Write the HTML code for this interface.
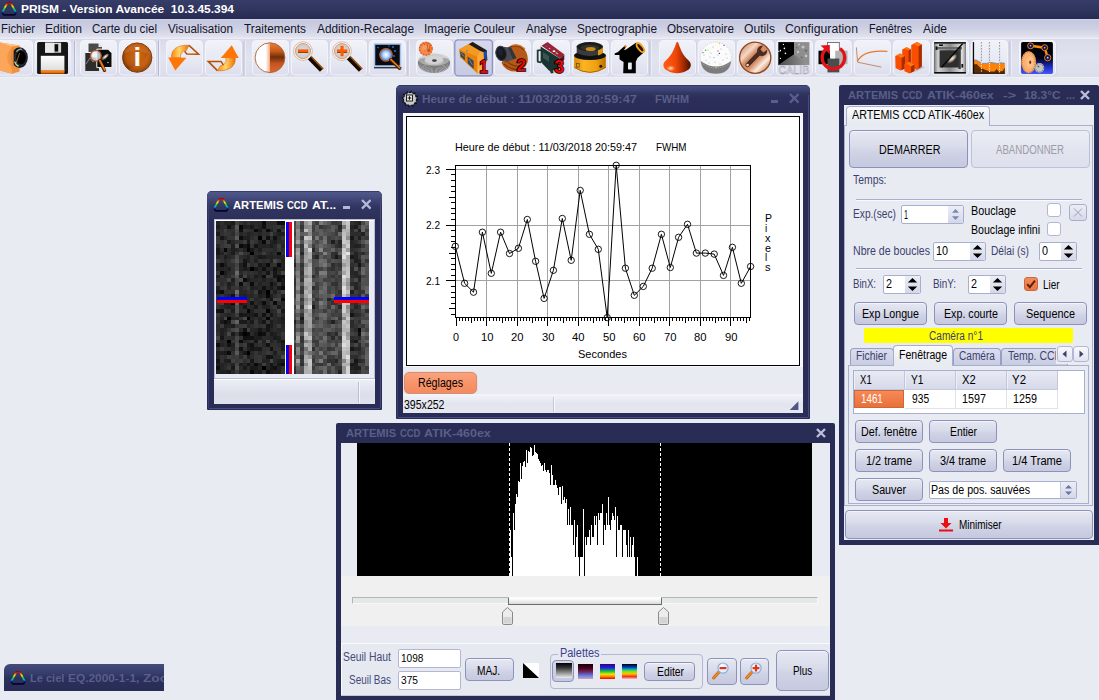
<!DOCTYPE html>
<html lang="fr"><head><meta charset="utf-8"><title>PRISM - Version Avancée 10.3.45.394</title>
<style>html,body{margin:0;padding:0;}body{width:1099px;height:700px;overflow:hidden;position:relative;background:#e8ebf1;font-family:'Liberation Sans', sans-serif;}div,svg,span{position:absolute;}span{white-space:pre;line-height:1;transform-origin:0 50%;}</style></head>
<body>
<div style="left:0px;top:0px;width:1099px;height:700px;background:#e8ebf1;"></div>
<div style="left:0px;top:0px;width:1099px;height:19px;background:linear-gradient(#363d69,#30365f 45%,#262b53);"></div>
<svg style="left:0.5px;top:1.6px;" width="16" height="14" viewBox="0 0 16 14"><defs><linearGradient id="pg501" x1="0" y1="0" x2="0" y2="1"><stop offset="0" stop-color="#a00000"/><stop offset="0.14" stop-color="#ff6000"/><stop offset="0.3" stop-color="#f0e800"/><stop offset="0.5" stop-color="#10d020"/><stop offset="0.66" stop-color="#00b8e8"/><stop offset="0.78" stop-color="#1030a0"/><stop offset="0.88" stop-color="#08083c"/><stop offset="1" stop-color="#04042c"/></linearGradient></defs><path d="M6.3 1 L9.9 1 L15 10.6 L13.6 12.8 L2.6 12.8 L1.2 10.6 Z" fill="none" stroke="url(#pg501)" stroke-width="1.7" stroke-linejoin="round"/></svg>
<span style="left:21px;top:4.19px;font-size:11px;color:#fff;font-weight:700;transform:scaleX(1.0863);">PRISM - Version Avancée  10.3.45.394</span>
<div style="left:0px;top:19px;width:1099px;height:20px;background:linear-gradient(#d6d8e9 0,#c5c8de 7%,#cdd0e3 45%,#dcdeec 82%,#e6e7f1 94%,#eff0f7 100%);"></div>
<span style="left:1px;top:23.42px;font-size:12.5px;color:#14142a;transform:scaleX(0.9063);">Fichier</span>
<span style="left:45px;top:23.42px;font-size:12.5px;color:#14142a;transform:scaleX(0.9677);">Edition</span>
<span style="left:92px;top:23.42px;font-size:12.5px;color:#14142a;transform:scaleX(0.9261);">Carte du ciel</span>
<span style="left:168px;top:23.42px;font-size:12.5px;color:#14142a;transform:scaleX(0.9292);">Visualisation</span>
<span style="left:244px;top:23.42px;font-size:12.5px;color:#14142a;transform:scaleX(0.9461);">Traitements</span>
<span style="left:317px;top:23.42px;font-size:12.5px;color:#14142a;transform:scaleX(0.9495);">Addition-Recalage</span>
<span style="left:424px;top:23.42px;font-size:12.5px;color:#14142a;transform:scaleX(0.9490);">Imagerie Couleur</span>
<span style="left:526px;top:23.42px;font-size:12.5px;color:#14142a;transform:scaleX(0.9217);">Analyse</span>
<span style="left:577px;top:23.42px;font-size:12.5px;color:#14142a;transform:scaleX(0.9436);">Spectrographie</span>
<span style="left:667px;top:23.42px;font-size:12.5px;color:#14142a;transform:scaleX(0.9362);">Observatoire</span>
<span style="left:744px;top:23.42px;font-size:12.5px;color:#14142a;transform:scaleX(0.9702);">Outils</span>
<span style="left:785px;top:23.42px;font-size:12.5px;color:#14142a;transform:scaleX(0.9817);">Configuration</span>
<span style="left:869px;top:23.42px;font-size:12.5px;color:#14142a;transform:scaleX(0.8714);">Fenêtres</span>
<span style="left:923px;top:23.42px;font-size:12.5px;color:#14142a;transform:scaleX(0.9588);">Aide</span>
<div style="left:0px;top:39px;width:1099px;height:38px;background:linear-gradient(#d9dbea,#e1e3ef 50%,#dcdeeb);"></div>
<div style="left:0px;top:77px;width:1099px;height:1px;background:#eef0f6;"></div>
<svg style="left:0px;top:0px;" width="1099" height="80" viewBox="0 0 1099 80"><defs><linearGradient id="tb" x1="0" y1="0" x2="0" y2="1"><stop offset="0" stop-color="#f1f2f9"/><stop offset="0.5" stop-color="#e8eaf4"/><stop offset="1" stop-color="#dcdeee"/></linearGradient><linearGradient id="tbp" x1="0" y1="0" x2="0" y2="1"><stop offset="0" stop-color="#d6d9ec"/><stop offset="1" stop-color="#c6cae2"/></linearGradient><radialGradient id="gInfo" cx="0.5" cy="0.45" r="0.55"><stop offset="0" stop-color="#cf6a14"/><stop offset="0.7" stop-color="#b4540c"/><stop offset="1" stop-color="#6e3004"/></radialGradient><linearGradient id="gRib" x1="0" y1="0" x2="1" y2="0"><stop offset="0" stop-color="#ff8a10"/><stop offset="0.45" stop-color="#ffd468"/><stop offset="1" stop-color="#f07000"/></linearGradient><linearGradient id="gConR" x1="0" y1="0" x2="0" y2="1"><stop offset="0" stop-color="#e88040"/><stop offset="0.28" stop-color="#c85a18"/><stop offset="0.48" stop-color="#6e2e0c"/><stop offset="0.7" stop-color="#c85420"/><stop offset="1" stop-color="#d86a30"/></linearGradient><linearGradient id="gConL" x1="0" y1="0" x2="1" y2="0"><stop offset="0" stop-color="#fff"/><stop offset="0.72" stop-color="#fff"/><stop offset="1" stop-color="#f0a880"/></linearGradient><radialGradient id="gLens" cx="0.5" cy="0.5" r="0.6"><stop offset="0" stop-color="#dcdcdc"/><stop offset="1" stop-color="#c4c4c4"/></radialGradient><linearGradient id="gCone" x1="0" y1="0" x2="1" y2="0"><stop offset="0" stop-color="#ff5a18"/><stop offset="0.45" stop-color="#f04808"/><stop offset="0.75" stop-color="#a02800"/><stop offset="1" stop-color="#4a1000"/></linearGradient><linearGradient id="gWr" x1="0" y1="0" x2="1" y2="1"><stop offset="0" stop-color="#c06a3a"/><stop offset="0.3" stop-color="#f4d8c8"/><stop offset="0.42" stop-color="#d08a60"/><stop offset="0.58" stop-color="#d89068"/><stop offset="0.72" stop-color="#fbeee6"/><stop offset="0.86" stop-color="#d89068"/><stop offset="1" stop-color="#a85830"/></linearGradient><linearGradient id="gYel" x1="0" y1="0" x2="1" y2="0"><stop offset="0" stop-color="#d88a00"/><stop offset="0.3" stop-color="#fbb424"/><stop offset="0.7" stop-color="#f0a010"/><stop offset="1" stop-color="#b87000"/></linearGradient><linearGradient id="gBlue" x1="0" y1="0" x2="0" y2="1"><stop offset="0" stop-color="#000"/><stop offset="0.5" stop-color="#000018"/><stop offset="0.8" stop-color="#2030c8"/><stop offset="1" stop-color="#4458f8"/></linearGradient><linearGradient id="gSq" x1="0" y1="0" x2="1" y2="0"><stop offset="0" stop-color="#777"/><stop offset="0.12" stop-color="#d0d0d0"/><stop offset="0.5" stop-color="#8a8a8a"/><stop offset="0.88" stop-color="#e0e0e0"/><stop offset="1" stop-color="#888"/></linearGradient><linearGradient id="gTri" x1="0" y1="0" x2="1" y2="0"><stop offset="0" stop-color="#4a4a4a"/><stop offset="1" stop-color="#9a9a9a"/></linearGradient><linearGradient id="gLab" x1="0" y1="0" x2="0" y2="1"><stop offset="0" stop-color="#fdfdfd"/><stop offset="1" stop-color="#dedede"/></linearGradient><radialGradient id="gGlow" cx="0.5" cy="0.5" r="0.5"><stop offset="0" stop-color="#fff"/><stop offset="0.45" stop-color="#b8d8ff"/><stop offset="1" stop-color="#3a78e0"/></radialGradient><radialGradient id="gGal" cx="0.55" cy="0.5" r="0.5"><stop offset="0" stop-color="#fff4e0"/><stop offset="0.5" stop-color="#b8a890"/><stop offset="1" stop-color="#3a3a3a"/></radialGradient></defs><rect x="-4" y="40" width="37.5" height="36" rx="3.5" fill="#cdd0e4"/><rect x="-3.5" y="40.5" width="36" height="34.6" rx="3" fill="url(#tb)" stroke="#f3f4fa"/><rect x="34.5" y="40" width="37.5" height="36" rx="3.5" fill="#cdd0e4"/><rect x="35.0" y="40.5" width="36" height="34.6" rx="3" fill="url(#tb)" stroke="#f3f4fa"/><rect x="80" y="40" width="37.5" height="36" rx="3.5" fill="#cdd0e4"/><rect x="80.5" y="40.5" width="36" height="34.6" rx="3" fill="url(#tb)" stroke="#f3f4fa"/><rect x="119" y="40" width="37.5" height="36" rx="3.5" fill="#cdd0e4"/><rect x="119.5" y="40.5" width="36" height="34.6" rx="3" fill="url(#tb)" stroke="#f3f4fa"/><rect x="166" y="40" width="37.5" height="36" rx="3.5" fill="#cdd0e4"/><rect x="166.5" y="40.5" width="36" height="34.6" rx="3" fill="url(#tb)" stroke="#f3f4fa"/><rect x="205" y="40" width="37.5" height="36" rx="3.5" fill="#cdd0e4"/><rect x="205.5" y="40.5" width="36" height="34.6" rx="3" fill="url(#tb)" stroke="#f3f4fa"/><rect x="252" y="40" width="37.5" height="36" rx="3.5" fill="#cdd0e4"/><rect x="252.5" y="40.5" width="36" height="34.6" rx="3" fill="url(#tb)" stroke="#f3f4fa"/><rect x="291" y="40" width="37.5" height="36" rx="3.5" fill="#cdd0e4"/><rect x="291.5" y="40.5" width="36" height="34.6" rx="3" fill="url(#tb)" stroke="#f3f4fa"/><rect x="330" y="40" width="37.5" height="36" rx="3.5" fill="#cdd0e4"/><rect x="330.5" y="40.5" width="36" height="34.6" rx="3" fill="url(#tb)" stroke="#f3f4fa"/><rect x="369" y="40" width="37.5" height="36" rx="3.5" fill="#cdd0e4"/><rect x="369.5" y="40.5" width="36" height="34.6" rx="3" fill="url(#tb)" stroke="#f3f4fa"/><rect x="416" y="40" width="37.5" height="36" rx="3.5" fill="#cdd0e4"/><rect x="416.5" y="40.5" width="36" height="34.6" rx="3" fill="url(#tb)" stroke="#f3f4fa"/><rect x="454.8" y="39.8" width="37.6" height="36" rx="3.5" fill="url(#tbp)" stroke="#8e94c2" stroke-width="1.3"/><rect x="494" y="40" width="37.5" height="36" rx="3.5" fill="#cdd0e4"/><rect x="494.5" y="40.5" width="36" height="34.6" rx="3" fill="url(#tb)" stroke="#f3f4fa"/><rect x="533" y="40" width="37.5" height="36" rx="3.5" fill="#cdd0e4"/><rect x="533.5" y="40.5" width="36" height="34.6" rx="3" fill="url(#tb)" stroke="#f3f4fa"/><rect x="572" y="40" width="37.5" height="36" rx="3.5" fill="#cdd0e4"/><rect x="572.5" y="40.5" width="36" height="34.6" rx="3" fill="url(#tb)" stroke="#f3f4fa"/><rect x="611" y="40" width="37.5" height="36" rx="3.5" fill="#cdd0e4"/><rect x="611.5" y="40.5" width="36" height="34.6" rx="3" fill="url(#tb)" stroke="#f3f4fa"/><rect x="659" y="40" width="37.5" height="36" rx="3.5" fill="#cdd0e4"/><rect x="659.5" y="40.5" width="36" height="34.6" rx="3" fill="url(#tb)" stroke="#f3f4fa"/><rect x="698" y="40" width="37.5" height="36" rx="3.5" fill="#cdd0e4"/><rect x="698.5" y="40.5" width="36" height="34.6" rx="3" fill="url(#tb)" stroke="#f3f4fa"/><rect x="737" y="40" width="37.5" height="36" rx="3.5" fill="#cdd0e4"/><rect x="737.5" y="40.5" width="36" height="34.6" rx="3" fill="url(#tb)" stroke="#f3f4fa"/><rect x="776" y="40" width="37.5" height="36" rx="3.5" fill="#cdd0e4"/><rect x="776.5" y="40.5" width="36" height="34.6" rx="3" fill="url(#tb)" stroke="#f3f4fa"/><rect x="815" y="40" width="37.5" height="36" rx="3.5" fill="#cdd0e4"/><rect x="815.5" y="40.5" width="36" height="34.6" rx="3" fill="url(#tb)" stroke="#f3f4fa"/><rect x="854" y="40" width="37.5" height="36" rx="3.5" fill="#cdd0e4"/><rect x="854.5" y="40.5" width="36" height="34.6" rx="3" fill="url(#tb)" stroke="#f3f4fa"/><rect x="893" y="40" width="37.5" height="36" rx="3.5" fill="#cdd0e4"/><rect x="893.5" y="40.5" width="36" height="34.6" rx="3" fill="url(#tb)" stroke="#f3f4fa"/><rect x="932" y="40" width="37.5" height="36" rx="3.5" fill="#cdd0e4"/><rect x="932.5" y="40.5" width="36" height="34.6" rx="3" fill="url(#tb)" stroke="#f3f4fa"/><rect x="971" y="40" width="37.5" height="36" rx="3.5" fill="#cdd0e4"/><rect x="971.5" y="40.5" width="36" height="34.6" rx="3" fill="url(#tb)" stroke="#f3f4fa"/><rect x="1019" y="40" width="37.5" height="36" rx="3.5" fill="#cdd0e4"/><rect x="1019.5" y="40.5" width="36" height="34.6" rx="3" fill="url(#tb)" stroke="#f3f4fa"/><rect x="74" y="41" width="1.2" height="35" fill="#b4b8d6"/><rect x="75.2" y="41" width="1" height="35" fill="#f2f3f9"/><rect x="158" y="41" width="1.2" height="35" fill="#b4b8d6"/><rect x="159.2" y="41" width="1" height="35" fill="#f2f3f9"/><rect x="243.5" y="41" width="1.2" height="35" fill="#b4b8d6"/><rect x="244.7" y="41" width="1" height="35" fill="#f2f3f9"/><rect x="407.5" y="41" width="1.2" height="35" fill="#b4b8d6"/><rect x="408.7" y="41" width="1" height="35" fill="#f2f3f9"/><rect x="649.5" y="41" width="1.2" height="35" fill="#b4b8d6"/><rect x="650.7" y="41" width="1" height="35" fill="#f2f3f9"/><rect x="1009.5" y="41" width="1.2" height="35" fill="#b4b8d6"/><rect x="1010.7" y="41" width="1" height="35" fill="#f2f3f9"/><path d="M0 42.4 L19.6 45.6 L19.6 71.4 L12 73.8 L0 70.5Z" fill="#f5903a"/><path d="M0 42.4 L12 45.2 L12 73.8 L0 70.5Z" fill="#fba658"/><path d="M0 42.4 L19.6 45.6 L12 46.4Z" fill="#ffc388"/><ellipse cx="19.6" cy="57.6" rx="8.2" ry="10.3" fill="#17191e"/><ellipse cx="20.6" cy="57.6" rx="6.4" ry="8.6" fill="#26292f"/><ellipse cx="21" cy="57.6" rx="4.9" ry="6.9" fill="#000"/><path d="M16.4 51.6 Q18.6 48.8 21.4 49.2" stroke="#8fd070" stroke-width="1.4" fill="none"/><path d="M18.6 49.6 Q20.4 48.8 22.4 49.6" stroke="#b070d0" stroke-width="1" fill="none"/><path d="M14.6 61.6 Q15.8 65.2 18.6 66.4" stroke="#b4e4a0" stroke-width="1.4" fill="none"/><path d="M16.2 63 L19.6 53.2" stroke="#d88838" stroke-width="0.7"/><path d="M11.4 46.4 H13.5 V68.6 H11.4Z" fill="#f5903a"/><path d="M7.2 57.6 A8.4 10.3 0 0 1 13.5 47.6 L13.5 67.6 A8.4 10.3 0 0 1 7.2 57.6Z" fill="#e8853a" fill-opacity="0.55"/><path d="M38.6 42 H66.4 Q68 42 68 43.6 V72.4 Q68 74 66.4 74 H38.7 Q37.1 74 37.1 72.4 V43.6 Q37.1 42 38.6 42Z" fill="#161616"/><rect x="45.1" y="42.7" width="16" height="10" fill="#d6d6d6"/><rect x="45.1" y="42.7" width="9" height="10" fill="#e9e9e9"/><rect x="54.6" y="44.2" width="3.6" height="7.4" fill="#0a0a0a"/><rect x="40.8" y="55.8" width="23.6" height="14.4" fill="url(#gLab)"/><rect x="40.8" y="69.8" width="23.6" height="0.9" fill="#cfe6f8"/><rect x="40.8" y="70.6" width="23.6" height="3" fill="#ee6c00"/><rect x="40.8" y="70.6" width="23.6" height="1" fill="#ff8a18"/><path d="M88 43 H98.5 L102.5 47 V60 H88Z" fill="#4a4a4a" stroke="#f4f4f4" stroke-width="1"/><path d="M98.5 43 V47 H102.5Z" fill="#e8e8e8"/><path d="M84.8 52.5 H99.6 V71.6 H84.8Z" fill="#2c2c2c" stroke="#f0f0f0" stroke-width="1"/><path d="M86 64 L90 58 L93 62 L98 55" stroke="#9a9a9a" stroke-width="0.8" fill="none"/><path d="M96.8 49.2 H108 L112 53.2 V67.6 H96.8Z" fill="#0c0c0c" stroke="#f4f4f4" stroke-width="1"/><ellipse cx="105" cy="57" rx="4.6" ry="1.8" transform="rotate(-40 105 57)" fill="url(#gGal)"/><circle cx="108" cy="62.5" r="0.7" fill="#ddd"/><circle cx="95.8" cy="55.8" r="5.4" fill="#dfe6ee" fill-opacity="0.82" stroke="#b4562a" stroke-width="1.2"/><circle cx="94.6" cy="55" r="2.6" fill="#fff" fill-opacity="0.8"/><path d="M99.6 60.6 L104.6 70.4" stroke="#3a1c08" stroke-width="3.2" stroke-linecap="round"/><path d="M99.8 60.4 L104.8 70" stroke="#ee7a14" stroke-width="1.9" stroke-linecap="round"/><circle cx="137.2" cy="57.6" r="14.7" fill="url(#gInfo)" stroke="#7c3606" stroke-width="0.9"/><clipPath id="cInfo"><circle cx="137.2" cy="57.6" r="14.2"/></clipPath><g clip-path="url(#cInfo)"><path d="M120 55 Q137 46 154 57 V40 H120Z" fill="#e8883a" opacity="0.3"/><path d="M126 70 Q142 66 152 48 V74 H126Z" fill="#d87424" opacity="0.35"/></g><text x="137.35" y="66" text-anchor="middle" font-family="Liberation Sans, sans-serif" font-weight="700" font-size="25.6" fill="#fff" stroke="#fff" stroke-width="0.2">i</text><path d="M171.6 57.7 C170.8 49 178 44.8 189 45.2 L186.3 50.6 C181.4 51.2 180.4 54 180.6 57.7Z" fill="url(#gRib)" stroke="#c85a00" stroke-width="0.5"/><path d="M168.2 57.4 L186.4 57.7 L175.3 70.6Z" fill="#ff7608"/><path d="M189 45.4 L198.6 54.2 L186.8 54 L184.6 51.2" fill="none" stroke="#b84e00" stroke-width="1.5" stroke-linejoin="miter"/><path d="M225.8 57.7 L235.2 57.7 C236.2 66.4 229 71.2 217.4 70.8 L220.6 65.6 C225.6 65 226.4 61.4 225.8 57.7Z" fill="url(#gRib)" stroke="#c85a00" stroke-width="0.5"/><path d="M231.7 45.2 L220.8 57.9 L238.8 57.9Z" fill="#ff7608"/><path d="M217.4 70.6 L208.2 61.4 L221 61.4 L223.4 65" fill="none" stroke="#b84e00" stroke-width="1.5"/><path d="M270 42.8 A14.9 14.9 0 0 0 270 72.6Z" fill="url(#gConL)"/><path d="M270 42.8 A14.9 14.9 0 0 1 270 72.6Z" fill="url(#gConR)"/><circle cx="270" cy="57.7" r="14.9" fill="none" stroke="#b0622c" stroke-width="0.9"/><path d="M309.4 57.6 L321.6 70.2" stroke="#140a04" stroke-width="4.6"/><path d="M311.6 57 L323.2 69" stroke="#a85208" stroke-width="1.6"/><circle cx="303" cy="51.1" r="8.4" fill="url(#gLens)" stroke="#fff" stroke-width="1.7"/><circle cx="303" cy="51.1" r="7.6" fill="none" stroke="#d88848" stroke-width="0.8"/><circle cx="303" cy="51.1" r="9.3" fill="none" stroke="#c09070" stroke-width="0.6"/><rect x="298" y="49.4" width="10.2" height="3.2" fill="#ff5a00"/><rect x="298" y="52.2" width="10.2" height="0.7" fill="#5a2800"/><path d="M348.4 57.6 L360.6 70.2" stroke="#140a04" stroke-width="4.6"/><path d="M350.6 57 L362.2 69" stroke="#a85208" stroke-width="1.6"/><circle cx="342" cy="51.1" r="8.4" fill="url(#gLens)" stroke="#fff" stroke-width="1.7"/><circle cx="342" cy="51.1" r="7.6" fill="none" stroke="#d88848" stroke-width="0.8"/><circle cx="342" cy="51.1" r="9.3" fill="none" stroke="#c09070" stroke-width="0.6"/><rect x="337" y="49.4" width="10.2" height="3.2" fill="#ff5a00"/><rect x="337" y="52.2" width="10.2" height="0.7" fill="#5a2800"/><rect x="340.5" y="45.8" width="3.1" height="10.4" fill="#ff5a00"/><rect x="374.5" y="44" width="26" height="22" fill="#0a0c14" stroke="#a4c6ee" stroke-width="1.5"/><rect x="374" y="67" width="27.4" height="1.4" fill="#30343c"/><g fill="#3a6cd0"><circle cx="378" cy="47.5" r="0.8"/><circle cx="393" cy="47" r="1"/><circle cx="395" cy="51" r="1"/><circle cx="394" cy="56" r="0.9"/><circle cx="389" cy="46" r="0.7"/></g><circle cx="386" cy="54.8" r="6.2" fill="url(#gGlow)" stroke="#b8622a" stroke-width="1.3"/><path d="M390.6 59.6 L399.6 68.4" stroke="#3a1a06" stroke-width="3.2" stroke-linecap="round"/><path d="M390.8 59.4 L399.8 68" stroke="#e87a18" stroke-width="1.7" stroke-linecap="round"/><ellipse cx="434" cy="63.2" rx="16" ry="9.8" fill="#cfcfcf"/><path d="M442.5 58.4L448.5 59.1M442.9 58.8L449.1 59.9M443.1 59.2L449.5 60.8M443.3 59.7L449.8 61.7M443.4 60.1L450.0 62.6M443.4 60.5L450.0 63.5M443.3 61.0L449.9 64.4M443.2 61.4L449.6 65.3M443.0 61.9L449.2 66.2M442.6 62.3L448.7 67.1M442.3 62.7L448.1 67.9M441.8 63.1L447.3 68.7M441.3 63.4L446.4 69.4M440.7 63.8L445.4 70.1M440.1 64.1L444.3 70.7M439.4 64.3L443.1 71.3M438.6 64.6L441.9 71.7M437.8 64.8L440.5 72.1M437.0 64.9L439.1 72.5M436.2 65.1L437.7 72.7M435.3 65.2L436.2 72.9M434.4 65.2L434.7 73.0M433.6 65.2L433.3 73.0M432.7 65.2L431.8 72.9M431.8 65.1L430.3 72.7M431.0 64.9L428.9 72.5M430.2 64.8L427.5 72.1M429.4 64.6L426.1 71.7M428.6 64.3L424.9 71.3M427.9 64.1L423.7 70.7M427.3 63.8L422.6 70.1M426.7 63.4L421.6 69.4M426.2 63.1L420.7 68.7M425.7 62.7L419.9 67.9M425.4 62.3L419.3 67.1M425.0 61.9L418.8 66.2M424.8 61.4L418.4 65.3M424.7 61.0L418.1 64.4M424.6 60.5L418.0 63.5M424.6 60.1L418.0 62.6M424.7 59.7L418.2 61.7M424.9 59.2L418.5 60.8M425.1 58.8L418.9 59.9M425.5 58.4L419.5 59.1" stroke="#5e5e5e" stroke-width="0.75" fill="none"/><ellipse cx="434" cy="59.6" rx="15.6" ry="6.2" fill="#d2d2d2" opacity="0.55"/><ellipse cx="434" cy="60.2" rx="9.6" ry="4.8" fill="#bdbdbd"/><ellipse cx="434" cy="59.7" rx="9" ry="4.2" fill="#d4d4d4"/><ellipse cx="434.4" cy="60.6" rx="2.4" ry="1.4" fill="#444"/><circle cx="425.8" cy="48.8" r="7" fill="#f58a50"/><circle cx="425.8" cy="48.8" r="6.2" fill="none" stroke="#d8601c" stroke-width="1.6" stroke-dasharray="1.2 1.6"/><path d="M424 43 L426 50 M427 42.6 L428 50 M430 43.4 L429.6 50.4 M421.4 44.6 L424.6 50.6" stroke="#d05a18" stroke-width="0.9"/><circle cx="424.4" cy="47.6" r="2.6" fill="#fba878" opacity="0.7"/><circle cx="428.8" cy="50.6" r="1.5" fill="#d04c10"/><path d="M459 49.4 L472.6 42 L486.6 50.2 L487.4 60 L481.6 70.8 L477.4 73.4 L460.2 57.2Z" fill="#e8820a"/><path d="M472.6 42 L486.6 50.2 L486.8 53 L480 51 L468.6 44.2Z" fill="#1a1c24"/><path d="M486.6 50.2 L487.4 60 L484 62 L483.4 52.4Z" fill="#1c4a9a"/><path d="M459 49.4 L468.6 44.2 L480 51 L477.2 56.4Z" fill="#f29a22"/><path d="M477.2 56.4 L480 51 L483.4 52.4 L484 62 L481.6 70.8 L477.4 73.4Z" fill="#f8aa40"/><path d="M460.2 51.2 L464.8 54 L465 60.2 L460.6 56.6Z" fill="#3c4656"/><path d="M467.6 56.6 L473.6 60.8 L473.8 69 L467.8 63.6Z" fill="#3c4656"/><path d="M461.4 53 L464 56.4 M469 59 L472.4 65" stroke="#8a94a4" stroke-width="0.7"/><circle cx="467" cy="50.8" r="1" fill="#8a8a80"/><rect x="478.4" y="69" width="0.9" height="3.4" fill="#ffe890"/><text x="479.2" y="73.2" font-family="Liberation Sans, sans-serif" font-weight="700" font-size="18.5" fill="#f40000" stroke="#000" stroke-width="1.6" paint-order="stroke" textLength="8.6" lengthAdjust="spacingAndGlyphs">1</text><path d="M507 48 Q514 42 521 46 Q529 52 527.6 62 Q525 71 515 71.6 Q505 71 501.6 63Z" fill="#b45a18"/><path d="M510 47 Q518 44 524 50 M506 60 Q512 68 524 66 M504 64 Q512 71 522 69.4" stroke="#7e3808" stroke-width="1.1" fill="none"/><path d="M512 45.4 Q519 43.4 525 49" stroke="#d87830" stroke-width="1.2" fill="none"/><path d="M499.6 46.6 L511 47.6 L516.4 58 L505 62.6Z" fill="#4a4c54"/><path d="M508 47.4 L511 47.6 L516.4 58 L513 59.4Z" fill="#32343a"/><ellipse cx="501.2" cy="53.4" rx="5.3" ry="7.2" transform="rotate(-12 501.2 53.4)" fill="#17181c" stroke="#3a3c44" stroke-width="1"/><ellipse cx="500.4" cy="52" rx="2.6" ry="3.6" transform="rotate(-12 500.4 52)" fill="#1c2234"/><text x="516.6" y="71.4" font-family="Liberation Sans, sans-serif" font-weight="700" font-size="16.6" fill="#f40000" stroke="#000" stroke-width="1.6" paint-order="stroke" textLength="9.4" lengthAdjust="spacingAndGlyphs">2</text><path d="M536.8 51 Q536 49.6 538 49.4 L541 49.2 V51 L538.6 51.2 V61 L541 61.4 V63.2 L538 62.8 Q536.8 62.6 536.8 61Z" fill="#1e3a38"/><path d="M540.6 46.4 L559.9 58.5 L559.4 69.8 L549.2 70.8 L540.6 61.8Z" fill="#1a3232"/><path d="M541.5 45.8 L547.6 42.1 L564.4 54.4 L559.9 58.5Z" fill="#9a2434"/><path d="M559.9 58.5 L564.4 54.4 L564.2 60 L559.6 64Z" fill="#5a141c"/><path d="M543 52 L549 56 L549 62 L543 58Z" fill="#3a5452"/><path d="M549.4 70 L551 73.6 L553.6 73 L553 69.6Z" fill="#1e3a38"/><circle cx="546.6" cy="46.2" r="0.9" fill="#3a5ac0"/><circle cx="549.6" cy="48.4" r="0.7" fill="#c8c8c8"/><ellipse cx="554" cy="51.2" rx="1.4" ry="0.9" fill="#f4f4e8"/><rect x="555.6" y="52.6" width="2.4" height="1.2" transform="rotate(35 556.8 53.2)" fill="#c8b890"/><text x="554.2" y="72.8" font-family="Liberation Sans, sans-serif" font-weight="700" font-size="17.6" fill="#f40000" stroke="#000" stroke-width="1.6" paint-order="stroke" textLength="9.8" lengthAdjust="spacingAndGlyphs">3</text><path d="M574.2 56 V67.4 Q590 77.4 605.8 67.4 V56Z" fill="url(#gYel)"/><ellipse cx="590" cy="55.4" rx="15.9" ry="4.6" fill="#101010"/><path d="M576.7 46 V53 Q590 59.6 602.9 53 V46Z" fill="#3a3a3c"/><path d="M598 45 V55.6 Q601 54.6 602.9 53 V46Z" fill="#d89a10"/><ellipse cx="589.8" cy="46.6" rx="13.1" ry="4.5" fill="#1a1a1a"/><ellipse cx="589.8" cy="47.6" rx="9.4" ry="3" fill="#303030"/><ellipse cx="590.6" cy="49" rx="5" ry="2" fill="#c88a10"/><circle cx="600.8" cy="66.2" r="1.5" fill="#2a1800"/><rect x="576.6" y="63.6" width="2.6" height="3.6" fill="none" stroke="#6a4000" stroke-width="0.7"/><path d="M574.2 67.4 Q590 77.4 605.8 67.4" fill="none" stroke="#a86a00" stroke-width="1"/><path d="M636.3 42.5 L644 52.3 L637.5 58 L635.8 61.8 L635.8 73.2 L623.2 73.2 L623.6 62 L619.6 59.6 L619.4 55 L614.8 55 L614.6 53.4 L618 52 L620.6 49.4 L624.6 46 L625.8 47.6 L623.8 50.2 L626 49.6Z" fill="#000"/><rect x="628" y="62.6" width="3.8" height="6.9" rx="0.8" fill="#e9ebf4"/><path d="M624 45.8 L626 45 L626.8 46.8 L625 47.6Z" fill="#f07810"/><ellipse cx="640.4" cy="47.6" rx="2.3" ry="5.4" transform="rotate(-38 640.4 47.6)" fill="#241400" stroke="#f6a818" stroke-width="1.8"/><path d="M676.4 42.6 Q677.2 41.6 678.2 42.6 C680.6 50 683.4 56 687.6 59.4 C692 63 692 67.6 687 70.6 C681 74.2 673 74.2 667.2 70.6 C662.2 67.6 662.2 63 666.8 59.4 C671 56 674 50 676.4 42.6Z" fill="url(#gCone)"/><ellipse cx="670.8" cy="68.2" rx="2.2" ry="1.5" fill="#ffe0c0"/><ellipse cx="670.8" cy="68.2" rx="4" ry="2.8" fill="#ff9a60" opacity="0.45"/><circle cx="715.9" cy="57.7" r="16" fill="#fbfbfb"/><circle cx="715.9" cy="57.7" r="15.6" fill="none" stroke="#b8b8b8" stroke-width="0.9" stroke-dasharray="0.7 1.3"/><path d="M700.6 61 Q716 72 731.2 61 Q729.6 73.7 715.9 73.7 Q702.4 73.7 700.6 61Z" fill="#7c7c7c"/><path d="M701.4 63 Q716 73 730.4 63" fill="none" stroke="#b0b0b0" stroke-width="1" stroke-dasharray="0.8 1"/><g fill="#9a9a9a"><circle cx="708" cy="50" r="0.5"/><circle cx="713" cy="47" r="0.5"/><circle cx="721" cy="49" r="0.5"/><circle cx="726" cy="54" r="0.5"/><circle cx="710" cy="57" r="0.5"/><circle cx="718" cy="55" r="0.5"/><circle cx="723" cy="60" r="0.5"/><circle cx="706" cy="60" r="0.5"/><circle cx="715" cy="62" r="0.5"/><circle cx="711" cy="53" r="0.5"/><circle cx="727" cy="58" r="0.5"/><circle cx="704" cy="55" r="0.5"/><circle cx="720" cy="64" r="0.5"/><circle cx="709" cy="63" r="0.5"/></g><circle cx="705.6" cy="50.2" r="0.8" fill="#30d020"/><circle cx="718" cy="51" r="0.7" fill="#e06010"/><circle cx="719.4" cy="53.4" r="0.7" fill="#3030e0"/><circle cx="719.4" cy="43.6" r="0.8" fill="#f0e000"/><circle cx="724" cy="45.4" r="0.6" fill="#8020a0"/><circle cx="714" cy="57.6" r="0.6" fill="#20d0d0"/><circle cx="703" cy="52.6" r="0.6" fill="#6020c0"/><circle cx="716" cy="67.4" r="0.7" fill="#c0e040"/><circle cx="755.2" cy="57.7" r="15.6" fill="url(#gWr)" stroke="#904618" stroke-width="1.3"/><path d="M747.6 65 L759.6 52.6" stroke="#4a2c22" stroke-width="4.4" stroke-linecap="round"/><path d="M757 51 Q757.4 45.6 763 45.4 L760.4 49.6 L763.4 52.4 L767 49.8 Q767.6 55.4 762 56.2 Q758.4 55.8 757 51Z" fill="#4a2c22"/><circle cx="747.6" cy="65" r="1.3" fill="#f0d4c4"/><rect x="778.3" y="42.1" width="15.7" height="23" fill="#000"/><rect x="794" y="42.1" width="15.4" height="23" fill="#8e8e8e"/><g fill="#c4c4c4"><circle cx="803" cy="47" r="1.6"/><circle cx="798" cy="52" r="1.2"/><circle cx="806" cy="56" r="1.4"/><circle cx="799" cy="44.6" r="1"/></g><g fill="#6a6a6a"><circle cx="806" cy="50.6" r="1.2"/><circle cx="801.6" cy="57.6" r="1"/><circle cx="796.6" cy="47.6" r="0.9"/></g><path d="M778.3 65.1 L793.6 54.4 L809.4 65.1Z" fill="url(#gTri)"/><g fill="#fff"><circle cx="783.4" cy="44.4" r="0.6"/><circle cx="784.4" cy="48.4" r="0.8"/><circle cx="780.4" cy="50.6" r="0.8"/><circle cx="778.8" cy="51.4" r="0.6"/><circle cx="785.4" cy="53.4" r="0.8"/><circle cx="780.4" cy="58.4" r="0.6"/></g><text x="778.6" y="73.6" font-family="Liberation Sans, sans-serif" font-size="11.4" fill="#fdfdfd" stroke="#9a9aa8" stroke-width="0.5" textLength="30.6" lengthAdjust="spacingAndGlyphs">CALIB</text><rect x="827.5" y="42.5" width="11.8" height="16" fill="#fff" stroke="#5a5a5a" stroke-width="0.8"/><rect x="818.5" y="50.7" width="11.5" height="13.5" fill="#000"/><rect x="835.2" y="50.7" width="12.3" height="13.5" fill="#b4b4b4"/><rect x="827.5" y="58.5" width="11.8" height="13.9" fill="#4c4c4c"/><rect x="830.4" y="56.4" width="4.6" height="2.2" fill="#f4f4f4"/><path d="M825.4 49.7 A11.3 11.3 0 1 0 840 48.5" fill="none" stroke="#e01418" stroke-width="3.3"/><path d="M820.6 45.4 L829.8 45 L829.8 54.2Z" fill="#e01418"/><path d="M856.4 47.4 L857.6 62.2 L881.3 67.1" fill="none" stroke="#c48c70" stroke-width="1"/><path d="M857.4 61.6 Q863 49.4 887.4 51.4" fill="none" stroke="#e87a30" stroke-width="1.2"/><path d="M902.2 49.6 L906.6 47.2 L910.8 49.2 L910.8 64 L902.2 64Z" fill="#f84c00"/><path d="M906.6 47.2 L910.8 49.2 L908.6 50.6 L904.4 48.6Z" fill="#ff7418"/><path d="M908.6 50.6 L910.8 49.2 L910.8 64 L908.6 64Z" fill="#a82c00"/><path d="M911.2 45 L917 42.1 L921.8 44.4 L921.8 66.6 L917 70 L911.2 67.4Z" fill="#fa4e00"/><path d="M917 42.1 L921.8 44.4 L918.6 46.6 L913.6 44Z" fill="#ff7418"/><path d="M918.6 46.6 L921.8 44.4 L921.8 66.6 L918.6 69Z" fill="#a82c00"/><path d="M895.2 56 L900 53.6 L905 56 L905 68.4 L900.4 70.6 L895.6 68Z" fill="#fa4e00"/><path d="M900 53.6 L905 56 L901.6 58 L896.6 55.4Z" fill="#ff7418"/><path d="M901.6 58 L905 56 L905 68.4 L901.6 70.2Z" fill="#a82c00"/><path d="M904.2 64 L909 61.8 L914.5 64.4 L914.5 71 L909.6 73.6 L904.4 71.2Z" fill="#fa4e00"/><path d="M909 61.8 L914.5 64.4 L911 66.4 L905.8 63.6Z" fill="#ff7418"/><path d="M911 66.4 L914.5 64.4 L914.5 71 L911 72.8Z" fill="#a82c00"/><path d="M915 72 L925 67 L922 66.6 L915 70.6Z" fill="#8a8a9a" opacity="0.4"/><rect x="934.1" y="42.1" width="31.8" height="31.5" fill="#0a0a0a"/><rect x="934.1" y="43.6" width="31.8" height="28.4" fill="url(#gSq)"/><rect x="939.6" y="50.3" width="19.7" height="17.2" fill="#2e2e2e"/><rect x="937" y="47" width="25" height="2.4" fill="#6a6a6a"/><rect x="958.4" y="47" width="2.4" height="22" fill="#3a3a3a"/><ellipse cx="951.6" cy="59" rx="6.4" ry="3" transform="rotate(-42 951.6 59)" fill="url(#gGal)"/><path d="M941.6 67.2 L962.8 43.6" stroke="#0a0a0a" stroke-width="1.5"/><rect x="939" y="44.4" width="4" height="1.6" fill="#111"/><rect x="935.6" y="46.4" width="1.8" height="3.6" fill="#111"/><rect x="961.4" y="64" width="1.8" height="3.6" fill="#111"/><path d="M973.8 60.1 Q976.4 59.6 978.6 61.4 Q982 64.4 986.6 63.4 Q990.6 61.8 994 63 Q998 64.4 1001 62.8 L1004.8 63.4 V73.6 H973.8Z" fill="#ff8208"/><path d="M973.8 60.1 Q976.4 59.6 978.6 61.4 Q982 64.4 986.6 63.4 Q990.6 61.8 994 63 Q998 64.4 1001 62.8 L1004.8 63.4" fill="none" stroke="#7a8494" stroke-width="0.9"/><path d="M973.8 64.6 L976.6 64 L980 67.4 L985.6 70 L990 71.6 L994.6 71.6 L996.6 69 L998.6 71.4 L1002.6 71 L1004.8 67.6 V73.6 H973.8Z" fill="#5e2c00"/><path d="M981.4 42.1 V61.6 M989.4 42.1 V62 M999.6 42.1 V62.6" stroke="#8a8a8a" stroke-width="0.9" stroke-dasharray="1.6 1.3"/><path d="M981.4 62.6 V73 M989.4 63 V73 M999.6 63.4 V73" stroke="#fff" stroke-width="0.9" stroke-dasharray="1.3 1.3"/><rect x="972.8" y="42.1" width="1.3" height="31.6" fill="#0a0a0a"/><rect x="972.8" y="72.8" width="32" height="0.9" fill="#0a0a0a"/><rect x="1021.1" y="42.1" width="31.8" height="31.8" rx="1.6" fill="url(#gBlue)"/><path d="M1030.6 45.8 L1044.7 47.7 L1047.7 57.7" fill="none" stroke="#ff8a10" stroke-width="2.4"/><g fill="#10164c" stroke="#ff8a10" stroke-width="0.9"><circle cx="1030.6" cy="45.8" r="3"/><circle cx="1044.7" cy="47.7" r="3"/><circle cx="1047.7" cy="57.7" r="3.2"/></g><g fill="#c8d0ff"><circle cx="1030.6" cy="45.8" r="0.8"/><circle cx="1044.7" cy="47.7" r="0.8"/><circle cx="1047.7" cy="57.7" r="0.9"/></g><ellipse cx="1028.7" cy="62.2" rx="7.4" ry="11" fill="#f9b070"/><ellipse cx="1028.7" cy="62.2" rx="6.6" ry="10.2" fill="none" stroke="#d87828" stroke-width="1.6" stroke-dasharray="0.8 1.2"/><ellipse cx="1030" cy="62.2" rx="3.6" ry="6" fill="#fbc088"/><ellipse cx="1030.2" cy="62.2" rx="1" ry="1.7" fill="#7a3404"/><circle cx="1039.4" cy="67.9" r="4.8" fill="#c6c6c6"/><circle cx="1039.4" cy="67.9" r="4.1" fill="none" stroke="#7a7a7a" stroke-width="1.4" stroke-dasharray="0.9 1.1"/><circle cx="1038.4" cy="66.6" r="1" fill="#6a6a6a"/></svg>
<div style="left:207px;top:191px;width:175px;height:219px;background:#292d56;border-radius:5px 5px 1px 1px;"></div>
<div style="left:207px;top:191px;width:175px;height:28px;border-radius:5px 5px 0 0;background:linear-gradient(#2a2f5c 0,#4f5788 5%,#474e80 20%,#393f6e 40%,#30355f 58%,#2c3059 100%);"></div>
<div style="left:380px;top:201px;width:1px;height:207px;background:#474d80;"></div>
<div style="left:209px;top:408px;width:171px;height:1px;background:#474d80;"></div>
<div style="left:208px;top:201px;width:1px;height:207px;background:#3a3f70;"></div>
<div style="left:214px;top:219px;width:161px;height:185px;background:#e8ebf1;"></div>
<svg style="left:213px;top:197.6px;" width="16" height="14" viewBox="0 0 16 14"><defs><linearGradient id="pg213197" x1="0" y1="0" x2="0" y2="1"><stop offset="0" stop-color="#a00000"/><stop offset="0.14" stop-color="#ff6000"/><stop offset="0.3" stop-color="#f0e800"/><stop offset="0.5" stop-color="#10d020"/><stop offset="0.66" stop-color="#00b8e8"/><stop offset="0.78" stop-color="#1030a0"/><stop offset="0.88" stop-color="#08083c"/><stop offset="1" stop-color="#04042c"/></linearGradient></defs><path d="M6.3 1 L9.9 1 L15 10.6 L13.6 12.8 L2.6 12.8 L1.2 10.6 Z" fill="none" stroke="url(#pg213197)" stroke-width="1.7" stroke-linejoin="round"/></svg>
<span style="left:233.2px;top:199.69px;font-size:11px;color:#fff;font-weight:700;transform:scaleX(1.0182);">ARTEMIS</span>
<span style="left:287.2px;top:199.69px;font-size:11px;color:#fff;font-weight:700;transform:scaleX(0.8598);">CCD</span>
<span style="left:311.8px;top:199.69px;font-size:11px;color:#fff;font-weight:700;transform:scaleX(1.1103);">AT...</span>
<div style="left:343px;top:206px;width:7.4px;height:2.6px;background:#b4b8d6;"></div>
<svg style="left:360.6px;top:199.4px;" width="10.6" height="10.6" viewBox="0 0 10.6 10.6"><path d="M1 1 L9.6 9.6 M9.6 1 L1 9.6" stroke="#b4b8d6" stroke-width="2.3" stroke-linecap="butt"/></svg>
<div style="left:214px;top:219px;width:161px;height:160px;background:#e8ebf4;border:1px solid #b9bdd8;box-sizing:border-box;"></div>
<div style="left:215px;top:220px;width:159px;height:1px;background:#fff;"></div>
<svg style="left:216px;top:221px;shape-rendering:crispEdges;" width="153" height="153" viewBox="0 0 153 153"><rect x="0.00" y="0.00" width="3.88" height="3.88" fill="#242424"/><rect x="3.83" y="0.00" width="3.88" height="3.88" fill="#2f2f2f"/><rect x="7.65" y="0.00" width="3.88" height="3.88" fill="#242424"/><rect x="11.48" y="0.00" width="3.88" height="3.88" fill="#232323"/><rect x="15.30" y="0.00" width="3.88" height="3.88" fill="#1a1a1a"/><rect x="19.12" y="0.00" width="3.88" height="3.88" fill="#404040"/><rect x="22.95" y="0.00" width="3.88" height="3.88" fill="#343434"/><rect x="26.78" y="0.00" width="3.88" height="3.88" fill="#2a2a2a"/><rect x="30.60" y="0.00" width="3.88" height="3.88" fill="#333333"/><rect x="34.43" y="0.00" width="3.88" height="3.88" fill="#282828"/><rect x="38.25" y="0.00" width="3.88" height="3.88" fill="#2a2a2a"/><rect x="42.08" y="0.00" width="3.88" height="3.88" fill="#272727"/><rect x="45.90" y="0.00" width="3.88" height="3.88" fill="#0d0d0d"/><rect x="49.73" y="0.00" width="3.88" height="3.88" fill="#303030"/><rect x="53.55" y="0.00" width="3.88" height="3.88" fill="#2c2c2c"/><rect x="57.38" y="0.00" width="3.88" height="3.88" fill="#2b2b2b"/><rect x="61.20" y="0.00" width="3.88" height="3.88" fill="#0d0d0d"/><rect x="65.03" y="0.00" width="3.88" height="3.88" fill="#0c0c0c"/><rect x="68.85" y="0.00" width="3.88" height="3.88" fill="#e3e3e3"/><rect x="72.67" y="0.00" width="3.88" height="3.88" fill="#f0f0f0"/><rect x="76.50" y="0.00" width="3.88" height="3.88" fill="#464646"/><rect x="80.33" y="0.00" width="3.88" height="3.88" fill="#7f7f7f"/><rect x="84.15" y="0.00" width="3.88" height="3.88" fill="#464646"/><rect x="87.98" y="0.00" width="3.88" height="3.88" fill="#959595"/><rect x="91.80" y="0.00" width="3.88" height="3.88" fill="#acacac"/><rect x="95.62" y="0.00" width="3.88" height="3.88" fill="#4e4e4e"/><rect x="99.45" y="0.00" width="3.88" height="3.88" fill="#3c3c3c"/><rect x="103.28" y="0.00" width="3.88" height="3.88" fill="#7b7b7b"/><rect x="107.10" y="0.00" width="3.88" height="3.88" fill="#666666"/><rect x="110.93" y="0.00" width="3.88" height="3.88" fill="#575757"/><rect x="114.75" y="0.00" width="3.88" height="3.88" fill="#393939"/><rect x="118.58" y="0.00" width="3.88" height="3.88" fill="#373737"/><rect x="122.40" y="0.00" width="3.88" height="3.88" fill="#3e3e3e"/><rect x="126.23" y="0.00" width="3.88" height="3.88" fill="#b3b3b3"/><rect x="130.05" y="0.00" width="3.88" height="3.88" fill="#c6c6c6"/><rect x="133.88" y="0.00" width="3.88" height="3.88" fill="#313131"/><rect x="137.70" y="0.00" width="3.88" height="3.88" fill="#272727"/><rect x="141.53" y="0.00" width="3.88" height="3.88" fill="#1f1f1f"/><rect x="145.35" y="0.00" width="3.88" height="3.88" fill="#484848"/><rect x="149.18" y="0.00" width="3.88" height="3.88" fill="#676767"/><rect x="0.00" y="3.83" width="3.88" height="3.88" fill="#1c1c1c"/><rect x="3.83" y="3.83" width="3.88" height="3.88" fill="#2b2b2b"/><rect x="7.65" y="3.83" width="3.88" height="3.88" fill="#2e2e2e"/><rect x="11.48" y="3.83" width="3.88" height="3.88" fill="#121212"/><rect x="15.30" y="3.83" width="3.88" height="3.88" fill="#282828"/><rect x="19.12" y="3.83" width="3.88" height="3.88" fill="#595959"/><rect x="22.95" y="3.83" width="3.88" height="3.88" fill="#080808"/><rect x="26.78" y="3.83" width="3.88" height="3.88" fill="#202020"/><rect x="30.60" y="3.83" width="3.88" height="3.88" fill="#232323"/><rect x="34.43" y="3.83" width="3.88" height="3.88" fill="#191919"/><rect x="38.25" y="3.83" width="3.88" height="3.88" fill="#2b2b2b"/><rect x="42.08" y="3.83" width="3.88" height="3.88" fill="#242424"/><rect x="45.90" y="3.83" width="3.88" height="3.88" fill="#101010"/><rect x="49.73" y="3.83" width="3.88" height="3.88" fill="#303030"/><rect x="53.55" y="3.83" width="3.88" height="3.88" fill="#2e2e2e"/><rect x="57.38" y="3.83" width="3.88" height="3.88" fill="#323232"/><rect x="61.20" y="3.83" width="3.88" height="3.88" fill="#393939"/><rect x="65.03" y="3.83" width="3.88" height="3.88" fill="#2a2a2a"/><rect x="68.85" y="3.83" width="3.88" height="3.88" fill="#ffffff"/><rect x="72.67" y="3.83" width="3.88" height="3.88" fill="#d6d6d6"/><rect x="76.50" y="3.83" width="3.88" height="3.88" fill="#4c4c4c"/><rect x="80.33" y="3.83" width="3.88" height="3.88" fill="#737373"/><rect x="84.15" y="3.83" width="3.88" height="3.88" fill="#363636"/><rect x="87.98" y="3.83" width="3.88" height="3.88" fill="#868686"/><rect x="91.80" y="3.83" width="3.88" height="3.88" fill="#8d8d8d"/><rect x="95.62" y="3.83" width="3.88" height="3.88" fill="#3f3f3f"/><rect x="99.45" y="3.83" width="3.88" height="3.88" fill="#5d5d5d"/><rect x="103.28" y="3.83" width="3.88" height="3.88" fill="#363636"/><rect x="107.10" y="3.83" width="3.88" height="3.88" fill="#414141"/><rect x="110.93" y="3.83" width="3.88" height="3.88" fill="#474747"/><rect x="114.75" y="3.83" width="3.88" height="3.88" fill="#5b5b5b"/><rect x="118.58" y="3.83" width="3.88" height="3.88" fill="#4d4d4d"/><rect x="122.40" y="3.83" width="3.88" height="3.88" fill="#242424"/><rect x="126.23" y="3.83" width="3.88" height="3.88" fill="#757575"/><rect x="130.05" y="3.83" width="3.88" height="3.88" fill="#bfbfbf"/><rect x="133.88" y="3.83" width="3.88" height="3.88" fill="#232323"/><rect x="137.70" y="3.83" width="3.88" height="3.88" fill="#1d1d1d"/><rect x="141.53" y="3.83" width="3.88" height="3.88" fill="#3c3c3c"/><rect x="145.35" y="3.83" width="3.88" height="3.88" fill="#656565"/><rect x="149.18" y="3.83" width="3.88" height="3.88" fill="#545454"/><rect x="0.00" y="7.65" width="3.88" height="3.88" fill="#2b2b2b"/><rect x="3.83" y="7.65" width="3.88" height="3.88" fill="#2e2e2e"/><rect x="7.65" y="7.65" width="3.88" height="3.88" fill="#3e3e3e"/><rect x="11.48" y="7.65" width="3.88" height="3.88" fill="#303030"/><rect x="15.30" y="7.65" width="3.88" height="3.88" fill="#2f2f2f"/><rect x="19.12" y="7.65" width="3.88" height="3.88" fill="#4d4d4d"/><rect x="22.95" y="7.65" width="3.88" height="3.88" fill="#0f0f0f"/><rect x="26.78" y="7.65" width="3.88" height="3.88" fill="#363636"/><rect x="30.60" y="7.65" width="3.88" height="3.88" fill="#323232"/><rect x="34.43" y="7.65" width="3.88" height="3.88" fill="#2c2c2c"/><rect x="38.25" y="7.65" width="3.88" height="3.88" fill="#090909"/><rect x="42.08" y="7.65" width="3.88" height="3.88" fill="#1c1c1c"/><rect x="45.90" y="7.65" width="3.88" height="3.88" fill="#303030"/><rect x="49.73" y="7.65" width="3.88" height="3.88" fill="#0b0b0b"/><rect x="53.55" y="7.65" width="3.88" height="3.88" fill="#222222"/><rect x="57.38" y="7.65" width="3.88" height="3.88" fill="#333333"/><rect x="61.20" y="7.65" width="3.88" height="3.88" fill="#121212"/><rect x="65.03" y="7.65" width="3.88" height="3.88" fill="#3b3b3b"/><rect x="68.85" y="7.65" width="3.88" height="3.88" fill="#ffffff"/><rect x="72.67" y="7.65" width="3.88" height="3.88" fill="#fafafa"/><rect x="76.50" y="7.65" width="3.88" height="3.88" fill="#474747"/><rect x="80.33" y="7.65" width="3.88" height="3.88" fill="#8d8d8d"/><rect x="84.15" y="7.65" width="3.88" height="3.88" fill="#3f3f3f"/><rect x="87.98" y="7.65" width="3.88" height="3.88" fill="#c0c0c0"/><rect x="91.80" y="7.65" width="3.88" height="3.88" fill="#949494"/><rect x="95.62" y="7.65" width="3.88" height="3.88" fill="#414141"/><rect x="99.45" y="7.65" width="3.88" height="3.88" fill="#595959"/><rect x="103.28" y="7.65" width="3.88" height="3.88" fill="#5c5c5c"/><rect x="107.10" y="7.65" width="3.88" height="3.88" fill="#4b4b4b"/><rect x="110.93" y="7.65" width="3.88" height="3.88" fill="#535353"/><rect x="114.75" y="7.65" width="3.88" height="3.88" fill="#5c5c5c"/><rect x="118.58" y="7.65" width="3.88" height="3.88" fill="#3c3c3c"/><rect x="122.40" y="7.65" width="3.88" height="3.88" fill="#2d2d2d"/><rect x="126.23" y="7.65" width="3.88" height="3.88" fill="#b2b2b2"/><rect x="130.05" y="7.65" width="3.88" height="3.88" fill="#b2b2b2"/><rect x="133.88" y="7.65" width="3.88" height="3.88" fill="#292929"/><rect x="137.70" y="7.65" width="3.88" height="3.88" fill="#424242"/><rect x="141.53" y="7.65" width="3.88" height="3.88" fill="#1e1e1e"/><rect x="145.35" y="7.65" width="3.88" height="3.88" fill="#686868"/><rect x="149.18" y="7.65" width="3.88" height="3.88" fill="#3b3b3b"/><rect x="0.00" y="11.48" width="3.88" height="3.88" fill="#1c1c1c"/><rect x="3.83" y="11.48" width="3.88" height="3.88" fill="#303030"/><rect x="7.65" y="11.48" width="3.88" height="3.88" fill="#383838"/><rect x="11.48" y="11.48" width="3.88" height="3.88" fill="#343434"/><rect x="15.30" y="11.48" width="3.88" height="3.88" fill="#2c2c2c"/><rect x="19.12" y="11.48" width="3.88" height="3.88" fill="#464646"/><rect x="22.95" y="11.48" width="3.88" height="3.88" fill="#272727"/><rect x="26.78" y="11.48" width="3.88" height="3.88" fill="#2d2d2d"/><rect x="30.60" y="11.48" width="3.88" height="3.88" fill="#222222"/><rect x="34.43" y="11.48" width="3.88" height="3.88" fill="#282828"/><rect x="38.25" y="11.48" width="3.88" height="3.88" fill="#2c2c2c"/><rect x="42.08" y="11.48" width="3.88" height="3.88" fill="#252525"/><rect x="45.90" y="11.48" width="3.88" height="3.88" fill="#2f2f2f"/><rect x="49.73" y="11.48" width="3.88" height="3.88" fill="#2c2c2c"/><rect x="53.55" y="11.48" width="3.88" height="3.88" fill="#414141"/><rect x="57.38" y="11.48" width="3.88" height="3.88" fill="#292929"/><rect x="61.20" y="11.48" width="3.88" height="3.88" fill="#1f1f1f"/><rect x="65.03" y="11.48" width="3.88" height="3.88" fill="#1f1f1f"/><rect x="68.85" y="11.48" width="3.88" height="3.88" fill="#fefefe"/><rect x="72.67" y="11.48" width="3.88" height="3.88" fill="#ffffff"/><rect x="76.50" y="11.48" width="3.88" height="3.88" fill="#3c3c3c"/><rect x="80.33" y="11.48" width="3.88" height="3.88" fill="#888888"/><rect x="84.15" y="11.48" width="3.88" height="3.88" fill="#5b5b5b"/><rect x="87.98" y="11.48" width="3.88" height="3.88" fill="#666666"/><rect x="91.80" y="11.48" width="3.88" height="3.88" fill="#898989"/><rect x="95.62" y="11.48" width="3.88" height="3.88" fill="#4c4c4c"/><rect x="99.45" y="11.48" width="3.88" height="3.88" fill="#4e4e4e"/><rect x="103.28" y="11.48" width="3.88" height="3.88" fill="#606060"/><rect x="107.10" y="11.48" width="3.88" height="3.88" fill="#545454"/><rect x="110.93" y="11.48" width="3.88" height="3.88" fill="#4e4e4e"/><rect x="114.75" y="11.48" width="3.88" height="3.88" fill="#484848"/><rect x="118.58" y="11.48" width="3.88" height="3.88" fill="#3b3b3b"/><rect x="122.40" y="11.48" width="3.88" height="3.88" fill="#6b6b6b"/><rect x="126.23" y="11.48" width="3.88" height="3.88" fill="#bfbfbf"/><rect x="130.05" y="11.48" width="3.88" height="3.88" fill="#a7a7a7"/><rect x="133.88" y="11.48" width="3.88" height="3.88" fill="#2c2c2c"/><rect x="137.70" y="11.48" width="3.88" height="3.88" fill="#2a2a2a"/><rect x="141.53" y="11.48" width="3.88" height="3.88" fill="#2d2d2d"/><rect x="145.35" y="11.48" width="3.88" height="3.88" fill="#222222"/><rect x="149.18" y="11.48" width="3.88" height="3.88" fill="#494949"/><rect x="0.00" y="15.30" width="3.88" height="3.88" fill="#363636"/><rect x="3.83" y="15.30" width="3.88" height="3.88" fill="#171717"/><rect x="7.65" y="15.30" width="3.88" height="3.88" fill="#272727"/><rect x="11.48" y="15.30" width="3.88" height="3.88" fill="#353535"/><rect x="15.30" y="15.30" width="3.88" height="3.88" fill="#343434"/><rect x="19.12" y="15.30" width="3.88" height="3.88" fill="#5c5c5c"/><rect x="22.95" y="15.30" width="3.88" height="3.88" fill="#0d0d0d"/><rect x="26.78" y="15.30" width="3.88" height="3.88" fill="#202020"/><rect x="30.60" y="15.30" width="3.88" height="3.88" fill="#202020"/><rect x="34.43" y="15.30" width="3.88" height="3.88" fill="#2d2d2d"/><rect x="38.25" y="15.30" width="3.88" height="3.88" fill="#343434"/><rect x="42.08" y="15.30" width="3.88" height="3.88" fill="#000000"/><rect x="45.90" y="15.30" width="3.88" height="3.88" fill="#343434"/><rect x="49.73" y="15.30" width="3.88" height="3.88" fill="#101010"/><rect x="53.55" y="15.30" width="3.88" height="3.88" fill="#2e2e2e"/><rect x="57.38" y="15.30" width="3.88" height="3.88" fill="#101010"/><rect x="61.20" y="15.30" width="3.88" height="3.88" fill="#272727"/><rect x="65.03" y="15.30" width="3.88" height="3.88" fill="#353535"/><rect x="68.85" y="15.30" width="3.88" height="3.88" fill="#fafafa"/><rect x="72.67" y="15.30" width="3.88" height="3.88" fill="#ffffff"/><rect x="76.50" y="15.30" width="3.88" height="3.88" fill="#4e4e4e"/><rect x="80.33" y="15.30" width="3.88" height="3.88" fill="#838383"/><rect x="84.15" y="15.30" width="3.88" height="3.88" fill="#3c3c3c"/><rect x="87.98" y="15.30" width="3.88" height="3.88" fill="#cacaca"/><rect x="91.80" y="15.30" width="3.88" height="3.88" fill="#bebebe"/><rect x="95.62" y="15.30" width="3.88" height="3.88" fill="#434343"/><rect x="99.45" y="15.30" width="3.88" height="3.88" fill="#767676"/><rect x="103.28" y="15.30" width="3.88" height="3.88" fill="#464646"/><rect x="107.10" y="15.30" width="3.88" height="3.88" fill="#6c6c6c"/><rect x="110.93" y="15.30" width="3.88" height="3.88" fill="#3f3f3f"/><rect x="114.75" y="15.30" width="3.88" height="3.88" fill="#464646"/><rect x="118.58" y="15.30" width="3.88" height="3.88" fill="#4f4f4f"/><rect x="122.40" y="15.30" width="3.88" height="3.88" fill="#474747"/><rect x="126.23" y="15.30" width="3.88" height="3.88" fill="#c6c6c6"/><rect x="130.05" y="15.30" width="3.88" height="3.88" fill="#8e8e8e"/><rect x="133.88" y="15.30" width="3.88" height="3.88" fill="#171717"/><rect x="137.70" y="15.30" width="3.88" height="3.88" fill="#373737"/><rect x="141.53" y="15.30" width="3.88" height="3.88" fill="#1f1f1f"/><rect x="145.35" y="15.30" width="3.88" height="3.88" fill="#3f3f3f"/><rect x="149.18" y="15.30" width="3.88" height="3.88" fill="#383838"/><rect x="0.00" y="19.12" width="3.88" height="3.88" fill="#393939"/><rect x="3.83" y="19.12" width="3.88" height="3.88" fill="#323232"/><rect x="7.65" y="19.12" width="3.88" height="3.88" fill="#3c3c3c"/><rect x="11.48" y="19.12" width="3.88" height="3.88" fill="#1a1a1a"/><rect x="15.30" y="19.12" width="3.88" height="3.88" fill="#282828"/><rect x="19.12" y="19.12" width="3.88" height="3.88" fill="#313131"/><rect x="22.95" y="19.12" width="3.88" height="3.88" fill="#2f2f2f"/><rect x="26.78" y="19.12" width="3.88" height="3.88" fill="#3b3b3b"/><rect x="30.60" y="19.12" width="3.88" height="3.88" fill="#181818"/><rect x="34.43" y="19.12" width="3.88" height="3.88" fill="#3a3a3a"/><rect x="38.25" y="19.12" width="3.88" height="3.88" fill="#323232"/><rect x="42.08" y="19.12" width="3.88" height="3.88" fill="#222222"/><rect x="45.90" y="19.12" width="3.88" height="3.88" fill="#090909"/><rect x="49.73" y="19.12" width="3.88" height="3.88" fill="#383838"/><rect x="53.55" y="19.12" width="3.88" height="3.88" fill="#232323"/><rect x="57.38" y="19.12" width="3.88" height="3.88" fill="#1c1c1c"/><rect x="61.20" y="19.12" width="3.88" height="3.88" fill="#2a2a2a"/><rect x="65.03" y="19.12" width="3.88" height="3.88" fill="#2a2a2a"/><rect x="68.85" y="19.12" width="3.88" height="3.88" fill="#ffffff"/><rect x="72.67" y="19.12" width="3.88" height="3.88" fill="#dedede"/><rect x="76.50" y="19.12" width="3.88" height="3.88" fill="#545454"/><rect x="80.33" y="19.12" width="3.88" height="3.88" fill="#9f9f9f"/><rect x="84.15" y="19.12" width="3.88" height="3.88" fill="#555555"/><rect x="87.98" y="19.12" width="3.88" height="3.88" fill="#a0a0a0"/><rect x="91.80" y="19.12" width="3.88" height="3.88" fill="#929292"/><rect x="95.62" y="19.12" width="3.88" height="3.88" fill="#595959"/><rect x="99.45" y="19.12" width="3.88" height="3.88" fill="#494949"/><rect x="103.28" y="19.12" width="3.88" height="3.88" fill="#5e5e5e"/><rect x="107.10" y="19.12" width="3.88" height="3.88" fill="#767676"/><rect x="110.93" y="19.12" width="3.88" height="3.88" fill="#3f3f3f"/><rect x="114.75" y="19.12" width="3.88" height="3.88" fill="#1e1e1e"/><rect x="118.58" y="19.12" width="3.88" height="3.88" fill="#3d3d3d"/><rect x="122.40" y="19.12" width="3.88" height="3.88" fill="#252525"/><rect x="126.23" y="19.12" width="3.88" height="3.88" fill="#cacaca"/><rect x="130.05" y="19.12" width="3.88" height="3.88" fill="#bebebe"/><rect x="133.88" y="19.12" width="3.88" height="3.88" fill="#252525"/><rect x="137.70" y="19.12" width="3.88" height="3.88" fill="#2d2d2d"/><rect x="141.53" y="19.12" width="3.88" height="3.88" fill="#3a3a3a"/><rect x="145.35" y="19.12" width="3.88" height="3.88" fill="#535353"/><rect x="149.18" y="19.12" width="3.88" height="3.88" fill="#696969"/><rect x="0.00" y="22.95" width="3.88" height="3.88" fill="#272727"/><rect x="3.83" y="22.95" width="3.88" height="3.88" fill="#363636"/><rect x="7.65" y="22.95" width="3.88" height="3.88" fill="#3d3d3d"/><rect x="11.48" y="22.95" width="3.88" height="3.88" fill="#3e3e3e"/><rect x="15.30" y="22.95" width="3.88" height="3.88" fill="#1e1e1e"/><rect x="19.12" y="22.95" width="3.88" height="3.88" fill="#525252"/><rect x="22.95" y="22.95" width="3.88" height="3.88" fill="#0a0a0a"/><rect x="26.78" y="22.95" width="3.88" height="3.88" fill="#151515"/><rect x="30.60" y="22.95" width="3.88" height="3.88" fill="#090909"/><rect x="34.43" y="22.95" width="3.88" height="3.88" fill="#333333"/><rect x="38.25" y="22.95" width="3.88" height="3.88" fill="#131313"/><rect x="42.08" y="22.95" width="3.88" height="3.88" fill="#242424"/><rect x="45.90" y="22.95" width="3.88" height="3.88" fill="#222222"/><rect x="49.73" y="22.95" width="3.88" height="3.88" fill="#242424"/><rect x="53.55" y="22.95" width="3.88" height="3.88" fill="#1c1c1c"/><rect x="57.38" y="22.95" width="3.88" height="3.88" fill="#282828"/><rect x="61.20" y="22.95" width="3.88" height="3.88" fill="#3e3e3e"/><rect x="65.03" y="22.95" width="3.88" height="3.88" fill="#252525"/><rect x="68.85" y="22.95" width="3.88" height="3.88" fill="#ffffff"/><rect x="72.67" y="22.95" width="3.88" height="3.88" fill="#ffffff"/><rect x="76.50" y="22.95" width="3.88" height="3.88" fill="#3e3e3e"/><rect x="80.33" y="22.95" width="3.88" height="3.88" fill="#656565"/><rect x="84.15" y="22.95" width="3.88" height="3.88" fill="#353535"/><rect x="87.98" y="22.95" width="3.88" height="3.88" fill="#bebebe"/><rect x="91.80" y="22.95" width="3.88" height="3.88" fill="#7d7d7d"/><rect x="95.62" y="22.95" width="3.88" height="3.88" fill="#3d3d3d"/><rect x="99.45" y="22.95" width="3.88" height="3.88" fill="#585858"/><rect x="103.28" y="22.95" width="3.88" height="3.88" fill="#6a6a6a"/><rect x="107.10" y="22.95" width="3.88" height="3.88" fill="#5c5c5c"/><rect x="110.93" y="22.95" width="3.88" height="3.88" fill="#515151"/><rect x="114.75" y="22.95" width="3.88" height="3.88" fill="#464646"/><rect x="118.58" y="22.95" width="3.88" height="3.88" fill="#303030"/><rect x="122.40" y="22.95" width="3.88" height="3.88" fill="#2a2a2a"/><rect x="126.23" y="22.95" width="3.88" height="3.88" fill="#a5a5a5"/><rect x="130.05" y="22.95" width="3.88" height="3.88" fill="#cdcdcd"/><rect x="133.88" y="22.95" width="3.88" height="3.88" fill="#252525"/><rect x="137.70" y="22.95" width="3.88" height="3.88" fill="#202020"/><rect x="141.53" y="22.95" width="3.88" height="3.88" fill="#222222"/><rect x="145.35" y="22.95" width="3.88" height="3.88" fill="#373737"/><rect x="149.18" y="22.95" width="3.88" height="3.88" fill="#4f4f4f"/><rect x="0.00" y="26.78" width="3.88" height="3.88" fill="#171717"/><rect x="3.83" y="26.78" width="3.88" height="3.88" fill="#2d2d2d"/><rect x="7.65" y="26.78" width="3.88" height="3.88" fill="#060606"/><rect x="11.48" y="26.78" width="3.88" height="3.88" fill="#2c2c2c"/><rect x="15.30" y="26.78" width="3.88" height="3.88" fill="#1e1e1e"/><rect x="19.12" y="26.78" width="3.88" height="3.88" fill="#242424"/><rect x="22.95" y="26.78" width="3.88" height="3.88" fill="#2f2f2f"/><rect x="26.78" y="26.78" width="3.88" height="3.88" fill="#212121"/><rect x="30.60" y="26.78" width="3.88" height="3.88" fill="#050505"/><rect x="34.43" y="26.78" width="3.88" height="3.88" fill="#181818"/><rect x="38.25" y="26.78" width="3.88" height="3.88" fill="#292929"/><rect x="42.08" y="26.78" width="3.88" height="3.88" fill="#1e1e1e"/><rect x="45.90" y="26.78" width="3.88" height="3.88" fill="#2f2f2f"/><rect x="49.73" y="26.78" width="3.88" height="3.88" fill="#2f2f2f"/><rect x="53.55" y="26.78" width="3.88" height="3.88" fill="#2e2e2e"/><rect x="57.38" y="26.78" width="3.88" height="3.88" fill="#292929"/><rect x="61.20" y="26.78" width="3.88" height="3.88" fill="#373737"/><rect x="65.03" y="26.78" width="3.88" height="3.88" fill="#2e2e2e"/><rect x="68.85" y="26.78" width="3.88" height="3.88" fill="#ffffff"/><rect x="72.67" y="26.78" width="3.88" height="3.88" fill="#bdbdbd"/><rect x="76.50" y="26.78" width="3.88" height="3.88" fill="#505050"/><rect x="80.33" y="26.78" width="3.88" height="3.88" fill="#9b9b9b"/><rect x="84.15" y="26.78" width="3.88" height="3.88" fill="#393939"/><rect x="87.98" y="26.78" width="3.88" height="3.88" fill="#999999"/><rect x="91.80" y="26.78" width="3.88" height="3.88" fill="#d3d3d3"/><rect x="95.62" y="26.78" width="3.88" height="3.88" fill="#2a2a2a"/><rect x="99.45" y="26.78" width="3.88" height="3.88" fill="#4f4f4f"/><rect x="103.28" y="26.78" width="3.88" height="3.88" fill="#888888"/><rect x="107.10" y="26.78" width="3.88" height="3.88" fill="#4a4a4a"/><rect x="110.93" y="26.78" width="3.88" height="3.88" fill="#4f4f4f"/><rect x="114.75" y="26.78" width="3.88" height="3.88" fill="#636363"/><rect x="118.58" y="26.78" width="3.88" height="3.88" fill="#424242"/><rect x="122.40" y="26.78" width="3.88" height="3.88" fill="#4d4d4d"/><rect x="126.23" y="26.78" width="3.88" height="3.88" fill="#cdcdcd"/><rect x="130.05" y="26.78" width="3.88" height="3.88" fill="#9e9e9e"/><rect x="133.88" y="26.78" width="3.88" height="3.88" fill="#2c2c2c"/><rect x="137.70" y="26.78" width="3.88" height="3.88" fill="#323232"/><rect x="141.53" y="26.78" width="3.88" height="3.88" fill="#3a3a3a"/><rect x="145.35" y="26.78" width="3.88" height="3.88" fill="#515151"/><rect x="149.18" y="26.78" width="3.88" height="3.88" fill="#4e4e4e"/><rect x="0.00" y="30.60" width="3.88" height="3.88" fill="#191919"/><rect x="3.83" y="30.60" width="3.88" height="3.88" fill="#222222"/><rect x="7.65" y="30.60" width="3.88" height="3.88" fill="#343434"/><rect x="11.48" y="30.60" width="3.88" height="3.88" fill="#292929"/><rect x="15.30" y="30.60" width="3.88" height="3.88" fill="#1b1b1b"/><rect x="19.12" y="30.60" width="3.88" height="3.88" fill="#363636"/><rect x="22.95" y="30.60" width="3.88" height="3.88" fill="#4a4a4a"/><rect x="26.78" y="30.60" width="3.88" height="3.88" fill="#343434"/><rect x="30.60" y="30.60" width="3.88" height="3.88" fill="#2d2d2d"/><rect x="34.43" y="30.60" width="3.88" height="3.88" fill="#000000"/><rect x="38.25" y="30.60" width="3.88" height="3.88" fill="#2d2d2d"/><rect x="42.08" y="30.60" width="3.88" height="3.88" fill="#2b2b2b"/><rect x="45.90" y="30.60" width="3.88" height="3.88" fill="#3c3c3c"/><rect x="49.73" y="30.60" width="3.88" height="3.88" fill="#2a2a2a"/><rect x="53.55" y="30.60" width="3.88" height="3.88" fill="#242424"/><rect x="57.38" y="30.60" width="3.88" height="3.88" fill="#2c2c2c"/><rect x="61.20" y="30.60" width="3.88" height="3.88" fill="#090909"/><rect x="65.03" y="30.60" width="3.88" height="3.88" fill="#333333"/><rect x="68.85" y="30.60" width="3.88" height="3.88" fill="#ffffff"/><rect x="72.67" y="30.60" width="3.88" height="3.88" fill="#e8e8e8"/><rect x="76.50" y="30.60" width="3.88" height="3.88" fill="#575757"/><rect x="80.33" y="30.60" width="3.88" height="3.88" fill="#a6a6a6"/><rect x="84.15" y="30.60" width="3.88" height="3.88" fill="#272727"/><rect x="87.98" y="30.60" width="3.88" height="3.88" fill="#949494"/><rect x="91.80" y="30.60" width="3.88" height="3.88" fill="#acacac"/><rect x="95.62" y="30.60" width="3.88" height="3.88" fill="#4b4b4b"/><rect x="99.45" y="30.60" width="3.88" height="3.88" fill="#414141"/><rect x="103.28" y="30.60" width="3.88" height="3.88" fill="#4a4a4a"/><rect x="107.10" y="30.60" width="3.88" height="3.88" fill="#828282"/><rect x="110.93" y="30.60" width="3.88" height="3.88" fill="#555555"/><rect x="114.75" y="30.60" width="3.88" height="3.88" fill="#303030"/><rect x="118.58" y="30.60" width="3.88" height="3.88" fill="#2d2d2d"/><rect x="122.40" y="30.60" width="3.88" height="3.88" fill="#5f5f5f"/><rect x="126.23" y="30.60" width="3.88" height="3.88" fill="#cfcfcf"/><rect x="130.05" y="30.60" width="3.88" height="3.88" fill="#e4e4e4"/><rect x="133.88" y="30.60" width="3.88" height="3.88" fill="#393939"/><rect x="137.70" y="30.60" width="3.88" height="3.88" fill="#212121"/><rect x="141.53" y="30.60" width="3.88" height="3.88" fill="#313131"/><rect x="145.35" y="30.60" width="3.88" height="3.88" fill="#2c2c2c"/><rect x="149.18" y="30.60" width="3.88" height="3.88" fill="#444444"/><rect x="0.00" y="34.43" width="3.88" height="3.88" fill="#272727"/><rect x="3.83" y="34.43" width="3.88" height="3.88" fill="#2f2f2f"/><rect x="7.65" y="34.43" width="3.88" height="3.88" fill="#1d1d1d"/><rect x="11.48" y="34.43" width="3.88" height="3.88" fill="#262626"/><rect x="15.30" y="34.43" width="3.88" height="3.88" fill="#2e2e2e"/><rect x="19.12" y="34.43" width="3.88" height="3.88" fill="#4a4a4a"/><rect x="22.95" y="34.43" width="3.88" height="3.88" fill="#2d2d2d"/><rect x="26.78" y="34.43" width="3.88" height="3.88" fill="#272727"/><rect x="30.60" y="34.43" width="3.88" height="3.88" fill="#202020"/><rect x="34.43" y="34.43" width="3.88" height="3.88" fill="#303030"/><rect x="38.25" y="34.43" width="3.88" height="3.88" fill="#252525"/><rect x="42.08" y="34.43" width="3.88" height="3.88" fill="#191919"/><rect x="45.90" y="34.43" width="3.88" height="3.88" fill="#1c1c1c"/><rect x="49.73" y="34.43" width="3.88" height="3.88" fill="#242424"/><rect x="53.55" y="34.43" width="3.88" height="3.88" fill="#232323"/><rect x="57.38" y="34.43" width="3.88" height="3.88" fill="#272727"/><rect x="61.20" y="34.43" width="3.88" height="3.88" fill="#242424"/><rect x="65.03" y="34.43" width="3.88" height="3.88" fill="#272727"/><rect x="68.85" y="34.43" width="3.88" height="3.88" fill="#fafafa"/><rect x="72.67" y="34.43" width="3.88" height="3.88" fill="#d7d7d7"/><rect x="76.50" y="34.43" width="3.88" height="3.88" fill="#484848"/><rect x="80.33" y="34.43" width="3.88" height="3.88" fill="#969696"/><rect x="84.15" y="34.43" width="3.88" height="3.88" fill="#444444"/><rect x="87.98" y="34.43" width="3.88" height="3.88" fill="#a0a0a0"/><rect x="91.80" y="34.43" width="3.88" height="3.88" fill="#afafaf"/><rect x="95.62" y="34.43" width="3.88" height="3.88" fill="#373737"/><rect x="99.45" y="34.43" width="3.88" height="3.88" fill="#282828"/><rect x="103.28" y="34.43" width="3.88" height="3.88" fill="#5d5d5d"/><rect x="107.10" y="34.43" width="3.88" height="3.88" fill="#4a4a4a"/><rect x="110.93" y="34.43" width="3.88" height="3.88" fill="#505050"/><rect x="114.75" y="34.43" width="3.88" height="3.88" fill="#323232"/><rect x="118.58" y="34.43" width="3.88" height="3.88" fill="#181818"/><rect x="122.40" y="34.43" width="3.88" height="3.88" fill="#323232"/><rect x="126.23" y="34.43" width="3.88" height="3.88" fill="#dedede"/><rect x="130.05" y="34.43" width="3.88" height="3.88" fill="#acacac"/><rect x="133.88" y="34.43" width="3.88" height="3.88" fill="#191919"/><rect x="137.70" y="34.43" width="3.88" height="3.88" fill="#222222"/><rect x="141.53" y="34.43" width="3.88" height="3.88" fill="#353535"/><rect x="145.35" y="34.43" width="3.88" height="3.88" fill="#5a5a5a"/><rect x="149.18" y="34.43" width="3.88" height="3.88" fill="#555555"/><rect x="0.00" y="38.25" width="3.88" height="3.88" fill="#3d3d3d"/><rect x="3.83" y="38.25" width="3.88" height="3.88" fill="#323232"/><rect x="7.65" y="38.25" width="3.88" height="3.88" fill="#272727"/><rect x="11.48" y="38.25" width="3.88" height="3.88" fill="#303030"/><rect x="15.30" y="38.25" width="3.88" height="3.88" fill="#3f3f3f"/><rect x="19.12" y="38.25" width="3.88" height="3.88" fill="#535353"/><rect x="22.95" y="38.25" width="3.88" height="3.88" fill="#333333"/><rect x="26.78" y="38.25" width="3.88" height="3.88" fill="#151515"/><rect x="30.60" y="38.25" width="3.88" height="3.88" fill="#222222"/><rect x="34.43" y="38.25" width="3.88" height="3.88" fill="#2f2f2f"/><rect x="38.25" y="38.25" width="3.88" height="3.88" fill="#202020"/><rect x="42.08" y="38.25" width="3.88" height="3.88" fill="#333333"/><rect x="45.90" y="38.25" width="3.88" height="3.88" fill="#2d2d2d"/><rect x="49.73" y="38.25" width="3.88" height="3.88" fill="#313131"/><rect x="53.55" y="38.25" width="3.88" height="3.88" fill="#222222"/><rect x="57.38" y="38.25" width="3.88" height="3.88" fill="#484848"/><rect x="61.20" y="38.25" width="3.88" height="3.88" fill="#363636"/><rect x="65.03" y="38.25" width="3.88" height="3.88" fill="#212121"/><rect x="68.85" y="38.25" width="3.88" height="3.88" fill="#ffffff"/><rect x="72.67" y="38.25" width="3.88" height="3.88" fill="#ffffff"/><rect x="76.50" y="38.25" width="3.88" height="3.88" fill="#3c3c3c"/><rect x="80.33" y="38.25" width="3.88" height="3.88" fill="#929292"/><rect x="84.15" y="38.25" width="3.88" height="3.88" fill="#4d4d4d"/><rect x="87.98" y="38.25" width="3.88" height="3.88" fill="#a5a5a5"/><rect x="91.80" y="38.25" width="3.88" height="3.88" fill="#888888"/><rect x="95.62" y="38.25" width="3.88" height="3.88" fill="#4b4b4b"/><rect x="99.45" y="38.25" width="3.88" height="3.88" fill="#4e4e4e"/><rect x="103.28" y="38.25" width="3.88" height="3.88" fill="#707070"/><rect x="107.10" y="38.25" width="3.88" height="3.88" fill="#6a6a6a"/><rect x="110.93" y="38.25" width="3.88" height="3.88" fill="#444444"/><rect x="114.75" y="38.25" width="3.88" height="3.88" fill="#525252"/><rect x="118.58" y="38.25" width="3.88" height="3.88" fill="#4c4c4c"/><rect x="122.40" y="38.25" width="3.88" height="3.88" fill="#474747"/><rect x="126.23" y="38.25" width="3.88" height="3.88" fill="#b7b7b7"/><rect x="130.05" y="38.25" width="3.88" height="3.88" fill="#afafaf"/><rect x="133.88" y="38.25" width="3.88" height="3.88" fill="#383838"/><rect x="137.70" y="38.25" width="3.88" height="3.88" fill="#1e1e1e"/><rect x="141.53" y="38.25" width="3.88" height="3.88" fill="#242424"/><rect x="145.35" y="38.25" width="3.88" height="3.88" fill="#525252"/><rect x="149.18" y="38.25" width="3.88" height="3.88" fill="#383838"/><rect x="0.00" y="42.08" width="3.88" height="3.88" fill="#212121"/><rect x="3.83" y="42.08" width="3.88" height="3.88" fill="#0b0b0b"/><rect x="7.65" y="42.08" width="3.88" height="3.88" fill="#1e1e1e"/><rect x="11.48" y="42.08" width="3.88" height="3.88" fill="#303030"/><rect x="15.30" y="42.08" width="3.88" height="3.88" fill="#303030"/><rect x="19.12" y="42.08" width="3.88" height="3.88" fill="#434343"/><rect x="22.95" y="42.08" width="3.88" height="3.88" fill="#212121"/><rect x="26.78" y="42.08" width="3.88" height="3.88" fill="#111111"/><rect x="30.60" y="42.08" width="3.88" height="3.88" fill="#3e3e3e"/><rect x="34.43" y="42.08" width="3.88" height="3.88" fill="#2c2c2c"/><rect x="38.25" y="42.08" width="3.88" height="3.88" fill="#343434"/><rect x="42.08" y="42.08" width="3.88" height="3.88" fill="#181818"/><rect x="45.90" y="42.08" width="3.88" height="3.88" fill="#222222"/><rect x="49.73" y="42.08" width="3.88" height="3.88" fill="#0b0b0b"/><rect x="53.55" y="42.08" width="3.88" height="3.88" fill="#2f2f2f"/><rect x="57.38" y="42.08" width="3.88" height="3.88" fill="#323232"/><rect x="61.20" y="42.08" width="3.88" height="3.88" fill="#0a0a0a"/><rect x="65.03" y="42.08" width="3.88" height="3.88" fill="#242424"/><rect x="68.85" y="42.08" width="3.88" height="3.88" fill="#ffffff"/><rect x="72.67" y="42.08" width="3.88" height="3.88" fill="#c7c7c7"/><rect x="76.50" y="42.08" width="3.88" height="3.88" fill="#242424"/><rect x="80.33" y="42.08" width="3.88" height="3.88" fill="#696969"/><rect x="84.15" y="42.08" width="3.88" height="3.88" fill="#333333"/><rect x="87.98" y="42.08" width="3.88" height="3.88" fill="#838383"/><rect x="91.80" y="42.08" width="3.88" height="3.88" fill="#a5a5a5"/><rect x="95.62" y="42.08" width="3.88" height="3.88" fill="#4c4c4c"/><rect x="99.45" y="42.08" width="3.88" height="3.88" fill="#525252"/><rect x="103.28" y="42.08" width="3.88" height="3.88" fill="#686868"/><rect x="107.10" y="42.08" width="3.88" height="3.88" fill="#777777"/><rect x="110.93" y="42.08" width="3.88" height="3.88" fill="#575757"/><rect x="114.75" y="42.08" width="3.88" height="3.88" fill="#2e2e2e"/><rect x="118.58" y="42.08" width="3.88" height="3.88" fill="#3b3b3b"/><rect x="122.40" y="42.08" width="3.88" height="3.88" fill="#323232"/><rect x="126.23" y="42.08" width="3.88" height="3.88" fill="#9a9a9a"/><rect x="130.05" y="42.08" width="3.88" height="3.88" fill="#b3b3b3"/><rect x="133.88" y="42.08" width="3.88" height="3.88" fill="#2e2e2e"/><rect x="137.70" y="42.08" width="3.88" height="3.88" fill="#353535"/><rect x="141.53" y="42.08" width="3.88" height="3.88" fill="#161616"/><rect x="145.35" y="42.08" width="3.88" height="3.88" fill="#3c3c3c"/><rect x="149.18" y="42.08" width="3.88" height="3.88" fill="#515151"/><rect x="0.00" y="45.90" width="3.88" height="3.88" fill="#252525"/><rect x="3.83" y="45.90" width="3.88" height="3.88" fill="#232323"/><rect x="7.65" y="45.90" width="3.88" height="3.88" fill="#272727"/><rect x="11.48" y="45.90" width="3.88" height="3.88" fill="#1d1d1d"/><rect x="15.30" y="45.90" width="3.88" height="3.88" fill="#313131"/><rect x="19.12" y="45.90" width="3.88" height="3.88" fill="#494949"/><rect x="22.95" y="45.90" width="3.88" height="3.88" fill="#232323"/><rect x="26.78" y="45.90" width="3.88" height="3.88" fill="#1b1b1b"/><rect x="30.60" y="45.90" width="3.88" height="3.88" fill="#222222"/><rect x="34.43" y="45.90" width="3.88" height="3.88" fill="#000000"/><rect x="38.25" y="45.90" width="3.88" height="3.88" fill="#171717"/><rect x="42.08" y="45.90" width="3.88" height="3.88" fill="#252525"/><rect x="45.90" y="45.90" width="3.88" height="3.88" fill="#101010"/><rect x="49.73" y="45.90" width="3.88" height="3.88" fill="#272727"/><rect x="53.55" y="45.90" width="3.88" height="3.88" fill="#272727"/><rect x="57.38" y="45.90" width="3.88" height="3.88" fill="#111111"/><rect x="61.20" y="45.90" width="3.88" height="3.88" fill="#212121"/><rect x="65.03" y="45.90" width="3.88" height="3.88" fill="#202020"/><rect x="68.85" y="45.90" width="3.88" height="3.88" fill="#ffffff"/><rect x="72.67" y="45.90" width="3.88" height="3.88" fill="#ffffff"/><rect x="76.50" y="45.90" width="3.88" height="3.88" fill="#414141"/><rect x="80.33" y="45.90" width="3.88" height="3.88" fill="#6d6d6d"/><rect x="84.15" y="45.90" width="3.88" height="3.88" fill="#3b3b3b"/><rect x="87.98" y="45.90" width="3.88" height="3.88" fill="#a3a3a3"/><rect x="91.80" y="45.90" width="3.88" height="3.88" fill="#b6b6b6"/><rect x="95.62" y="45.90" width="3.88" height="3.88" fill="#4c4c4c"/><rect x="99.45" y="45.90" width="3.88" height="3.88" fill="#3b3b3b"/><rect x="103.28" y="45.90" width="3.88" height="3.88" fill="#434343"/><rect x="107.10" y="45.90" width="3.88" height="3.88" fill="#555555"/><rect x="110.93" y="45.90" width="3.88" height="3.88" fill="#373737"/><rect x="114.75" y="45.90" width="3.88" height="3.88" fill="#313131"/><rect x="118.58" y="45.90" width="3.88" height="3.88" fill="#424242"/><rect x="122.40" y="45.90" width="3.88" height="3.88" fill="#3b3b3b"/><rect x="126.23" y="45.90" width="3.88" height="3.88" fill="#b8b8b8"/><rect x="130.05" y="45.90" width="3.88" height="3.88" fill="#c3c3c3"/><rect x="133.88" y="45.90" width="3.88" height="3.88" fill="#272727"/><rect x="137.70" y="45.90" width="3.88" height="3.88" fill="#505050"/><rect x="141.53" y="45.90" width="3.88" height="3.88" fill="#292929"/><rect x="145.35" y="45.90" width="3.88" height="3.88" fill="#656565"/><rect x="149.18" y="45.90" width="3.88" height="3.88" fill="#545454"/><rect x="0.00" y="49.73" width="3.88" height="3.88" fill="#373737"/><rect x="3.83" y="49.73" width="3.88" height="3.88" fill="#060606"/><rect x="7.65" y="49.73" width="3.88" height="3.88" fill="#1d1d1d"/><rect x="11.48" y="49.73" width="3.88" height="3.88" fill="#2b2b2b"/><rect x="15.30" y="49.73" width="3.88" height="3.88" fill="#303030"/><rect x="19.12" y="49.73" width="3.88" height="3.88" fill="#6a6a6a"/><rect x="22.95" y="49.73" width="3.88" height="3.88" fill="#292929"/><rect x="26.78" y="49.73" width="3.88" height="3.88" fill="#363636"/><rect x="30.60" y="49.73" width="3.88" height="3.88" fill="#2f2f2f"/><rect x="34.43" y="49.73" width="3.88" height="3.88" fill="#323232"/><rect x="38.25" y="49.73" width="3.88" height="3.88" fill="#2c2c2c"/><rect x="42.08" y="49.73" width="3.88" height="3.88" fill="#222222"/><rect x="45.90" y="49.73" width="3.88" height="3.88" fill="#2c2c2c"/><rect x="49.73" y="49.73" width="3.88" height="3.88" fill="#151515"/><rect x="53.55" y="49.73" width="3.88" height="3.88" fill="#353535"/><rect x="57.38" y="49.73" width="3.88" height="3.88" fill="#161616"/><rect x="61.20" y="49.73" width="3.88" height="3.88" fill="#282828"/><rect x="65.03" y="49.73" width="3.88" height="3.88" fill="#424242"/><rect x="68.85" y="49.73" width="3.88" height="3.88" fill="#f7f7f7"/><rect x="72.67" y="49.73" width="3.88" height="3.88" fill="#ffffff"/><rect x="76.50" y="49.73" width="3.88" height="3.88" fill="#545454"/><rect x="80.33" y="49.73" width="3.88" height="3.88" fill="#808080"/><rect x="84.15" y="49.73" width="3.88" height="3.88" fill="#313131"/><rect x="87.98" y="49.73" width="3.88" height="3.88" fill="#ababab"/><rect x="91.80" y="49.73" width="3.88" height="3.88" fill="#b3b3b3"/><rect x="95.62" y="49.73" width="3.88" height="3.88" fill="#535353"/><rect x="99.45" y="49.73" width="3.88" height="3.88" fill="#3b3b3b"/><rect x="103.28" y="49.73" width="3.88" height="3.88" fill="#7c7c7c"/><rect x="107.10" y="49.73" width="3.88" height="3.88" fill="#7a7a7a"/><rect x="110.93" y="49.73" width="3.88" height="3.88" fill="#444444"/><rect x="114.75" y="49.73" width="3.88" height="3.88" fill="#484848"/><rect x="118.58" y="49.73" width="3.88" height="3.88" fill="#3c3c3c"/><rect x="122.40" y="49.73" width="3.88" height="3.88" fill="#5b5b5b"/><rect x="126.23" y="49.73" width="3.88" height="3.88" fill="#a3a3a3"/><rect x="130.05" y="49.73" width="3.88" height="3.88" fill="#c7c7c7"/><rect x="133.88" y="49.73" width="3.88" height="3.88" fill="#262626"/><rect x="137.70" y="49.73" width="3.88" height="3.88" fill="#232323"/><rect x="141.53" y="49.73" width="3.88" height="3.88" fill="#383838"/><rect x="145.35" y="49.73" width="3.88" height="3.88" fill="#696969"/><rect x="149.18" y="49.73" width="3.88" height="3.88" fill="#515151"/><rect x="0.00" y="53.55" width="3.88" height="3.88" fill="#1e1e1e"/><rect x="3.83" y="53.55" width="3.88" height="3.88" fill="#333333"/><rect x="7.65" y="53.55" width="3.88" height="3.88" fill="#272727"/><rect x="11.48" y="53.55" width="3.88" height="3.88" fill="#2c2c2c"/><rect x="15.30" y="53.55" width="3.88" height="3.88" fill="#3d3d3d"/><rect x="19.12" y="53.55" width="3.88" height="3.88" fill="#565656"/><rect x="22.95" y="53.55" width="3.88" height="3.88" fill="#1d1d1d"/><rect x="26.78" y="53.55" width="3.88" height="3.88" fill="#444444"/><rect x="30.60" y="53.55" width="3.88" height="3.88" fill="#252525"/><rect x="34.43" y="53.55" width="3.88" height="3.88" fill="#2f2f2f"/><rect x="38.25" y="53.55" width="3.88" height="3.88" fill="#1b1b1b"/><rect x="42.08" y="53.55" width="3.88" height="3.88" fill="#242424"/><rect x="45.90" y="53.55" width="3.88" height="3.88" fill="#0c0c0c"/><rect x="49.73" y="53.55" width="3.88" height="3.88" fill="#3d3d3d"/><rect x="53.55" y="53.55" width="3.88" height="3.88" fill="#383838"/><rect x="57.38" y="53.55" width="3.88" height="3.88" fill="#141414"/><rect x="61.20" y="53.55" width="3.88" height="3.88" fill="#0f0f0f"/><rect x="65.03" y="53.55" width="3.88" height="3.88" fill="#0e0e0e"/><rect x="68.85" y="53.55" width="3.88" height="3.88" fill="#ffffff"/><rect x="72.67" y="53.55" width="3.88" height="3.88" fill="#f0f0f0"/><rect x="76.50" y="53.55" width="3.88" height="3.88" fill="#414141"/><rect x="80.33" y="53.55" width="3.88" height="3.88" fill="#797979"/><rect x="84.15" y="53.55" width="3.88" height="3.88" fill="#3c3c3c"/><rect x="87.98" y="53.55" width="3.88" height="3.88" fill="#8a8a8a"/><rect x="91.80" y="53.55" width="3.88" height="3.88" fill="#a5a5a5"/><rect x="95.62" y="53.55" width="3.88" height="3.88" fill="#2f2f2f"/><rect x="99.45" y="53.55" width="3.88" height="3.88" fill="#464646"/><rect x="103.28" y="53.55" width="3.88" height="3.88" fill="#616161"/><rect x="107.10" y="53.55" width="3.88" height="3.88" fill="#646464"/><rect x="110.93" y="53.55" width="3.88" height="3.88" fill="#404040"/><rect x="114.75" y="53.55" width="3.88" height="3.88" fill="#353535"/><rect x="118.58" y="53.55" width="3.88" height="3.88" fill="#464646"/><rect x="122.40" y="53.55" width="3.88" height="3.88" fill="#3c3c3c"/><rect x="126.23" y="53.55" width="3.88" height="3.88" fill="#dedede"/><rect x="130.05" y="53.55" width="3.88" height="3.88" fill="#c9c9c9"/><rect x="133.88" y="53.55" width="3.88" height="3.88" fill="#2c2c2c"/><rect x="137.70" y="53.55" width="3.88" height="3.88" fill="#272727"/><rect x="141.53" y="53.55" width="3.88" height="3.88" fill="#232323"/><rect x="145.35" y="53.55" width="3.88" height="3.88" fill="#414141"/><rect x="149.18" y="53.55" width="3.88" height="3.88" fill="#4b4b4b"/><rect x="0.00" y="57.38" width="3.88" height="3.88" fill="#2c2c2c"/><rect x="3.83" y="57.38" width="3.88" height="3.88" fill="#2f2f2f"/><rect x="7.65" y="57.38" width="3.88" height="3.88" fill="#303030"/><rect x="11.48" y="57.38" width="3.88" height="3.88" fill="#454545"/><rect x="15.30" y="57.38" width="3.88" height="3.88" fill="#1d1d1d"/><rect x="19.12" y="57.38" width="3.88" height="3.88" fill="#444444"/><rect x="22.95" y="57.38" width="3.88" height="3.88" fill="#4c4c4c"/><rect x="26.78" y="57.38" width="3.88" height="3.88" fill="#0a0a0a"/><rect x="30.60" y="57.38" width="3.88" height="3.88" fill="#1d1d1d"/><rect x="34.43" y="57.38" width="3.88" height="3.88" fill="#272727"/><rect x="38.25" y="57.38" width="3.88" height="3.88" fill="#272727"/><rect x="42.08" y="57.38" width="3.88" height="3.88" fill="#2a2a2a"/><rect x="45.90" y="57.38" width="3.88" height="3.88" fill="#212121"/><rect x="49.73" y="57.38" width="3.88" height="3.88" fill="#2a2a2a"/><rect x="53.55" y="57.38" width="3.88" height="3.88" fill="#252525"/><rect x="57.38" y="57.38" width="3.88" height="3.88" fill="#2f2f2f"/><rect x="61.20" y="57.38" width="3.88" height="3.88" fill="#0a0a0a"/><rect x="65.03" y="57.38" width="3.88" height="3.88" fill="#181818"/><rect x="68.85" y="57.38" width="3.88" height="3.88" fill="#fefefe"/><rect x="72.67" y="57.38" width="3.88" height="3.88" fill="#dedede"/><rect x="76.50" y="57.38" width="3.88" height="3.88" fill="#303030"/><rect x="80.33" y="57.38" width="3.88" height="3.88" fill="#8d8d8d"/><rect x="84.15" y="57.38" width="3.88" height="3.88" fill="#333333"/><rect x="87.98" y="57.38" width="3.88" height="3.88" fill="#b4b4b4"/><rect x="91.80" y="57.38" width="3.88" height="3.88" fill="#b7b7b7"/><rect x="95.62" y="57.38" width="3.88" height="3.88" fill="#4d4d4d"/><rect x="99.45" y="57.38" width="3.88" height="3.88" fill="#505050"/><rect x="103.28" y="57.38" width="3.88" height="3.88" fill="#5a5a5a"/><rect x="107.10" y="57.38" width="3.88" height="3.88" fill="#424242"/><rect x="110.93" y="57.38" width="3.88" height="3.88" fill="#434343"/><rect x="114.75" y="57.38" width="3.88" height="3.88" fill="#4b4b4b"/><rect x="118.58" y="57.38" width="3.88" height="3.88" fill="#3b3b3b"/><rect x="122.40" y="57.38" width="3.88" height="3.88" fill="#424242"/><rect x="126.23" y="57.38" width="3.88" height="3.88" fill="#c9c9c9"/><rect x="130.05" y="57.38" width="3.88" height="3.88" fill="#9f9f9f"/><rect x="133.88" y="57.38" width="3.88" height="3.88" fill="#373737"/><rect x="137.70" y="57.38" width="3.88" height="3.88" fill="#494949"/><rect x="141.53" y="57.38" width="3.88" height="3.88" fill="#252525"/><rect x="145.35" y="57.38" width="3.88" height="3.88" fill="#545454"/><rect x="149.18" y="57.38" width="3.88" height="3.88" fill="#4f4f4f"/><rect x="0.00" y="61.20" width="3.88" height="3.88" fill="#3d3d3d"/><rect x="3.83" y="61.20" width="3.88" height="3.88" fill="#2c2c2c"/><rect x="7.65" y="61.20" width="3.88" height="3.88" fill="#343434"/><rect x="11.48" y="61.20" width="3.88" height="3.88" fill="#1e1e1e"/><rect x="15.30" y="61.20" width="3.88" height="3.88" fill="#272727"/><rect x="19.12" y="61.20" width="3.88" height="3.88" fill="#434343"/><rect x="22.95" y="61.20" width="3.88" height="3.88" fill="#0c0c0c"/><rect x="26.78" y="61.20" width="3.88" height="3.88" fill="#393939"/><rect x="30.60" y="61.20" width="3.88" height="3.88" fill="#313131"/><rect x="34.43" y="61.20" width="3.88" height="3.88" fill="#0c0c0c"/><rect x="38.25" y="61.20" width="3.88" height="3.88" fill="#2f2f2f"/><rect x="42.08" y="61.20" width="3.88" height="3.88" fill="#232323"/><rect x="45.90" y="61.20" width="3.88" height="3.88" fill="#2b2b2b"/><rect x="49.73" y="61.20" width="3.88" height="3.88" fill="#2a2a2a"/><rect x="53.55" y="61.20" width="3.88" height="3.88" fill="#101010"/><rect x="57.38" y="61.20" width="3.88" height="3.88" fill="#222222"/><rect x="61.20" y="61.20" width="3.88" height="3.88" fill="#393939"/><rect x="65.03" y="61.20" width="3.88" height="3.88" fill="#1c1c1c"/><rect x="68.85" y="61.20" width="3.88" height="3.88" fill="#dedede"/><rect x="72.67" y="61.20" width="3.88" height="3.88" fill="#d4d4d4"/><rect x="76.50" y="61.20" width="3.88" height="3.88" fill="#2e2e2e"/><rect x="80.33" y="61.20" width="3.88" height="3.88" fill="#878787"/><rect x="84.15" y="61.20" width="3.88" height="3.88" fill="#595959"/><rect x="87.98" y="61.20" width="3.88" height="3.88" fill="#afafaf"/><rect x="91.80" y="61.20" width="3.88" height="3.88" fill="#aaaaaa"/><rect x="95.62" y="61.20" width="3.88" height="3.88" fill="#6d6d6d"/><rect x="99.45" y="61.20" width="3.88" height="3.88" fill="#3f3f3f"/><rect x="103.28" y="61.20" width="3.88" height="3.88" fill="#4f4f4f"/><rect x="107.10" y="61.20" width="3.88" height="3.88" fill="#656565"/><rect x="110.93" y="61.20" width="3.88" height="3.88" fill="#4d4d4d"/><rect x="114.75" y="61.20" width="3.88" height="3.88" fill="#333333"/><rect x="118.58" y="61.20" width="3.88" height="3.88" fill="#303030"/><rect x="122.40" y="61.20" width="3.88" height="3.88" fill="#484848"/><rect x="126.23" y="61.20" width="3.88" height="3.88" fill="#bcbcbc"/><rect x="130.05" y="61.20" width="3.88" height="3.88" fill="#949494"/><rect x="133.88" y="61.20" width="3.88" height="3.88" fill="#2b2b2b"/><rect x="137.70" y="61.20" width="3.88" height="3.88" fill="#262626"/><rect x="141.53" y="61.20" width="3.88" height="3.88" fill="#343434"/><rect x="145.35" y="61.20" width="3.88" height="3.88" fill="#4f4f4f"/><rect x="149.18" y="61.20" width="3.88" height="3.88" fill="#505050"/><rect x="0.00" y="65.03" width="3.88" height="3.88" fill="#222222"/><rect x="3.83" y="65.03" width="3.88" height="3.88" fill="#363636"/><rect x="7.65" y="65.03" width="3.88" height="3.88" fill="#3b3b3b"/><rect x="11.48" y="65.03" width="3.88" height="3.88" fill="#222222"/><rect x="15.30" y="65.03" width="3.88" height="3.88" fill="#343434"/><rect x="19.12" y="65.03" width="3.88" height="3.88" fill="#373737"/><rect x="22.95" y="65.03" width="3.88" height="3.88" fill="#262626"/><rect x="26.78" y="65.03" width="3.88" height="3.88" fill="#2f2f2f"/><rect x="30.60" y="65.03" width="3.88" height="3.88" fill="#3a3a3a"/><rect x="34.43" y="65.03" width="3.88" height="3.88" fill="#1f1f1f"/><rect x="38.25" y="65.03" width="3.88" height="3.88" fill="#232323"/><rect x="42.08" y="65.03" width="3.88" height="3.88" fill="#272727"/><rect x="45.90" y="65.03" width="3.88" height="3.88" fill="#101010"/><rect x="49.73" y="65.03" width="3.88" height="3.88" fill="#252525"/><rect x="53.55" y="65.03" width="3.88" height="3.88" fill="#1b1b1b"/><rect x="57.38" y="65.03" width="3.88" height="3.88" fill="#2a2a2a"/><rect x="61.20" y="65.03" width="3.88" height="3.88" fill="#151515"/><rect x="65.03" y="65.03" width="3.88" height="3.88" fill="#090909"/><rect x="68.85" y="65.03" width="3.88" height="3.88" fill="#ffffff"/><rect x="72.67" y="65.03" width="3.88" height="3.88" fill="#ffffff"/><rect x="76.50" y="65.03" width="3.88" height="3.88" fill="#393939"/><rect x="80.33" y="65.03" width="3.88" height="3.88" fill="#929292"/><rect x="84.15" y="65.03" width="3.88" height="3.88" fill="#393939"/><rect x="87.98" y="65.03" width="3.88" height="3.88" fill="#969696"/><rect x="91.80" y="65.03" width="3.88" height="3.88" fill="#b0b0b0"/><rect x="95.62" y="65.03" width="3.88" height="3.88" fill="#2d2d2d"/><rect x="99.45" y="65.03" width="3.88" height="3.88" fill="#3c3c3c"/><rect x="103.28" y="65.03" width="3.88" height="3.88" fill="#5b5b5b"/><rect x="107.10" y="65.03" width="3.88" height="3.88" fill="#6b6b6b"/><rect x="110.93" y="65.03" width="3.88" height="3.88" fill="#414141"/><rect x="114.75" y="65.03" width="3.88" height="3.88" fill="#494949"/><rect x="118.58" y="65.03" width="3.88" height="3.88" fill="#393939"/><rect x="122.40" y="65.03" width="3.88" height="3.88" fill="#484848"/><rect x="126.23" y="65.03" width="3.88" height="3.88" fill="#e0e0e0"/><rect x="130.05" y="65.03" width="3.88" height="3.88" fill="#a4a4a4"/><rect x="133.88" y="65.03" width="3.88" height="3.88" fill="#505050"/><rect x="137.70" y="65.03" width="3.88" height="3.88" fill="#242424"/><rect x="141.53" y="65.03" width="3.88" height="3.88" fill="#2e2e2e"/><rect x="145.35" y="65.03" width="3.88" height="3.88" fill="#555555"/><rect x="149.18" y="65.03" width="3.88" height="3.88" fill="#636363"/><rect x="0.00" y="68.85" width="3.88" height="3.88" fill="#161616"/><rect x="3.83" y="68.85" width="3.88" height="3.88" fill="#0a0a0a"/><rect x="7.65" y="68.85" width="3.88" height="3.88" fill="#303030"/><rect x="11.48" y="68.85" width="3.88" height="3.88" fill="#333333"/><rect x="15.30" y="68.85" width="3.88" height="3.88" fill="#303030"/><rect x="19.12" y="68.85" width="3.88" height="3.88" fill="#6f6f6f"/><rect x="22.95" y="68.85" width="3.88" height="3.88" fill="#272727"/><rect x="26.78" y="68.85" width="3.88" height="3.88" fill="#282828"/><rect x="30.60" y="68.85" width="3.88" height="3.88" fill="#313131"/><rect x="34.43" y="68.85" width="3.88" height="3.88" fill="#2a2a2a"/><rect x="38.25" y="68.85" width="3.88" height="3.88" fill="#3c3c3c"/><rect x="42.08" y="68.85" width="3.88" height="3.88" fill="#131313"/><rect x="45.90" y="68.85" width="3.88" height="3.88" fill="#1f1f1f"/><rect x="49.73" y="68.85" width="3.88" height="3.88" fill="#000000"/><rect x="53.55" y="68.85" width="3.88" height="3.88" fill="#303030"/><rect x="57.38" y="68.85" width="3.88" height="3.88" fill="#1f1f1f"/><rect x="61.20" y="68.85" width="3.88" height="3.88" fill="#313131"/><rect x="65.03" y="68.85" width="3.88" height="3.88" fill="#434343"/><rect x="68.85" y="68.85" width="3.88" height="3.88" fill="#fefefe"/><rect x="72.67" y="68.85" width="3.88" height="3.88" fill="#f7f7f7"/><rect x="76.50" y="68.85" width="3.88" height="3.88" fill="#393939"/><rect x="80.33" y="68.85" width="3.88" height="3.88" fill="#6e6e6e"/><rect x="84.15" y="68.85" width="3.88" height="3.88" fill="#333333"/><rect x="87.98" y="68.85" width="3.88" height="3.88" fill="#b4b4b4"/><rect x="91.80" y="68.85" width="3.88" height="3.88" fill="#a5a5a5"/><rect x="95.62" y="68.85" width="3.88" height="3.88" fill="#494949"/><rect x="99.45" y="68.85" width="3.88" height="3.88" fill="#454545"/><rect x="103.28" y="68.85" width="3.88" height="3.88" fill="#6c6c6c"/><rect x="107.10" y="68.85" width="3.88" height="3.88" fill="#656565"/><rect x="110.93" y="68.85" width="3.88" height="3.88" fill="#414141"/><rect x="114.75" y="68.85" width="3.88" height="3.88" fill="#4e4e4e"/><rect x="118.58" y="68.85" width="3.88" height="3.88" fill="#414141"/><rect x="122.40" y="68.85" width="3.88" height="3.88" fill="#313131"/><rect x="126.23" y="68.85" width="3.88" height="3.88" fill="#dbdbdb"/><rect x="130.05" y="68.85" width="3.88" height="3.88" fill="#c1c1c1"/><rect x="133.88" y="68.85" width="3.88" height="3.88" fill="#1f1f1f"/><rect x="137.70" y="68.85" width="3.88" height="3.88" fill="#3d3d3d"/><rect x="141.53" y="68.85" width="3.88" height="3.88" fill="#333333"/><rect x="145.35" y="68.85" width="3.88" height="3.88" fill="#363636"/><rect x="149.18" y="68.85" width="3.88" height="3.88" fill="#6e6e6e"/><rect x="0.00" y="72.67" width="3.88" height="3.88" fill="#2c2c2c"/><rect x="3.83" y="72.67" width="3.88" height="3.88" fill="#343434"/><rect x="7.65" y="72.67" width="3.88" height="3.88" fill="#2a2a2a"/><rect x="11.48" y="72.67" width="3.88" height="3.88" fill="#252525"/><rect x="15.30" y="72.67" width="3.88" height="3.88" fill="#121212"/><rect x="19.12" y="72.67" width="3.88" height="3.88" fill="#535353"/><rect x="22.95" y="72.67" width="3.88" height="3.88" fill="#252525"/><rect x="26.78" y="72.67" width="3.88" height="3.88" fill="#212121"/><rect x="30.60" y="72.67" width="3.88" height="3.88" fill="#292929"/><rect x="34.43" y="72.67" width="3.88" height="3.88" fill="#262626"/><rect x="38.25" y="72.67" width="3.88" height="3.88" fill="#2e2e2e"/><rect x="42.08" y="72.67" width="3.88" height="3.88" fill="#1f1f1f"/><rect x="45.90" y="72.67" width="3.88" height="3.88" fill="#242424"/><rect x="49.73" y="72.67" width="3.88" height="3.88" fill="#070707"/><rect x="53.55" y="72.67" width="3.88" height="3.88" fill="#1f1f1f"/><rect x="57.38" y="72.67" width="3.88" height="3.88" fill="#2e2e2e"/><rect x="61.20" y="72.67" width="3.88" height="3.88" fill="#373737"/><rect x="65.03" y="72.67" width="3.88" height="3.88" fill="#1f1f1f"/><rect x="68.85" y="72.67" width="3.88" height="3.88" fill="#fbfbfb"/><rect x="72.67" y="72.67" width="3.88" height="3.88" fill="#ffffff"/><rect x="76.50" y="72.67" width="3.88" height="3.88" fill="#3c3c3c"/><rect x="80.33" y="72.67" width="3.88" height="3.88" fill="#8f8f8f"/><rect x="84.15" y="72.67" width="3.88" height="3.88" fill="#585858"/><rect x="87.98" y="72.67" width="3.88" height="3.88" fill="#a5a5a5"/><rect x="91.80" y="72.67" width="3.88" height="3.88" fill="#c2c2c2"/><rect x="95.62" y="72.67" width="3.88" height="3.88" fill="#3c3c3c"/><rect x="99.45" y="72.67" width="3.88" height="3.88" fill="#4b4b4b"/><rect x="103.28" y="72.67" width="3.88" height="3.88" fill="#5a5a5a"/><rect x="107.10" y="72.67" width="3.88" height="3.88" fill="#5e5e5e"/><rect x="110.93" y="72.67" width="3.88" height="3.88" fill="#565656"/><rect x="114.75" y="72.67" width="3.88" height="3.88" fill="#6b6b6b"/><rect x="118.58" y="72.67" width="3.88" height="3.88" fill="#393939"/><rect x="122.40" y="72.67" width="3.88" height="3.88" fill="#3a3a3a"/><rect x="126.23" y="72.67" width="3.88" height="3.88" fill="#c2c2c2"/><rect x="130.05" y="72.67" width="3.88" height="3.88" fill="#9b9b9b"/><rect x="133.88" y="72.67" width="3.88" height="3.88" fill="#353535"/><rect x="137.70" y="72.67" width="3.88" height="3.88" fill="#363636"/><rect x="141.53" y="72.67" width="3.88" height="3.88" fill="#292929"/><rect x="145.35" y="72.67" width="3.88" height="3.88" fill="#5b5b5b"/><rect x="149.18" y="72.67" width="3.88" height="3.88" fill="#363636"/><rect x="0.00" y="76.50" width="3.88" height="3.88" fill="#323232"/><rect x="3.83" y="76.50" width="3.88" height="3.88" fill="#121212"/><rect x="7.65" y="76.50" width="3.88" height="3.88" fill="#1e1e1e"/><rect x="11.48" y="76.50" width="3.88" height="3.88" fill="#202020"/><rect x="15.30" y="76.50" width="3.88" height="3.88" fill="#222222"/><rect x="19.12" y="76.50" width="3.88" height="3.88" fill="#525252"/><rect x="22.95" y="76.50" width="3.88" height="3.88" fill="#262626"/><rect x="26.78" y="76.50" width="3.88" height="3.88" fill="#1f1f1f"/><rect x="30.60" y="76.50" width="3.88" height="3.88" fill="#2c2c2c"/><rect x="34.43" y="76.50" width="3.88" height="3.88" fill="#3b3b3b"/><rect x="38.25" y="76.50" width="3.88" height="3.88" fill="#252525"/><rect x="42.08" y="76.50" width="3.88" height="3.88" fill="#2a2a2a"/><rect x="45.90" y="76.50" width="3.88" height="3.88" fill="#363636"/><rect x="49.73" y="76.50" width="3.88" height="3.88" fill="#282828"/><rect x="53.55" y="76.50" width="3.88" height="3.88" fill="#131313"/><rect x="57.38" y="76.50" width="3.88" height="3.88" fill="#474747"/><rect x="61.20" y="76.50" width="3.88" height="3.88" fill="#434343"/><rect x="65.03" y="76.50" width="3.88" height="3.88" fill="#090909"/><rect x="68.85" y="76.50" width="3.88" height="3.88" fill="#fdfdfd"/><rect x="72.67" y="76.50" width="3.88" height="3.88" fill="#ffffff"/><rect x="76.50" y="76.50" width="3.88" height="3.88" fill="#515151"/><rect x="80.33" y="76.50" width="3.88" height="3.88" fill="#8e8e8e"/><rect x="84.15" y="76.50" width="3.88" height="3.88" fill="#393939"/><rect x="87.98" y="76.50" width="3.88" height="3.88" fill="#8b8b8b"/><rect x="91.80" y="76.50" width="3.88" height="3.88" fill="#a7a7a7"/><rect x="95.62" y="76.50" width="3.88" height="3.88" fill="#595959"/><rect x="99.45" y="76.50" width="3.88" height="3.88" fill="#353535"/><rect x="103.28" y="76.50" width="3.88" height="3.88" fill="#494949"/><rect x="107.10" y="76.50" width="3.88" height="3.88" fill="#5b5b5b"/><rect x="110.93" y="76.50" width="3.88" height="3.88" fill="#242424"/><rect x="114.75" y="76.50" width="3.88" height="3.88" fill="#3f3f3f"/><rect x="118.58" y="76.50" width="3.88" height="3.88" fill="#3c3c3c"/><rect x="122.40" y="76.50" width="3.88" height="3.88" fill="#4b4b4b"/><rect x="126.23" y="76.50" width="3.88" height="3.88" fill="#a4a4a4"/><rect x="130.05" y="76.50" width="3.88" height="3.88" fill="#9f9f9f"/><rect x="133.88" y="76.50" width="3.88" height="3.88" fill="#282828"/><rect x="137.70" y="76.50" width="3.88" height="3.88" fill="#2d2d2d"/><rect x="141.53" y="76.50" width="3.88" height="3.88" fill="#242424"/><rect x="145.35" y="76.50" width="3.88" height="3.88" fill="#525252"/><rect x="149.18" y="76.50" width="3.88" height="3.88" fill="#5f5f5f"/><rect x="0.00" y="80.33" width="3.88" height="3.88" fill="#383838"/><rect x="3.83" y="80.33" width="3.88" height="3.88" fill="#404040"/><rect x="7.65" y="80.33" width="3.88" height="3.88" fill="#1c1c1c"/><rect x="11.48" y="80.33" width="3.88" height="3.88" fill="#222222"/><rect x="15.30" y="80.33" width="3.88" height="3.88" fill="#040404"/><rect x="19.12" y="80.33" width="3.88" height="3.88" fill="#636363"/><rect x="22.95" y="80.33" width="3.88" height="3.88" fill="#1a1a1a"/><rect x="26.78" y="80.33" width="3.88" height="3.88" fill="#242424"/><rect x="30.60" y="80.33" width="3.88" height="3.88" fill="#2c2c2c"/><rect x="34.43" y="80.33" width="3.88" height="3.88" fill="#121212"/><rect x="38.25" y="80.33" width="3.88" height="3.88" fill="#2b2b2b"/><rect x="42.08" y="80.33" width="3.88" height="3.88" fill="#242424"/><rect x="45.90" y="80.33" width="3.88" height="3.88" fill="#0b0b0b"/><rect x="49.73" y="80.33" width="3.88" height="3.88" fill="#292929"/><rect x="53.55" y="80.33" width="3.88" height="3.88" fill="#353535"/><rect x="57.38" y="80.33" width="3.88" height="3.88" fill="#0a0a0a"/><rect x="61.20" y="80.33" width="3.88" height="3.88" fill="#303030"/><rect x="65.03" y="80.33" width="3.88" height="3.88" fill="#272727"/><rect x="68.85" y="80.33" width="3.88" height="3.88" fill="#ffffff"/><rect x="72.67" y="80.33" width="3.88" height="3.88" fill="#ffffff"/><rect x="76.50" y="80.33" width="3.88" height="3.88" fill="#575757"/><rect x="80.33" y="80.33" width="3.88" height="3.88" fill="#7b7b7b"/><rect x="84.15" y="80.33" width="3.88" height="3.88" fill="#4b4b4b"/><rect x="87.98" y="80.33" width="3.88" height="3.88" fill="#9b9b9b"/><rect x="91.80" y="80.33" width="3.88" height="3.88" fill="#b6b6b6"/><rect x="95.62" y="80.33" width="3.88" height="3.88" fill="#3a3a3a"/><rect x="99.45" y="80.33" width="3.88" height="3.88" fill="#464646"/><rect x="103.28" y="80.33" width="3.88" height="3.88" fill="#7b7b7b"/><rect x="107.10" y="80.33" width="3.88" height="3.88" fill="#646464"/><rect x="110.93" y="80.33" width="3.88" height="3.88" fill="#414141"/><rect x="114.75" y="80.33" width="3.88" height="3.88" fill="#313131"/><rect x="118.58" y="80.33" width="3.88" height="3.88" fill="#373737"/><rect x="122.40" y="80.33" width="3.88" height="3.88" fill="#474747"/><rect x="126.23" y="80.33" width="3.88" height="3.88" fill="#cecece"/><rect x="130.05" y="80.33" width="3.88" height="3.88" fill="#c0c0c0"/><rect x="133.88" y="80.33" width="3.88" height="3.88" fill="#353535"/><rect x="137.70" y="80.33" width="3.88" height="3.88" fill="#2d2d2d"/><rect x="141.53" y="80.33" width="3.88" height="3.88" fill="#414141"/><rect x="145.35" y="80.33" width="3.88" height="3.88" fill="#4b4b4b"/><rect x="149.18" y="80.33" width="3.88" height="3.88" fill="#484848"/><rect x="0.00" y="84.15" width="3.88" height="3.88" fill="#343434"/><rect x="3.83" y="84.15" width="3.88" height="3.88" fill="#282828"/><rect x="7.65" y="84.15" width="3.88" height="3.88" fill="#242424"/><rect x="11.48" y="84.15" width="3.88" height="3.88" fill="#1f1f1f"/><rect x="15.30" y="84.15" width="3.88" height="3.88" fill="#242424"/><rect x="19.12" y="84.15" width="3.88" height="3.88" fill="#4e4e4e"/><rect x="22.95" y="84.15" width="3.88" height="3.88" fill="#292929"/><rect x="26.78" y="84.15" width="3.88" height="3.88" fill="#141414"/><rect x="30.60" y="84.15" width="3.88" height="3.88" fill="#2a2a2a"/><rect x="34.43" y="84.15" width="3.88" height="3.88" fill="#272727"/><rect x="38.25" y="84.15" width="3.88" height="3.88" fill="#171717"/><rect x="42.08" y="84.15" width="3.88" height="3.88" fill="#2f2f2f"/><rect x="45.90" y="84.15" width="3.88" height="3.88" fill="#212121"/><rect x="49.73" y="84.15" width="3.88" height="3.88" fill="#202020"/><rect x="53.55" y="84.15" width="3.88" height="3.88" fill="#303030"/><rect x="57.38" y="84.15" width="3.88" height="3.88" fill="#373737"/><rect x="61.20" y="84.15" width="3.88" height="3.88" fill="#1b1b1b"/><rect x="65.03" y="84.15" width="3.88" height="3.88" fill="#2b2b2b"/><rect x="68.85" y="84.15" width="3.88" height="3.88" fill="#e3e3e3"/><rect x="72.67" y="84.15" width="3.88" height="3.88" fill="#ffffff"/><rect x="76.50" y="84.15" width="3.88" height="3.88" fill="#393939"/><rect x="80.33" y="84.15" width="3.88" height="3.88" fill="#999999"/><rect x="84.15" y="84.15" width="3.88" height="3.88" fill="#333333"/><rect x="87.98" y="84.15" width="3.88" height="3.88" fill="#b8b8b8"/><rect x="91.80" y="84.15" width="3.88" height="3.88" fill="#dadada"/><rect x="95.62" y="84.15" width="3.88" height="3.88" fill="#1d1d1d"/><rect x="99.45" y="84.15" width="3.88" height="3.88" fill="#404040"/><rect x="103.28" y="84.15" width="3.88" height="3.88" fill="#656565"/><rect x="107.10" y="84.15" width="3.88" height="3.88" fill="#5a5a5a"/><rect x="110.93" y="84.15" width="3.88" height="3.88" fill="#393939"/><rect x="114.75" y="84.15" width="3.88" height="3.88" fill="#676767"/><rect x="118.58" y="84.15" width="3.88" height="3.88" fill="#454545"/><rect x="122.40" y="84.15" width="3.88" height="3.88" fill="#282828"/><rect x="126.23" y="84.15" width="3.88" height="3.88" fill="#cbcbcb"/><rect x="130.05" y="84.15" width="3.88" height="3.88" fill="#898989"/><rect x="133.88" y="84.15" width="3.88" height="3.88" fill="#3e3e3e"/><rect x="137.70" y="84.15" width="3.88" height="3.88" fill="#252525"/><rect x="141.53" y="84.15" width="3.88" height="3.88" fill="#303030"/><rect x="145.35" y="84.15" width="3.88" height="3.88" fill="#686868"/><rect x="149.18" y="84.15" width="3.88" height="3.88" fill="#545454"/><rect x="0.00" y="87.98" width="3.88" height="3.88" fill="#141414"/><rect x="3.83" y="87.98" width="3.88" height="3.88" fill="#0f0f0f"/><rect x="7.65" y="87.98" width="3.88" height="3.88" fill="#383838"/><rect x="11.48" y="87.98" width="3.88" height="3.88" fill="#323232"/><rect x="15.30" y="87.98" width="3.88" height="3.88" fill="#1c1c1c"/><rect x="19.12" y="87.98" width="3.88" height="3.88" fill="#525252"/><rect x="22.95" y="87.98" width="3.88" height="3.88" fill="#2b2b2b"/><rect x="26.78" y="87.98" width="3.88" height="3.88" fill="#2e2e2e"/><rect x="30.60" y="87.98" width="3.88" height="3.88" fill="#050505"/><rect x="34.43" y="87.98" width="3.88" height="3.88" fill="#202020"/><rect x="38.25" y="87.98" width="3.88" height="3.88" fill="#313131"/><rect x="42.08" y="87.98" width="3.88" height="3.88" fill="#2f2f2f"/><rect x="45.90" y="87.98" width="3.88" height="3.88" fill="#313131"/><rect x="49.73" y="87.98" width="3.88" height="3.88" fill="#020202"/><rect x="53.55" y="87.98" width="3.88" height="3.88" fill="#272727"/><rect x="57.38" y="87.98" width="3.88" height="3.88" fill="#2b2b2b"/><rect x="61.20" y="87.98" width="3.88" height="3.88" fill="#484848"/><rect x="65.03" y="87.98" width="3.88" height="3.88" fill="#171717"/><rect x="68.85" y="87.98" width="3.88" height="3.88" fill="#f4f4f4"/><rect x="72.67" y="87.98" width="3.88" height="3.88" fill="#ffffff"/><rect x="76.50" y="87.98" width="3.88" height="3.88" fill="#505050"/><rect x="80.33" y="87.98" width="3.88" height="3.88" fill="#767676"/><rect x="84.15" y="87.98" width="3.88" height="3.88" fill="#505050"/><rect x="87.98" y="87.98" width="3.88" height="3.88" fill="#919191"/><rect x="91.80" y="87.98" width="3.88" height="3.88" fill="#ababab"/><rect x="95.62" y="87.98" width="3.88" height="3.88" fill="#3f3f3f"/><rect x="99.45" y="87.98" width="3.88" height="3.88" fill="#4a4a4a"/><rect x="103.28" y="87.98" width="3.88" height="3.88" fill="#4f4f4f"/><rect x="107.10" y="87.98" width="3.88" height="3.88" fill="#3e3e3e"/><rect x="110.93" y="87.98" width="3.88" height="3.88" fill="#555555"/><rect x="114.75" y="87.98" width="3.88" height="3.88" fill="#484848"/><rect x="118.58" y="87.98" width="3.88" height="3.88" fill="#3a3a3a"/><rect x="122.40" y="87.98" width="3.88" height="3.88" fill="#474747"/><rect x="126.23" y="87.98" width="3.88" height="3.88" fill="#cfcfcf"/><rect x="130.05" y="87.98" width="3.88" height="3.88" fill="#9d9d9d"/><rect x="133.88" y="87.98" width="3.88" height="3.88" fill="#2c2c2c"/><rect x="137.70" y="87.98" width="3.88" height="3.88" fill="#353535"/><rect x="141.53" y="87.98" width="3.88" height="3.88" fill="#353535"/><rect x="145.35" y="87.98" width="3.88" height="3.88" fill="#4c4c4c"/><rect x="149.18" y="87.98" width="3.88" height="3.88" fill="#2d2d2d"/><rect x="0.00" y="91.80" width="3.88" height="3.88" fill="#393939"/><rect x="3.83" y="91.80" width="3.88" height="3.88" fill="#2c2c2c"/><rect x="7.65" y="91.80" width="3.88" height="3.88" fill="#282828"/><rect x="11.48" y="91.80" width="3.88" height="3.88" fill="#242424"/><rect x="15.30" y="91.80" width="3.88" height="3.88" fill="#2b2b2b"/><rect x="19.12" y="91.80" width="3.88" height="3.88" fill="#3d3d3d"/><rect x="22.95" y="91.80" width="3.88" height="3.88" fill="#161616"/><rect x="26.78" y="91.80" width="3.88" height="3.88" fill="#1a1a1a"/><rect x="30.60" y="91.80" width="3.88" height="3.88" fill="#1c1c1c"/><rect x="34.43" y="91.80" width="3.88" height="3.88" fill="#1c1c1c"/><rect x="38.25" y="91.80" width="3.88" height="3.88" fill="#141414"/><rect x="42.08" y="91.80" width="3.88" height="3.88" fill="#2d2d2d"/><rect x="45.90" y="91.80" width="3.88" height="3.88" fill="#121212"/><rect x="49.73" y="91.80" width="3.88" height="3.88" fill="#2e2e2e"/><rect x="53.55" y="91.80" width="3.88" height="3.88" fill="#161616"/><rect x="57.38" y="91.80" width="3.88" height="3.88" fill="#292929"/><rect x="61.20" y="91.80" width="3.88" height="3.88" fill="#383838"/><rect x="65.03" y="91.80" width="3.88" height="3.88" fill="#272727"/><rect x="68.85" y="91.80" width="3.88" height="3.88" fill="#e8e8e8"/><rect x="72.67" y="91.80" width="3.88" height="3.88" fill="#ffffff"/><rect x="76.50" y="91.80" width="3.88" height="3.88" fill="#444444"/><rect x="80.33" y="91.80" width="3.88" height="3.88" fill="#5b5b5b"/><rect x="84.15" y="91.80" width="3.88" height="3.88" fill="#343434"/><rect x="87.98" y="91.80" width="3.88" height="3.88" fill="#a8a8a8"/><rect x="91.80" y="91.80" width="3.88" height="3.88" fill="#999999"/><rect x="95.62" y="91.80" width="3.88" height="3.88" fill="#494949"/><rect x="99.45" y="91.80" width="3.88" height="3.88" fill="#545454"/><rect x="103.28" y="91.80" width="3.88" height="3.88" fill="#6a6a6a"/><rect x="107.10" y="91.80" width="3.88" height="3.88" fill="#6c6c6c"/><rect x="110.93" y="91.80" width="3.88" height="3.88" fill="#4d4d4d"/><rect x="114.75" y="91.80" width="3.88" height="3.88" fill="#3f3f3f"/><rect x="118.58" y="91.80" width="3.88" height="3.88" fill="#434343"/><rect x="122.40" y="91.80" width="3.88" height="3.88" fill="#3f3f3f"/><rect x="126.23" y="91.80" width="3.88" height="3.88" fill="#adadad"/><rect x="130.05" y="91.80" width="3.88" height="3.88" fill="#b1b1b1"/><rect x="133.88" y="91.80" width="3.88" height="3.88" fill="#141414"/><rect x="137.70" y="91.80" width="3.88" height="3.88" fill="#292929"/><rect x="141.53" y="91.80" width="3.88" height="3.88" fill="#2d2d2d"/><rect x="145.35" y="91.80" width="3.88" height="3.88" fill="#404040"/><rect x="149.18" y="91.80" width="3.88" height="3.88" fill="#515151"/><rect x="0.00" y="95.62" width="3.88" height="3.88" fill="#2f2f2f"/><rect x="3.83" y="95.62" width="3.88" height="3.88" fill="#252525"/><rect x="7.65" y="95.62" width="3.88" height="3.88" fill="#454545"/><rect x="11.48" y="95.62" width="3.88" height="3.88" fill="#020202"/><rect x="15.30" y="95.62" width="3.88" height="3.88" fill="#252525"/><rect x="19.12" y="95.62" width="3.88" height="3.88" fill="#252525"/><rect x="22.95" y="95.62" width="3.88" height="3.88" fill="#323232"/><rect x="26.78" y="95.62" width="3.88" height="3.88" fill="#4a4a4a"/><rect x="30.60" y="95.62" width="3.88" height="3.88" fill="#020202"/><rect x="34.43" y="95.62" width="3.88" height="3.88" fill="#262626"/><rect x="38.25" y="95.62" width="3.88" height="3.88" fill="#2c2c2c"/><rect x="42.08" y="95.62" width="3.88" height="3.88" fill="#202020"/><rect x="45.90" y="95.62" width="3.88" height="3.88" fill="#2c2c2c"/><rect x="49.73" y="95.62" width="3.88" height="3.88" fill="#050505"/><rect x="53.55" y="95.62" width="3.88" height="3.88" fill="#303030"/><rect x="57.38" y="95.62" width="3.88" height="3.88" fill="#2a2a2a"/><rect x="61.20" y="95.62" width="3.88" height="3.88" fill="#252525"/><rect x="65.03" y="95.62" width="3.88" height="3.88" fill="#1c1c1c"/><rect x="68.85" y="95.62" width="3.88" height="3.88" fill="#ffffff"/><rect x="72.67" y="95.62" width="3.88" height="3.88" fill="#efefef"/><rect x="76.50" y="95.62" width="3.88" height="3.88" fill="#454545"/><rect x="80.33" y="95.62" width="3.88" height="3.88" fill="#757575"/><rect x="84.15" y="95.62" width="3.88" height="3.88" fill="#1a1a1a"/><rect x="87.98" y="95.62" width="3.88" height="3.88" fill="#a4a4a4"/><rect x="91.80" y="95.62" width="3.88" height="3.88" fill="#a9a9a9"/><rect x="95.62" y="95.62" width="3.88" height="3.88" fill="#545454"/><rect x="99.45" y="95.62" width="3.88" height="3.88" fill="#393939"/><rect x="103.28" y="95.62" width="3.88" height="3.88" fill="#5b5b5b"/><rect x="107.10" y="95.62" width="3.88" height="3.88" fill="#676767"/><rect x="110.93" y="95.62" width="3.88" height="3.88" fill="#464646"/><rect x="114.75" y="95.62" width="3.88" height="3.88" fill="#585858"/><rect x="118.58" y="95.62" width="3.88" height="3.88" fill="#646464"/><rect x="122.40" y="95.62" width="3.88" height="3.88" fill="#353535"/><rect x="126.23" y="95.62" width="3.88" height="3.88" fill="#848484"/><rect x="130.05" y="95.62" width="3.88" height="3.88" fill="#cbcbcb"/><rect x="133.88" y="95.62" width="3.88" height="3.88" fill="#444444"/><rect x="137.70" y="95.62" width="3.88" height="3.88" fill="#3b3b3b"/><rect x="141.53" y="95.62" width="3.88" height="3.88" fill="#393939"/><rect x="145.35" y="95.62" width="3.88" height="3.88" fill="#474747"/><rect x="149.18" y="95.62" width="3.88" height="3.88" fill="#454545"/><rect x="0.00" y="99.45" width="3.88" height="3.88" fill="#343434"/><rect x="3.83" y="99.45" width="3.88" height="3.88" fill="#1b1b1b"/><rect x="7.65" y="99.45" width="3.88" height="3.88" fill="#0e0e0e"/><rect x="11.48" y="99.45" width="3.88" height="3.88" fill="#191919"/><rect x="15.30" y="99.45" width="3.88" height="3.88" fill="#4b4b4b"/><rect x="19.12" y="99.45" width="3.88" height="3.88" fill="#636363"/><rect x="22.95" y="99.45" width="3.88" height="3.88" fill="#1b1b1b"/><rect x="26.78" y="99.45" width="3.88" height="3.88" fill="#1a1a1a"/><rect x="30.60" y="99.45" width="3.88" height="3.88" fill="#282828"/><rect x="34.43" y="99.45" width="3.88" height="3.88" fill="#1a1a1a"/><rect x="38.25" y="99.45" width="3.88" height="3.88" fill="#373737"/><rect x="42.08" y="99.45" width="3.88" height="3.88" fill="#232323"/><rect x="45.90" y="99.45" width="3.88" height="3.88" fill="#151515"/><rect x="49.73" y="99.45" width="3.88" height="3.88" fill="#373737"/><rect x="53.55" y="99.45" width="3.88" height="3.88" fill="#1c1c1c"/><rect x="57.38" y="99.45" width="3.88" height="3.88" fill="#282828"/><rect x="61.20" y="99.45" width="3.88" height="3.88" fill="#242424"/><rect x="65.03" y="99.45" width="3.88" height="3.88" fill="#202020"/><rect x="68.85" y="99.45" width="3.88" height="3.88" fill="#ffffff"/><rect x="72.67" y="99.45" width="3.88" height="3.88" fill="#e9e9e9"/><rect x="76.50" y="99.45" width="3.88" height="3.88" fill="#232323"/><rect x="80.33" y="99.45" width="3.88" height="3.88" fill="#515151"/><rect x="84.15" y="99.45" width="3.88" height="3.88" fill="#292929"/><rect x="87.98" y="99.45" width="3.88" height="3.88" fill="#929292"/><rect x="91.80" y="99.45" width="3.88" height="3.88" fill="#a4a4a4"/><rect x="95.62" y="99.45" width="3.88" height="3.88" fill="#484848"/><rect x="99.45" y="99.45" width="3.88" height="3.88" fill="#515151"/><rect x="103.28" y="99.45" width="3.88" height="3.88" fill="#5e5e5e"/><rect x="107.10" y="99.45" width="3.88" height="3.88" fill="#4d4d4d"/><rect x="110.93" y="99.45" width="3.88" height="3.88" fill="#383838"/><rect x="114.75" y="99.45" width="3.88" height="3.88" fill="#212121"/><rect x="118.58" y="99.45" width="3.88" height="3.88" fill="#414141"/><rect x="122.40" y="99.45" width="3.88" height="3.88" fill="#4b4b4b"/><rect x="126.23" y="99.45" width="3.88" height="3.88" fill="#c3c3c3"/><rect x="130.05" y="99.45" width="3.88" height="3.88" fill="#b2b2b2"/><rect x="133.88" y="99.45" width="3.88" height="3.88" fill="#2b2b2b"/><rect x="137.70" y="99.45" width="3.88" height="3.88" fill="#3b3b3b"/><rect x="141.53" y="99.45" width="3.88" height="3.88" fill="#2e2e2e"/><rect x="145.35" y="99.45" width="3.88" height="3.88" fill="#5e5e5e"/><rect x="149.18" y="99.45" width="3.88" height="3.88" fill="#5c5c5c"/><rect x="0.00" y="103.28" width="3.88" height="3.88" fill="#2b2b2b"/><rect x="3.83" y="103.28" width="3.88" height="3.88" fill="#3a3a3a"/><rect x="7.65" y="103.28" width="3.88" height="3.88" fill="#1f1f1f"/><rect x="11.48" y="103.28" width="3.88" height="3.88" fill="#222222"/><rect x="15.30" y="103.28" width="3.88" height="3.88" fill="#1c1c1c"/><rect x="19.12" y="103.28" width="3.88" height="3.88" fill="#363636"/><rect x="22.95" y="103.28" width="3.88" height="3.88" fill="#3a3a3a"/><rect x="26.78" y="103.28" width="3.88" height="3.88" fill="#3d3d3d"/><rect x="30.60" y="103.28" width="3.88" height="3.88" fill="#252525"/><rect x="34.43" y="103.28" width="3.88" height="3.88" fill="#2c2c2c"/><rect x="38.25" y="103.28" width="3.88" height="3.88" fill="#353535"/><rect x="42.08" y="103.28" width="3.88" height="3.88" fill="#303030"/><rect x="45.90" y="103.28" width="3.88" height="3.88" fill="#353535"/><rect x="49.73" y="103.28" width="3.88" height="3.88" fill="#131313"/><rect x="53.55" y="103.28" width="3.88" height="3.88" fill="#1c1c1c"/><rect x="57.38" y="103.28" width="3.88" height="3.88" fill="#2b2b2b"/><rect x="61.20" y="103.28" width="3.88" height="3.88" fill="#393939"/><rect x="65.03" y="103.28" width="3.88" height="3.88" fill="#262626"/><rect x="68.85" y="103.28" width="3.88" height="3.88" fill="#e4e4e4"/><rect x="72.67" y="103.28" width="3.88" height="3.88" fill="#f3f3f3"/><rect x="76.50" y="103.28" width="3.88" height="3.88" fill="#373737"/><rect x="80.33" y="103.28" width="3.88" height="3.88" fill="#6d6d6d"/><rect x="84.15" y="103.28" width="3.88" height="3.88" fill="#555555"/><rect x="87.98" y="103.28" width="3.88" height="3.88" fill="#959595"/><rect x="91.80" y="103.28" width="3.88" height="3.88" fill="#a5a5a5"/><rect x="95.62" y="103.28" width="3.88" height="3.88" fill="#6c6c6c"/><rect x="99.45" y="103.28" width="3.88" height="3.88" fill="#5b5b5b"/><rect x="103.28" y="103.28" width="3.88" height="3.88" fill="#626262"/><rect x="107.10" y="103.28" width="3.88" height="3.88" fill="#505050"/><rect x="110.93" y="103.28" width="3.88" height="3.88" fill="#4a4a4a"/><rect x="114.75" y="103.28" width="3.88" height="3.88" fill="#5e5e5e"/><rect x="118.58" y="103.28" width="3.88" height="3.88" fill="#4e4e4e"/><rect x="122.40" y="103.28" width="3.88" height="3.88" fill="#585858"/><rect x="126.23" y="103.28" width="3.88" height="3.88" fill="#b8b8b8"/><rect x="130.05" y="103.28" width="3.88" height="3.88" fill="#c3c3c3"/><rect x="133.88" y="103.28" width="3.88" height="3.88" fill="#2b2b2b"/><rect x="137.70" y="103.28" width="3.88" height="3.88" fill="#343434"/><rect x="141.53" y="103.28" width="3.88" height="3.88" fill="#414141"/><rect x="145.35" y="103.28" width="3.88" height="3.88" fill="#383838"/><rect x="149.18" y="103.28" width="3.88" height="3.88" fill="#505050"/><rect x="0.00" y="107.10" width="3.88" height="3.88" fill="#2b2b2b"/><rect x="3.83" y="107.10" width="3.88" height="3.88" fill="#1f1f1f"/><rect x="7.65" y="107.10" width="3.88" height="3.88" fill="#232323"/><rect x="11.48" y="107.10" width="3.88" height="3.88" fill="#333333"/><rect x="15.30" y="107.10" width="3.88" height="3.88" fill="#444444"/><rect x="19.12" y="107.10" width="3.88" height="3.88" fill="#4e4e4e"/><rect x="22.95" y="107.10" width="3.88" height="3.88" fill="#292929"/><rect x="26.78" y="107.10" width="3.88" height="3.88" fill="#0f0f0f"/><rect x="30.60" y="107.10" width="3.88" height="3.88" fill="#3f3f3f"/><rect x="34.43" y="107.10" width="3.88" height="3.88" fill="#262626"/><rect x="38.25" y="107.10" width="3.88" height="3.88" fill="#242424"/><rect x="42.08" y="107.10" width="3.88" height="3.88" fill="#151515"/><rect x="45.90" y="107.10" width="3.88" height="3.88" fill="#242424"/><rect x="49.73" y="107.10" width="3.88" height="3.88" fill="#151515"/><rect x="53.55" y="107.10" width="3.88" height="3.88" fill="#252525"/><rect x="57.38" y="107.10" width="3.88" height="3.88" fill="#2b2b2b"/><rect x="61.20" y="107.10" width="3.88" height="3.88" fill="#252525"/><rect x="65.03" y="107.10" width="3.88" height="3.88" fill="#282828"/><rect x="68.85" y="107.10" width="3.88" height="3.88" fill="#e4e4e4"/><rect x="72.67" y="107.10" width="3.88" height="3.88" fill="#ffffff"/><rect x="76.50" y="107.10" width="3.88" height="3.88" fill="#373737"/><rect x="80.33" y="107.10" width="3.88" height="3.88" fill="#595959"/><rect x="84.15" y="107.10" width="3.88" height="3.88" fill="#3b3b3b"/><rect x="87.98" y="107.10" width="3.88" height="3.88" fill="#929292"/><rect x="91.80" y="107.10" width="3.88" height="3.88" fill="#8c8c8c"/><rect x="95.62" y="107.10" width="3.88" height="3.88" fill="#424242"/><rect x="99.45" y="107.10" width="3.88" height="3.88" fill="#4c4c4c"/><rect x="103.28" y="107.10" width="3.88" height="3.88" fill="#464646"/><rect x="107.10" y="107.10" width="3.88" height="3.88" fill="#595959"/><rect x="110.93" y="107.10" width="3.88" height="3.88" fill="#5b5b5b"/><rect x="114.75" y="107.10" width="3.88" height="3.88" fill="#4f4f4f"/><rect x="118.58" y="107.10" width="3.88" height="3.88" fill="#414141"/><rect x="122.40" y="107.10" width="3.88" height="3.88" fill="#464646"/><rect x="126.23" y="107.10" width="3.88" height="3.88" fill="#b2b2b2"/><rect x="130.05" y="107.10" width="3.88" height="3.88" fill="#b4b4b4"/><rect x="133.88" y="107.10" width="3.88" height="3.88" fill="#383838"/><rect x="137.70" y="107.10" width="3.88" height="3.88" fill="#2c2c2c"/><rect x="141.53" y="107.10" width="3.88" height="3.88" fill="#0a0a0a"/><rect x="145.35" y="107.10" width="3.88" height="3.88" fill="#515151"/><rect x="149.18" y="107.10" width="3.88" height="3.88" fill="#424242"/><rect x="0.00" y="110.93" width="3.88" height="3.88" fill="#313131"/><rect x="3.83" y="110.93" width="3.88" height="3.88" fill="#1f1f1f"/><rect x="7.65" y="110.93" width="3.88" height="3.88" fill="#2a2a2a"/><rect x="11.48" y="110.93" width="3.88" height="3.88" fill="#464646"/><rect x="15.30" y="110.93" width="3.88" height="3.88" fill="#191919"/><rect x="19.12" y="110.93" width="3.88" height="3.88" fill="#313131"/><rect x="22.95" y="110.93" width="3.88" height="3.88" fill="#111111"/><rect x="26.78" y="110.93" width="3.88" height="3.88" fill="#030303"/><rect x="30.60" y="110.93" width="3.88" height="3.88" fill="#0a0a0a"/><rect x="34.43" y="110.93" width="3.88" height="3.88" fill="#2a2a2a"/><rect x="38.25" y="110.93" width="3.88" height="3.88" fill="#1c1c1c"/><rect x="42.08" y="110.93" width="3.88" height="3.88" fill="#0a0a0a"/><rect x="45.90" y="110.93" width="3.88" height="3.88" fill="#101010"/><rect x="49.73" y="110.93" width="3.88" height="3.88" fill="#2d2d2d"/><rect x="53.55" y="110.93" width="3.88" height="3.88" fill="#1a1a1a"/><rect x="57.38" y="110.93" width="3.88" height="3.88" fill="#1f1f1f"/><rect x="61.20" y="110.93" width="3.88" height="3.88" fill="#292929"/><rect x="65.03" y="110.93" width="3.88" height="3.88" fill="#373737"/><rect x="68.85" y="110.93" width="3.88" height="3.88" fill="#ffffff"/><rect x="72.67" y="110.93" width="3.88" height="3.88" fill="#ffffff"/><rect x="76.50" y="110.93" width="3.88" height="3.88" fill="#444444"/><rect x="80.33" y="110.93" width="3.88" height="3.88" fill="#838383"/><rect x="84.15" y="110.93" width="3.88" height="3.88" fill="#5a5a5a"/><rect x="87.98" y="110.93" width="3.88" height="3.88" fill="#c7c7c7"/><rect x="91.80" y="110.93" width="3.88" height="3.88" fill="#9d9d9d"/><rect x="95.62" y="110.93" width="3.88" height="3.88" fill="#4f4f4f"/><rect x="99.45" y="110.93" width="3.88" height="3.88" fill="#4c4c4c"/><rect x="103.28" y="110.93" width="3.88" height="3.88" fill="#5c5c5c"/><rect x="107.10" y="110.93" width="3.88" height="3.88" fill="#525252"/><rect x="110.93" y="110.93" width="3.88" height="3.88" fill="#2e2e2e"/><rect x="114.75" y="110.93" width="3.88" height="3.88" fill="#3b3b3b"/><rect x="118.58" y="110.93" width="3.88" height="3.88" fill="#2a2a2a"/><rect x="122.40" y="110.93" width="3.88" height="3.88" fill="#585858"/><rect x="126.23" y="110.93" width="3.88" height="3.88" fill="#c3c3c3"/><rect x="130.05" y="110.93" width="3.88" height="3.88" fill="#979797"/><rect x="133.88" y="110.93" width="3.88" height="3.88" fill="#424242"/><rect x="137.70" y="110.93" width="3.88" height="3.88" fill="#3b3b3b"/><rect x="141.53" y="110.93" width="3.88" height="3.88" fill="#111111"/><rect x="145.35" y="110.93" width="3.88" height="3.88" fill="#727272"/><rect x="149.18" y="110.93" width="3.88" height="3.88" fill="#606060"/><rect x="0.00" y="114.75" width="3.88" height="3.88" fill="#454545"/><rect x="3.83" y="114.75" width="3.88" height="3.88" fill="#161616"/><rect x="7.65" y="114.75" width="3.88" height="3.88" fill="#2f2f2f"/><rect x="11.48" y="114.75" width="3.88" height="3.88" fill="#2e2e2e"/><rect x="15.30" y="114.75" width="3.88" height="3.88" fill="#2a2a2a"/><rect x="19.12" y="114.75" width="3.88" height="3.88" fill="#464646"/><rect x="22.95" y="114.75" width="3.88" height="3.88" fill="#333333"/><rect x="26.78" y="114.75" width="3.88" height="3.88" fill="#101010"/><rect x="30.60" y="114.75" width="3.88" height="3.88" fill="#131313"/><rect x="34.43" y="114.75" width="3.88" height="3.88" fill="#111111"/><rect x="38.25" y="114.75" width="3.88" height="3.88" fill="#1d1d1d"/><rect x="42.08" y="114.75" width="3.88" height="3.88" fill="#1c1c1c"/><rect x="45.90" y="114.75" width="3.88" height="3.88" fill="#2a2a2a"/><rect x="49.73" y="114.75" width="3.88" height="3.88" fill="#282828"/><rect x="53.55" y="114.75" width="3.88" height="3.88" fill="#252525"/><rect x="57.38" y="114.75" width="3.88" height="3.88" fill="#1b1b1b"/><rect x="61.20" y="114.75" width="3.88" height="3.88" fill="#1e1e1e"/><rect x="65.03" y="114.75" width="3.88" height="3.88" fill="#323232"/><rect x="68.85" y="114.75" width="3.88" height="3.88" fill="#ffffff"/><rect x="72.67" y="114.75" width="3.88" height="3.88" fill="#ffffff"/><rect x="76.50" y="114.75" width="3.88" height="3.88" fill="#3c3c3c"/><rect x="80.33" y="114.75" width="3.88" height="3.88" fill="#a0a0a0"/><rect x="84.15" y="114.75" width="3.88" height="3.88" fill="#343434"/><rect x="87.98" y="114.75" width="3.88" height="3.88" fill="#b4b4b4"/><rect x="91.80" y="114.75" width="3.88" height="3.88" fill="#c0c0c0"/><rect x="95.62" y="114.75" width="3.88" height="3.88" fill="#434343"/><rect x="99.45" y="114.75" width="3.88" height="3.88" fill="#555555"/><rect x="103.28" y="114.75" width="3.88" height="3.88" fill="#474747"/><rect x="107.10" y="114.75" width="3.88" height="3.88" fill="#6e6e6e"/><rect x="110.93" y="114.75" width="3.88" height="3.88" fill="#474747"/><rect x="114.75" y="114.75" width="3.88" height="3.88" fill="#292929"/><rect x="118.58" y="114.75" width="3.88" height="3.88" fill="#4f4f4f"/><rect x="122.40" y="114.75" width="3.88" height="3.88" fill="#353535"/><rect x="126.23" y="114.75" width="3.88" height="3.88" fill="#d6d6d6"/><rect x="130.05" y="114.75" width="3.88" height="3.88" fill="#a4a4a4"/><rect x="133.88" y="114.75" width="3.88" height="3.88" fill="#2b2b2b"/><rect x="137.70" y="114.75" width="3.88" height="3.88" fill="#323232"/><rect x="141.53" y="114.75" width="3.88" height="3.88" fill="#292929"/><rect x="145.35" y="114.75" width="3.88" height="3.88" fill="#565656"/><rect x="149.18" y="114.75" width="3.88" height="3.88" fill="#484848"/><rect x="0.00" y="118.58" width="3.88" height="3.88" fill="#313131"/><rect x="3.83" y="118.58" width="3.88" height="3.88" fill="#282828"/><rect x="7.65" y="118.58" width="3.88" height="3.88" fill="#2a2a2a"/><rect x="11.48" y="118.58" width="3.88" height="3.88" fill="#000000"/><rect x="15.30" y="118.58" width="3.88" height="3.88" fill="#383838"/><rect x="19.12" y="118.58" width="3.88" height="3.88" fill="#444444"/><rect x="22.95" y="118.58" width="3.88" height="3.88" fill="#0c0c0c"/><rect x="26.78" y="118.58" width="3.88" height="3.88" fill="#262626"/><rect x="30.60" y="118.58" width="3.88" height="3.88" fill="#2b2b2b"/><rect x="34.43" y="118.58" width="3.88" height="3.88" fill="#333333"/><rect x="38.25" y="118.58" width="3.88" height="3.88" fill="#151515"/><rect x="42.08" y="118.58" width="3.88" height="3.88" fill="#3a3a3a"/><rect x="45.90" y="118.58" width="3.88" height="3.88" fill="#222222"/><rect x="49.73" y="118.58" width="3.88" height="3.88" fill="#464646"/><rect x="53.55" y="118.58" width="3.88" height="3.88" fill="#222222"/><rect x="57.38" y="118.58" width="3.88" height="3.88" fill="#2e2e2e"/><rect x="61.20" y="118.58" width="3.88" height="3.88" fill="#1f1f1f"/><rect x="65.03" y="118.58" width="3.88" height="3.88" fill="#151515"/><rect x="68.85" y="118.58" width="3.88" height="3.88" fill="#ffffff"/><rect x="72.67" y="118.58" width="3.88" height="3.88" fill="#ffffff"/><rect x="76.50" y="118.58" width="3.88" height="3.88" fill="#5b5b5b"/><rect x="80.33" y="118.58" width="3.88" height="3.88" fill="#929292"/><rect x="84.15" y="118.58" width="3.88" height="3.88" fill="#343434"/><rect x="87.98" y="118.58" width="3.88" height="3.88" fill="#7c7c7c"/><rect x="91.80" y="118.58" width="3.88" height="3.88" fill="#959595"/><rect x="95.62" y="118.58" width="3.88" height="3.88" fill="#3c3c3c"/><rect x="99.45" y="118.58" width="3.88" height="3.88" fill="#3a3a3a"/><rect x="103.28" y="118.58" width="3.88" height="3.88" fill="#666666"/><rect x="107.10" y="118.58" width="3.88" height="3.88" fill="#626262"/><rect x="110.93" y="118.58" width="3.88" height="3.88" fill="#3f3f3f"/><rect x="114.75" y="118.58" width="3.88" height="3.88" fill="#464646"/><rect x="118.58" y="118.58" width="3.88" height="3.88" fill="#414141"/><rect x="122.40" y="118.58" width="3.88" height="3.88" fill="#474747"/><rect x="126.23" y="118.58" width="3.88" height="3.88" fill="#c9c9c9"/><rect x="130.05" y="118.58" width="3.88" height="3.88" fill="#cecece"/><rect x="133.88" y="118.58" width="3.88" height="3.88" fill="#232323"/><rect x="137.70" y="118.58" width="3.88" height="3.88" fill="#171717"/><rect x="141.53" y="118.58" width="3.88" height="3.88" fill="#424242"/><rect x="145.35" y="118.58" width="3.88" height="3.88" fill="#545454"/><rect x="149.18" y="118.58" width="3.88" height="3.88" fill="#656565"/><rect x="0.00" y="122.40" width="3.88" height="3.88" fill="#101010"/><rect x="3.83" y="122.40" width="3.88" height="3.88" fill="#232323"/><rect x="7.65" y="122.40" width="3.88" height="3.88" fill="#282828"/><rect x="11.48" y="122.40" width="3.88" height="3.88" fill="#131313"/><rect x="15.30" y="122.40" width="3.88" height="3.88" fill="#202020"/><rect x="19.12" y="122.40" width="3.88" height="3.88" fill="#4f4f4f"/><rect x="22.95" y="122.40" width="3.88" height="3.88" fill="#343434"/><rect x="26.78" y="122.40" width="3.88" height="3.88" fill="#3b3b3b"/><rect x="30.60" y="122.40" width="3.88" height="3.88" fill="#181818"/><rect x="34.43" y="122.40" width="3.88" height="3.88" fill="#111111"/><rect x="38.25" y="122.40" width="3.88" height="3.88" fill="#2c2c2c"/><rect x="42.08" y="122.40" width="3.88" height="3.88" fill="#323232"/><rect x="45.90" y="122.40" width="3.88" height="3.88" fill="#272727"/><rect x="49.73" y="122.40" width="3.88" height="3.88" fill="#121212"/><rect x="53.55" y="122.40" width="3.88" height="3.88" fill="#2f2f2f"/><rect x="57.38" y="122.40" width="3.88" height="3.88" fill="#303030"/><rect x="61.20" y="122.40" width="3.88" height="3.88" fill="#2c2c2c"/><rect x="65.03" y="122.40" width="3.88" height="3.88" fill="#1e1e1e"/><rect x="68.85" y="122.40" width="3.88" height="3.88" fill="#ffffff"/><rect x="72.67" y="122.40" width="3.88" height="3.88" fill="#ffffff"/><rect x="76.50" y="122.40" width="3.88" height="3.88" fill="#383838"/><rect x="80.33" y="122.40" width="3.88" height="3.88" fill="#585858"/><rect x="84.15" y="122.40" width="3.88" height="3.88" fill="#434343"/><rect x="87.98" y="122.40" width="3.88" height="3.88" fill="#b0b0b0"/><rect x="91.80" y="122.40" width="3.88" height="3.88" fill="#a5a5a5"/><rect x="95.62" y="122.40" width="3.88" height="3.88" fill="#565656"/><rect x="99.45" y="122.40" width="3.88" height="3.88" fill="#3e3e3e"/><rect x="103.28" y="122.40" width="3.88" height="3.88" fill="#5a5a5a"/><rect x="107.10" y="122.40" width="3.88" height="3.88" fill="#565656"/><rect x="110.93" y="122.40" width="3.88" height="3.88" fill="#4d4d4d"/><rect x="114.75" y="122.40" width="3.88" height="3.88" fill="#5e5e5e"/><rect x="118.58" y="122.40" width="3.88" height="3.88" fill="#3f3f3f"/><rect x="122.40" y="122.40" width="3.88" height="3.88" fill="#656565"/><rect x="126.23" y="122.40" width="3.88" height="3.88" fill="#dddddd"/><rect x="130.05" y="122.40" width="3.88" height="3.88" fill="#cacaca"/><rect x="133.88" y="122.40" width="3.88" height="3.88" fill="#363636"/><rect x="137.70" y="122.40" width="3.88" height="3.88" fill="#474747"/><rect x="141.53" y="122.40" width="3.88" height="3.88" fill="#2b2b2b"/><rect x="145.35" y="122.40" width="3.88" height="3.88" fill="#505050"/><rect x="149.18" y="122.40" width="3.88" height="3.88" fill="#3f3f3f"/><rect x="0.00" y="126.23" width="3.88" height="3.88" fill="#2e2e2e"/><rect x="3.83" y="126.23" width="3.88" height="3.88" fill="#3b3b3b"/><rect x="7.65" y="126.23" width="3.88" height="3.88" fill="#2f2f2f"/><rect x="11.48" y="126.23" width="3.88" height="3.88" fill="#2e2e2e"/><rect x="15.30" y="126.23" width="3.88" height="3.88" fill="#252525"/><rect x="19.12" y="126.23" width="3.88" height="3.88" fill="#464646"/><rect x="22.95" y="126.23" width="3.88" height="3.88" fill="#111111"/><rect x="26.78" y="126.23" width="3.88" height="3.88" fill="#333333"/><rect x="30.60" y="126.23" width="3.88" height="3.88" fill="#1f1f1f"/><rect x="34.43" y="126.23" width="3.88" height="3.88" fill="#151515"/><rect x="38.25" y="126.23" width="3.88" height="3.88" fill="#1a1a1a"/><rect x="42.08" y="126.23" width="3.88" height="3.88" fill="#191919"/><rect x="45.90" y="126.23" width="3.88" height="3.88" fill="#303030"/><rect x="49.73" y="126.23" width="3.88" height="3.88" fill="#333333"/><rect x="53.55" y="126.23" width="3.88" height="3.88" fill="#121212"/><rect x="57.38" y="126.23" width="3.88" height="3.88" fill="#313131"/><rect x="61.20" y="126.23" width="3.88" height="3.88" fill="#313131"/><rect x="65.03" y="126.23" width="3.88" height="3.88" fill="#1c1c1c"/><rect x="68.85" y="126.23" width="3.88" height="3.88" fill="#d0d0d0"/><rect x="72.67" y="126.23" width="3.88" height="3.88" fill="#e7e7e7"/><rect x="76.50" y="126.23" width="3.88" height="3.88" fill="#373737"/><rect x="80.33" y="126.23" width="3.88" height="3.88" fill="#878787"/><rect x="84.15" y="126.23" width="3.88" height="3.88" fill="#383838"/><rect x="87.98" y="126.23" width="3.88" height="3.88" fill="#737373"/><rect x="91.80" y="126.23" width="3.88" height="3.88" fill="#aaaaaa"/><rect x="95.62" y="126.23" width="3.88" height="3.88" fill="#2e2e2e"/><rect x="99.45" y="126.23" width="3.88" height="3.88" fill="#575757"/><rect x="103.28" y="126.23" width="3.88" height="3.88" fill="#454545"/><rect x="107.10" y="126.23" width="3.88" height="3.88" fill="#4f4f4f"/><rect x="110.93" y="126.23" width="3.88" height="3.88" fill="#353535"/><rect x="114.75" y="126.23" width="3.88" height="3.88" fill="#3b3b3b"/><rect x="118.58" y="126.23" width="3.88" height="3.88" fill="#595959"/><rect x="122.40" y="126.23" width="3.88" height="3.88" fill="#525252"/><rect x="126.23" y="126.23" width="3.88" height="3.88" fill="#c5c5c5"/><rect x="130.05" y="126.23" width="3.88" height="3.88" fill="#bebebe"/><rect x="133.88" y="126.23" width="3.88" height="3.88" fill="#171717"/><rect x="137.70" y="126.23" width="3.88" height="3.88" fill="#262626"/><rect x="141.53" y="126.23" width="3.88" height="3.88" fill="#252525"/><rect x="145.35" y="126.23" width="3.88" height="3.88" fill="#404040"/><rect x="149.18" y="126.23" width="3.88" height="3.88" fill="#5a5a5a"/><rect x="0.00" y="130.05" width="3.88" height="3.88" fill="#1d1d1d"/><rect x="3.83" y="130.05" width="3.88" height="3.88" fill="#1d1d1d"/><rect x="7.65" y="130.05" width="3.88" height="3.88" fill="#191919"/><rect x="11.48" y="130.05" width="3.88" height="3.88" fill="#0a0a0a"/><rect x="15.30" y="130.05" width="3.88" height="3.88" fill="#303030"/><rect x="19.12" y="130.05" width="3.88" height="3.88" fill="#595959"/><rect x="22.95" y="130.05" width="3.88" height="3.88" fill="#272727"/><rect x="26.78" y="130.05" width="3.88" height="3.88" fill="#171717"/><rect x="30.60" y="130.05" width="3.88" height="3.88" fill="#000000"/><rect x="34.43" y="130.05" width="3.88" height="3.88" fill="#272727"/><rect x="38.25" y="130.05" width="3.88" height="3.88" fill="#353535"/><rect x="42.08" y="130.05" width="3.88" height="3.88" fill="#292929"/><rect x="45.90" y="130.05" width="3.88" height="3.88" fill="#313131"/><rect x="49.73" y="130.05" width="3.88" height="3.88" fill="#393939"/><rect x="53.55" y="130.05" width="3.88" height="3.88" fill="#343434"/><rect x="57.38" y="130.05" width="3.88" height="3.88" fill="#1e1e1e"/><rect x="61.20" y="130.05" width="3.88" height="3.88" fill="#333333"/><rect x="65.03" y="130.05" width="3.88" height="3.88" fill="#2f2f2f"/><rect x="68.85" y="130.05" width="3.88" height="3.88" fill="#cecece"/><rect x="72.67" y="130.05" width="3.88" height="3.88" fill="#f2f2f2"/><rect x="76.50" y="130.05" width="3.88" height="3.88" fill="#2a2a2a"/><rect x="80.33" y="130.05" width="3.88" height="3.88" fill="#7d7d7d"/><rect x="84.15" y="130.05" width="3.88" height="3.88" fill="#474747"/><rect x="87.98" y="130.05" width="3.88" height="3.88" fill="#8b8b8b"/><rect x="91.80" y="130.05" width="3.88" height="3.88" fill="#737373"/><rect x="95.62" y="130.05" width="3.88" height="3.88" fill="#5d5d5d"/><rect x="99.45" y="130.05" width="3.88" height="3.88" fill="#4e4e4e"/><rect x="103.28" y="130.05" width="3.88" height="3.88" fill="#777777"/><rect x="107.10" y="130.05" width="3.88" height="3.88" fill="#434343"/><rect x="110.93" y="130.05" width="3.88" height="3.88" fill="#555555"/><rect x="114.75" y="130.05" width="3.88" height="3.88" fill="#666666"/><rect x="118.58" y="130.05" width="3.88" height="3.88" fill="#646464"/><rect x="122.40" y="130.05" width="3.88" height="3.88" fill="#404040"/><rect x="126.23" y="130.05" width="3.88" height="3.88" fill="#bcbcbc"/><rect x="130.05" y="130.05" width="3.88" height="3.88" fill="#b2b2b2"/><rect x="133.88" y="130.05" width="3.88" height="3.88" fill="#3c3c3c"/><rect x="137.70" y="130.05" width="3.88" height="3.88" fill="#3d3d3d"/><rect x="141.53" y="130.05" width="3.88" height="3.88" fill="#2f2f2f"/><rect x="145.35" y="130.05" width="3.88" height="3.88" fill="#3a3a3a"/><rect x="149.18" y="130.05" width="3.88" height="3.88" fill="#5f5f5f"/><rect x="0.00" y="133.88" width="3.88" height="3.88" fill="#212121"/><rect x="3.83" y="133.88" width="3.88" height="3.88" fill="#303030"/><rect x="7.65" y="133.88" width="3.88" height="3.88" fill="#2b2b2b"/><rect x="11.48" y="133.88" width="3.88" height="3.88" fill="#3f3f3f"/><rect x="15.30" y="133.88" width="3.88" height="3.88" fill="#383838"/><rect x="19.12" y="133.88" width="3.88" height="3.88" fill="#3c3c3c"/><rect x="22.95" y="133.88" width="3.88" height="3.88" fill="#292929"/><rect x="26.78" y="133.88" width="3.88" height="3.88" fill="#3d3d3d"/><rect x="30.60" y="133.88" width="3.88" height="3.88" fill="#1d1d1d"/><rect x="34.43" y="133.88" width="3.88" height="3.88" fill="#2b2b2b"/><rect x="38.25" y="133.88" width="3.88" height="3.88" fill="#353535"/><rect x="42.08" y="133.88" width="3.88" height="3.88" fill="#363636"/><rect x="45.90" y="133.88" width="3.88" height="3.88" fill="#2c2c2c"/><rect x="49.73" y="133.88" width="3.88" height="3.88" fill="#121212"/><rect x="53.55" y="133.88" width="3.88" height="3.88" fill="#131313"/><rect x="57.38" y="133.88" width="3.88" height="3.88" fill="#282828"/><rect x="61.20" y="133.88" width="3.88" height="3.88" fill="#2a2a2a"/><rect x="65.03" y="133.88" width="3.88" height="3.88" fill="#484848"/><rect x="68.85" y="133.88" width="3.88" height="3.88" fill="#e3e3e3"/><rect x="72.67" y="133.88" width="3.88" height="3.88" fill="#ffffff"/><rect x="76.50" y="133.88" width="3.88" height="3.88" fill="#4e4e4e"/><rect x="80.33" y="133.88" width="3.88" height="3.88" fill="#5c5c5c"/><rect x="84.15" y="133.88" width="3.88" height="3.88" fill="#303030"/><rect x="87.98" y="133.88" width="3.88" height="3.88" fill="#a9a9a9"/><rect x="91.80" y="133.88" width="3.88" height="3.88" fill="#999999"/><rect x="95.62" y="133.88" width="3.88" height="3.88" fill="#454545"/><rect x="99.45" y="133.88" width="3.88" height="3.88" fill="#4f4f4f"/><rect x="103.28" y="133.88" width="3.88" height="3.88" fill="#4d4d4d"/><rect x="107.10" y="133.88" width="3.88" height="3.88" fill="#646464"/><rect x="110.93" y="133.88" width="3.88" height="3.88" fill="#393939"/><rect x="114.75" y="133.88" width="3.88" height="3.88" fill="#3b3b3b"/><rect x="118.58" y="133.88" width="3.88" height="3.88" fill="#4c4c4c"/><rect x="122.40" y="133.88" width="3.88" height="3.88" fill="#3a3a3a"/><rect x="126.23" y="133.88" width="3.88" height="3.88" fill="#bdbdbd"/><rect x="130.05" y="133.88" width="3.88" height="3.88" fill="#dedede"/><rect x="133.88" y="133.88" width="3.88" height="3.88" fill="#2e2e2e"/><rect x="137.70" y="133.88" width="3.88" height="3.88" fill="#2b2b2b"/><rect x="141.53" y="133.88" width="3.88" height="3.88" fill="#383838"/><rect x="145.35" y="133.88" width="3.88" height="3.88" fill="#4b4b4b"/><rect x="149.18" y="133.88" width="3.88" height="3.88" fill="#656565"/><rect x="0.00" y="137.70" width="3.88" height="3.88" fill="#151515"/><rect x="3.83" y="137.70" width="3.88" height="3.88" fill="#303030"/><rect x="7.65" y="137.70" width="3.88" height="3.88" fill="#202020"/><rect x="11.48" y="137.70" width="3.88" height="3.88" fill="#1c1c1c"/><rect x="15.30" y="137.70" width="3.88" height="3.88" fill="#414141"/><rect x="19.12" y="137.70" width="3.88" height="3.88" fill="#363636"/><rect x="22.95" y="137.70" width="3.88" height="3.88" fill="#3d3d3d"/><rect x="26.78" y="137.70" width="3.88" height="3.88" fill="#2e2e2e"/><rect x="30.60" y="137.70" width="3.88" height="3.88" fill="#393939"/><rect x="34.43" y="137.70" width="3.88" height="3.88" fill="#171717"/><rect x="38.25" y="137.70" width="3.88" height="3.88" fill="#353535"/><rect x="42.08" y="137.70" width="3.88" height="3.88" fill="#393939"/><rect x="45.90" y="137.70" width="3.88" height="3.88" fill="#232323"/><rect x="49.73" y="137.70" width="3.88" height="3.88" fill="#232323"/><rect x="53.55" y="137.70" width="3.88" height="3.88" fill="#474747"/><rect x="57.38" y="137.70" width="3.88" height="3.88" fill="#272727"/><rect x="61.20" y="137.70" width="3.88" height="3.88" fill="#1f1f1f"/><rect x="65.03" y="137.70" width="3.88" height="3.88" fill="#1c1c1c"/><rect x="68.85" y="137.70" width="3.88" height="3.88" fill="#ffffff"/><rect x="72.67" y="137.70" width="3.88" height="3.88" fill="#ffffff"/><rect x="76.50" y="137.70" width="3.88" height="3.88" fill="#444444"/><rect x="80.33" y="137.70" width="3.88" height="3.88" fill="#a4a4a4"/><rect x="84.15" y="137.70" width="3.88" height="3.88" fill="#383838"/><rect x="87.98" y="137.70" width="3.88" height="3.88" fill="#b0b0b0"/><rect x="91.80" y="137.70" width="3.88" height="3.88" fill="#c8c8c8"/><rect x="95.62" y="137.70" width="3.88" height="3.88" fill="#373737"/><rect x="99.45" y="137.70" width="3.88" height="3.88" fill="#595959"/><rect x="103.28" y="137.70" width="3.88" height="3.88" fill="#7d7d7d"/><rect x="107.10" y="137.70" width="3.88" height="3.88" fill="#434343"/><rect x="110.93" y="137.70" width="3.88" height="3.88" fill="#313131"/><rect x="114.75" y="137.70" width="3.88" height="3.88" fill="#323232"/><rect x="118.58" y="137.70" width="3.88" height="3.88" fill="#252525"/><rect x="122.40" y="137.70" width="3.88" height="3.88" fill="#4b4b4b"/><rect x="126.23" y="137.70" width="3.88" height="3.88" fill="#868686"/><rect x="130.05" y="137.70" width="3.88" height="3.88" fill="#c2c2c2"/><rect x="133.88" y="137.70" width="3.88" height="3.88" fill="#434343"/><rect x="137.70" y="137.70" width="3.88" height="3.88" fill="#161616"/><rect x="141.53" y="137.70" width="3.88" height="3.88" fill="#292929"/><rect x="145.35" y="137.70" width="3.88" height="3.88" fill="#303030"/><rect x="149.18" y="137.70" width="3.88" height="3.88" fill="#5f5f5f"/><rect x="0.00" y="141.53" width="3.88" height="3.88" fill="#1d1d1d"/><rect x="3.83" y="141.53" width="3.88" height="3.88" fill="#242424"/><rect x="7.65" y="141.53" width="3.88" height="3.88" fill="#282828"/><rect x="11.48" y="141.53" width="3.88" height="3.88" fill="#2f2f2f"/><rect x="15.30" y="141.53" width="3.88" height="3.88" fill="#232323"/><rect x="19.12" y="141.53" width="3.88" height="3.88" fill="#444444"/><rect x="22.95" y="141.53" width="3.88" height="3.88" fill="#1d1d1d"/><rect x="26.78" y="141.53" width="3.88" height="3.88" fill="#262626"/><rect x="30.60" y="141.53" width="3.88" height="3.88" fill="#141414"/><rect x="34.43" y="141.53" width="3.88" height="3.88" fill="#252525"/><rect x="38.25" y="141.53" width="3.88" height="3.88" fill="#0a0a0a"/><rect x="42.08" y="141.53" width="3.88" height="3.88" fill="#1e1e1e"/><rect x="45.90" y="141.53" width="3.88" height="3.88" fill="#3f3f3f"/><rect x="49.73" y="141.53" width="3.88" height="3.88" fill="#262626"/><rect x="53.55" y="141.53" width="3.88" height="3.88" fill="#131313"/><rect x="57.38" y="141.53" width="3.88" height="3.88" fill="#282828"/><rect x="61.20" y="141.53" width="3.88" height="3.88" fill="#171717"/><rect x="65.03" y="141.53" width="3.88" height="3.88" fill="#0d0d0d"/><rect x="68.85" y="141.53" width="3.88" height="3.88" fill="#e7e7e7"/><rect x="72.67" y="141.53" width="3.88" height="3.88" fill="#ffffff"/><rect x="76.50" y="141.53" width="3.88" height="3.88" fill="#484848"/><rect x="80.33" y="141.53" width="3.88" height="3.88" fill="#7d7d7d"/><rect x="84.15" y="141.53" width="3.88" height="3.88" fill="#2f2f2f"/><rect x="87.98" y="141.53" width="3.88" height="3.88" fill="#8a8a8a"/><rect x="91.80" y="141.53" width="3.88" height="3.88" fill="#c5c5c5"/><rect x="95.62" y="141.53" width="3.88" height="3.88" fill="#4c4c4c"/><rect x="99.45" y="141.53" width="3.88" height="3.88" fill="#383838"/><rect x="103.28" y="141.53" width="3.88" height="3.88" fill="#353535"/><rect x="107.10" y="141.53" width="3.88" height="3.88" fill="#424242"/><rect x="110.93" y="141.53" width="3.88" height="3.88" fill="#6c6c6c"/><rect x="114.75" y="141.53" width="3.88" height="3.88" fill="#313131"/><rect x="118.58" y="141.53" width="3.88" height="3.88" fill="#424242"/><rect x="122.40" y="141.53" width="3.88" height="3.88" fill="#474747"/><rect x="126.23" y="141.53" width="3.88" height="3.88" fill="#b1b1b1"/><rect x="130.05" y="141.53" width="3.88" height="3.88" fill="#aeaeae"/><rect x="133.88" y="141.53" width="3.88" height="3.88" fill="#191919"/><rect x="137.70" y="141.53" width="3.88" height="3.88" fill="#1e1e1e"/><rect x="141.53" y="141.53" width="3.88" height="3.88" fill="#464646"/><rect x="145.35" y="141.53" width="3.88" height="3.88" fill="#444444"/><rect x="149.18" y="141.53" width="3.88" height="3.88" fill="#606060"/><rect x="0.00" y="145.35" width="3.88" height="3.88" fill="#0f0f0f"/><rect x="3.83" y="145.35" width="3.88" height="3.88" fill="#242424"/><rect x="7.65" y="145.35" width="3.88" height="3.88" fill="#2b2b2b"/><rect x="11.48" y="145.35" width="3.88" height="3.88" fill="#363636"/><rect x="15.30" y="145.35" width="3.88" height="3.88" fill="#181818"/><rect x="19.12" y="145.35" width="3.88" height="3.88" fill="#4d4d4d"/><rect x="22.95" y="145.35" width="3.88" height="3.88" fill="#2a2a2a"/><rect x="26.78" y="145.35" width="3.88" height="3.88" fill="#1a1a1a"/><rect x="30.60" y="145.35" width="3.88" height="3.88" fill="#2b2b2b"/><rect x="34.43" y="145.35" width="3.88" height="3.88" fill="#181818"/><rect x="38.25" y="145.35" width="3.88" height="3.88" fill="#191919"/><rect x="42.08" y="145.35" width="3.88" height="3.88" fill="#242424"/><rect x="45.90" y="145.35" width="3.88" height="3.88" fill="#000000"/><rect x="49.73" y="145.35" width="3.88" height="3.88" fill="#232323"/><rect x="53.55" y="145.35" width="3.88" height="3.88" fill="#171717"/><rect x="57.38" y="145.35" width="3.88" height="3.88" fill="#101010"/><rect x="61.20" y="145.35" width="3.88" height="3.88" fill="#1f1f1f"/><rect x="65.03" y="145.35" width="3.88" height="3.88" fill="#2f2f2f"/><rect x="68.85" y="145.35" width="3.88" height="3.88" fill="#f2f2f2"/><rect x="72.67" y="145.35" width="3.88" height="3.88" fill="#ffffff"/><rect x="76.50" y="145.35" width="3.88" height="3.88" fill="#2f2f2f"/><rect x="80.33" y="145.35" width="3.88" height="3.88" fill="#646464"/><rect x="84.15" y="145.35" width="3.88" height="3.88" fill="#565656"/><rect x="87.98" y="145.35" width="3.88" height="3.88" fill="#aeaeae"/><rect x="91.80" y="145.35" width="3.88" height="3.88" fill="#bbbbbb"/><rect x="95.62" y="145.35" width="3.88" height="3.88" fill="#3a3a3a"/><rect x="99.45" y="145.35" width="3.88" height="3.88" fill="#555555"/><rect x="103.28" y="145.35" width="3.88" height="3.88" fill="#606060"/><rect x="107.10" y="145.35" width="3.88" height="3.88" fill="#676767"/><rect x="110.93" y="145.35" width="3.88" height="3.88" fill="#444444"/><rect x="114.75" y="145.35" width="3.88" height="3.88" fill="#575757"/><rect x="118.58" y="145.35" width="3.88" height="3.88" fill="#393939"/><rect x="122.40" y="145.35" width="3.88" height="3.88" fill="#343434"/><rect x="126.23" y="145.35" width="3.88" height="3.88" fill="#909090"/><rect x="130.05" y="145.35" width="3.88" height="3.88" fill="#d3d3d3"/><rect x="133.88" y="145.35" width="3.88" height="3.88" fill="#232323"/><rect x="137.70" y="145.35" width="3.88" height="3.88" fill="#1e1e1e"/><rect x="141.53" y="145.35" width="3.88" height="3.88" fill="#202020"/><rect x="145.35" y="145.35" width="3.88" height="3.88" fill="#4a4a4a"/><rect x="149.18" y="145.35" width="3.88" height="3.88" fill="#3b3b3b"/><rect x="0.00" y="149.18" width="3.88" height="3.88" fill="#232323"/><rect x="3.83" y="149.18" width="3.88" height="3.88" fill="#1f1f1f"/><rect x="7.65" y="149.18" width="3.88" height="3.88" fill="#202020"/><rect x="11.48" y="149.18" width="3.88" height="3.88" fill="#1a1a1a"/><rect x="15.30" y="149.18" width="3.88" height="3.88" fill="#282828"/><rect x="19.12" y="149.18" width="3.88" height="3.88" fill="#3c3c3c"/><rect x="22.95" y="149.18" width="3.88" height="3.88" fill="#262626"/><rect x="26.78" y="149.18" width="3.88" height="3.88" fill="#282828"/><rect x="30.60" y="149.18" width="3.88" height="3.88" fill="#292929"/><rect x="34.43" y="149.18" width="3.88" height="3.88" fill="#060606"/><rect x="38.25" y="149.18" width="3.88" height="3.88" fill="#1d1d1d"/><rect x="42.08" y="149.18" width="3.88" height="3.88" fill="#191919"/><rect x="45.90" y="149.18" width="3.88" height="3.88" fill="#2f2f2f"/><rect x="49.73" y="149.18" width="3.88" height="3.88" fill="#0e0e0e"/><rect x="53.55" y="149.18" width="3.88" height="3.88" fill="#1b1b1b"/><rect x="57.38" y="149.18" width="3.88" height="3.88" fill="#202020"/><rect x="61.20" y="149.18" width="3.88" height="3.88" fill="#202020"/><rect x="65.03" y="149.18" width="3.88" height="3.88" fill="#323232"/><rect x="68.85" y="149.18" width="3.88" height="3.88" fill="#f1f1f1"/><rect x="72.67" y="149.18" width="3.88" height="3.88" fill="#ffffff"/><rect x="76.50" y="149.18" width="3.88" height="3.88" fill="#2a2a2a"/><rect x="80.33" y="149.18" width="3.88" height="3.88" fill="#595959"/><rect x="84.15" y="149.18" width="3.88" height="3.88" fill="#515151"/><rect x="87.98" y="149.18" width="3.88" height="3.88" fill="#afafaf"/><rect x="91.80" y="149.18" width="3.88" height="3.88" fill="#b0b0b0"/><rect x="95.62" y="149.18" width="3.88" height="3.88" fill="#4a4a4a"/><rect x="99.45" y="149.18" width="3.88" height="3.88" fill="#505050"/><rect x="103.28" y="149.18" width="3.88" height="3.88" fill="#454545"/><rect x="107.10" y="149.18" width="3.88" height="3.88" fill="#6d6d6d"/><rect x="110.93" y="149.18" width="3.88" height="3.88" fill="#3b3b3b"/><rect x="114.75" y="149.18" width="3.88" height="3.88" fill="#545454"/><rect x="118.58" y="149.18" width="3.88" height="3.88" fill="#454545"/><rect x="122.40" y="149.18" width="3.88" height="3.88" fill="#232323"/><rect x="126.23" y="149.18" width="3.88" height="3.88" fill="#959595"/><rect x="130.05" y="149.18" width="3.88" height="3.88" fill="#d2d2d2"/><rect x="133.88" y="149.18" width="3.88" height="3.88" fill="#2b2b2b"/><rect x="137.70" y="149.18" width="3.88" height="3.88" fill="#282828"/><rect x="141.53" y="149.18" width="3.88" height="3.88" fill="#313131"/><rect x="145.35" y="149.18" width="3.88" height="3.88" fill="#4a4a4a"/><rect x="149.18" y="149.18" width="3.88" height="3.88" fill="#484848"/><rect x="69" y="0" width="9" height="153" fill="#fff"/><rect x="70" y="1" width="3" height="35" fill="#0000ff"/><rect x="73" y="1" width="3" height="35" fill="#ff0000"/><rect x="70" y="124" width="3" height="29" fill="#0000ff"/><rect x="73" y="124" width="3" height="29" fill="#ff0000"/><rect x="1" y="76" width="30" height="3" fill="#0000ff"/><rect x="1" y="79" width="30" height="3" fill="#ff0000"/><rect x="118" y="76" width="35" height="3" fill="#0000ff"/><rect x="118" y="79" width="35" height="3" fill="#ff0000"/></svg>
<div style="left:214px;top:380px;width:161px;height:24px;background:linear-gradient(#eceef5,#dcdfea 60%,#dfe2ec);"></div>
<div style="left:214px;top:379px;width:161px;height:1px;background:#fff;"></div>
<div style="left:358px;top:382px;width:1px;height:21px;background:#b9bdd8;"></div>
<div style="left:359px;top:382px;width:1px;height:21px;background:#f6f7fb;"></div>
<div style="left:396px;top:85px;width:414px;height:334px;background:#292d56;border-radius:5px 5px 1px 1px;"></div>
<div style="left:396px;top:85px;width:414px;height:28px;border-radius:5px 5px 0 0;background:linear-gradient(#2a2f5c 0,#454c7d 5%,#3d4374 17%,#31365f 30%,#2b2f5a 45%,#282c56 100%);"></div>
<div style="left:808px;top:95px;width:1px;height:322px;background:#474d80;"></div>
<div style="left:398px;top:417px;width:410px;height:1px;background:#474d80;"></div>
<div style="left:397px;top:95px;width:1px;height:322px;background:#3a3f70;"></div>
<div style="left:403px;top:113px;width:400px;height:300px;background:#e8ebf1;"></div>
<svg style="left:401px;top:90px;" width="18" height="18" viewBox="0 0 18 18"><circle cx="9" cy="9" r="6.5" fill="#c8c8c8" stroke="#111" stroke-width="1.2" stroke-dasharray="2 1.6"/><circle cx="9" cy="9" r="7.6" fill="none" stroke="#111" stroke-width="1.4" stroke-dasharray="1.5 2.5"/><rect x="5.5" y="5" width="6" height="6" fill="#e8e8e8" stroke="#111" stroke-width="0.9"/><path d="M8.5 6.2 V9.8 M6.7 8 H10.3" stroke="#111" stroke-width="1"/></svg>
<span style="left:422px;top:93.69px;font-size:11px;color:#5a5e88;font-weight:700;transform:scaleX(1.0646);">Heure de début :</span>
<span style="left:518px;top:93.69px;font-size:11px;color:#5a5e88;font-weight:700;transform:scaleX(1.1719);">11/03/2018 20:59:47</span>
<span style="left:655px;top:93.69px;font-size:11px;color:#5a5e88;font-weight:700;transform:scaleX(0.9936);">FWHM</span>
<div style="left:771px;top:100.4px;width:7.4px;height:2.6px;background:#585e8e;"></div>
<svg style="left:788.6px;top:93.4px;" width="10.6" height="10.6" viewBox="0 0 10.6 10.6"><path d="M1 1 L9.6 9.6 M9.6 1 L1 9.6" stroke="#585e8e" stroke-width="2.3" stroke-linecap="butt"/></svg>
<div style="left:403px;top:113px;width:400px;height:254px;background:#f6f7fb;"></div>
<div style="left:406px;top:116px;width:394px;height:250px;background:#fff;border:1px solid #000;box-sizing:border-box;"></div>
<svg style="left:407px;top:117px;" width="392" height="248" viewBox="407 117 392 248"><rect x="486" y="165" width="1" height="152" fill="#a2a2a2"/><rect x="517" y="165" width="1" height="152" fill="#a2a2a2"/><rect x="547" y="165" width="1" height="152" fill="#a2a2a2"/><rect x="578" y="165" width="1" height="152" fill="#a2a2a2"/><rect x="608" y="165" width="1" height="152" fill="#a2a2a2"/><rect x="639" y="165" width="1" height="152" fill="#a2a2a2"/><rect x="669" y="165" width="1" height="152" fill="#a2a2a2"/><rect x="700" y="165" width="1" height="152" fill="#a2a2a2"/><rect x="730" y="165" width="1" height="152" fill="#a2a2a2"/><rect x="455" y="169" width="296" height="1" fill="#a2a2a2"/><rect x="455" y="225" width="296" height="1" fill="#a2a2a2"/><rect x="455" y="280" width="296" height="1" fill="#a2a2a2"/><rect x="455.5" y="165.5" width="295" height="152" fill="none" stroke="#000" stroke-width="1"/><rect x="446" y="169" width="9" height="1" fill="#000"/><rect x="451" y="174" width="4" height="1" fill="#000"/><rect x="451" y="180" width="4" height="1" fill="#000"/><rect x="451" y="186" width="4" height="1" fill="#000"/><rect x="451" y="191" width="4" height="1" fill="#000"/><rect x="449" y="197" width="6" height="1" fill="#000"/><rect x="451" y="202" width="4" height="1" fill="#000"/><rect x="451" y="208" width="4" height="1" fill="#000"/><rect x="451" y="213" width="4" height="1" fill="#000"/><rect x="451" y="219" width="4" height="1" fill="#000"/><rect x="446" y="225" width="9" height="1" fill="#000"/><rect x="451" y="230" width="4" height="1" fill="#000"/><rect x="451" y="236" width="4" height="1" fill="#000"/><rect x="451" y="241" width="4" height="1" fill="#000"/><rect x="451" y="247" width="4" height="1" fill="#000"/><rect x="449" y="253" width="6" height="1" fill="#000"/><rect x="451" y="258" width="4" height="1" fill="#000"/><rect x="451" y="264" width="4" height="1" fill="#000"/><rect x="451" y="269" width="4" height="1" fill="#000"/><rect x="451" y="275" width="4" height="1" fill="#000"/><rect x="446" y="280" width="9" height="1" fill="#000"/><rect x="451" y="286" width="4" height="1" fill="#000"/><rect x="451" y="292" width="4" height="1" fill="#000"/><rect x="451" y="297" width="4" height="1" fill="#000"/><rect x="451" y="303" width="4" height="1" fill="#000"/><rect x="449" y="308" width="6" height="1" fill="#000"/><rect x="451" y="314" width="4" height="1" fill="#000"/><rect x="456" y="317" width="1" height="9" fill="#000"/><rect x="459" y="317" width="1" height="4" fill="#000"/><rect x="462" y="317" width="1" height="4" fill="#000"/><rect x="465" y="317" width="1" height="4" fill="#000"/><rect x="468" y="317" width="1" height="4" fill="#000"/><rect x="471" y="317" width="1" height="6" fill="#000"/><rect x="474" y="317" width="1" height="4" fill="#000"/><rect x="477" y="317" width="1" height="4" fill="#000"/><rect x="480" y="317" width="1" height="4" fill="#000"/><rect x="483" y="317" width="1" height="4" fill="#000"/><rect x="486" y="317" width="1" height="9" fill="#000"/><rect x="489" y="317" width="1" height="4" fill="#000"/><rect x="493" y="317" width="1" height="4" fill="#000"/><rect x="496" y="317" width="1" height="4" fill="#000"/><rect x="499" y="317" width="1" height="4" fill="#000"/><rect x="502" y="317" width="1" height="6" fill="#000"/><rect x="505" y="317" width="1" height="4" fill="#000"/><rect x="508" y="317" width="1" height="4" fill="#000"/><rect x="511" y="317" width="1" height="4" fill="#000"/><rect x="514" y="317" width="1" height="4" fill="#000"/><rect x="517" y="317" width="1" height="9" fill="#000"/><rect x="520" y="317" width="1" height="4" fill="#000"/><rect x="523" y="317" width="1" height="4" fill="#000"/><rect x="526" y="317" width="1" height="4" fill="#000"/><rect x="529" y="317" width="1" height="4" fill="#000"/><rect x="532" y="317" width="1" height="6" fill="#000"/><rect x="535" y="317" width="1" height="4" fill="#000"/><rect x="538" y="317" width="1" height="4" fill="#000"/><rect x="541" y="317" width="1" height="4" fill="#000"/><rect x="544" y="317" width="1" height="4" fill="#000"/><rect x="547" y="317" width="1" height="9" fill="#000"/><rect x="550" y="317" width="1" height="4" fill="#000"/><rect x="554" y="317" width="1" height="4" fill="#000"/><rect x="557" y="317" width="1" height="4" fill="#000"/><rect x="560" y="317" width="1" height="4" fill="#000"/><rect x="563" y="317" width="1" height="6" fill="#000"/><rect x="566" y="317" width="1" height="4" fill="#000"/><rect x="569" y="317" width="1" height="4" fill="#000"/><rect x="572" y="317" width="1" height="4" fill="#000"/><rect x="575" y="317" width="1" height="4" fill="#000"/><rect x="578" y="317" width="1" height="9" fill="#000"/><rect x="581" y="317" width="1" height="4" fill="#000"/><rect x="584" y="317" width="1" height="4" fill="#000"/><rect x="587" y="317" width="1" height="4" fill="#000"/><rect x="590" y="317" width="1" height="4" fill="#000"/><rect x="593" y="317" width="1" height="6" fill="#000"/><rect x="596" y="317" width="1" height="4" fill="#000"/><rect x="599" y="317" width="1" height="4" fill="#000"/><rect x="602" y="317" width="1" height="4" fill="#000"/><rect x="605" y="317" width="1" height="4" fill="#000"/><rect x="608" y="317" width="1" height="9" fill="#000"/><rect x="611" y="317" width="1" height="4" fill="#000"/><rect x="615" y="317" width="1" height="4" fill="#000"/><rect x="618" y="317" width="1" height="4" fill="#000"/><rect x="621" y="317" width="1" height="4" fill="#000"/><rect x="624" y="317" width="1" height="6" fill="#000"/><rect x="627" y="317" width="1" height="4" fill="#000"/><rect x="630" y="317" width="1" height="4" fill="#000"/><rect x="633" y="317" width="1" height="4" fill="#000"/><rect x="636" y="317" width="1" height="4" fill="#000"/><rect x="639" y="317" width="1" height="9" fill="#000"/><rect x="642" y="317" width="1" height="4" fill="#000"/><rect x="645" y="317" width="1" height="4" fill="#000"/><rect x="648" y="317" width="1" height="4" fill="#000"/><rect x="651" y="317" width="1" height="4" fill="#000"/><rect x="654" y="317" width="1" height="6" fill="#000"/><rect x="657" y="317" width="1" height="4" fill="#000"/><rect x="660" y="317" width="1" height="4" fill="#000"/><rect x="663" y="317" width="1" height="4" fill="#000"/><rect x="666" y="317" width="1" height="4" fill="#000"/><rect x="669" y="317" width="1" height="9" fill="#000"/><rect x="672" y="317" width="1" height="4" fill="#000"/><rect x="676" y="317" width="1" height="4" fill="#000"/><rect x="679" y="317" width="1" height="4" fill="#000"/><rect x="682" y="317" width="1" height="4" fill="#000"/><rect x="685" y="317" width="1" height="6" fill="#000"/><rect x="688" y="317" width="1" height="4" fill="#000"/><rect x="691" y="317" width="1" height="4" fill="#000"/><rect x="694" y="317" width="1" height="4" fill="#000"/><rect x="697" y="317" width="1" height="4" fill="#000"/><rect x="700" y="317" width="1" height="9" fill="#000"/><rect x="703" y="317" width="1" height="4" fill="#000"/><rect x="706" y="317" width="1" height="4" fill="#000"/><rect x="709" y="317" width="1" height="4" fill="#000"/><rect x="712" y="317" width="1" height="4" fill="#000"/><rect x="715" y="317" width="1" height="6" fill="#000"/><rect x="718" y="317" width="1" height="4" fill="#000"/><rect x="721" y="317" width="1" height="4" fill="#000"/><rect x="724" y="317" width="1" height="4" fill="#000"/><rect x="727" y="317" width="1" height="4" fill="#000"/><rect x="730" y="317" width="1" height="9" fill="#000"/><rect x="733" y="317" width="1" height="4" fill="#000"/><rect x="737" y="317" width="1" height="4" fill="#000"/><rect x="740" y="317" width="1" height="4" fill="#000"/><rect x="743" y="317" width="1" height="4" fill="#000"/><rect x="746" y="317" width="1" height="6" fill="#000"/><rect x="749" y="317" width="1" height="4" fill="#000"/><polyline points="455.3,246.3 464.6,283.3 473.5,292.2 482.4,232.2 491.3,273.3 500.6,232.2 509.5,253.5 518.4,248.3 527.3,219.5 535.6,261.3 544.1,298.4 553.4,270.3 562.3,218.5 571.2,260.3 580.2,190.4 589.4,234.3 598.3,249.3 607.2,317.6 616.2,165.3 625.4,268.2 634.3,295.3 643.3,286.4 652.2,268.2 661.4,234.3 670.3,267.5 678.6,237.3 687.5,224.3 696.4,253.1 705.3,253.1 714.2,254.1 723.5,275.4 732.4,247.3 741.3,283.3 750.6,266.5" fill="none" stroke="#000" stroke-width="1"/><circle cx="455.3" cy="246.3" r="3.2" fill="none" stroke="#000" stroke-width="0.9"/><circle cx="464.6" cy="283.3" r="3.2" fill="none" stroke="#000" stroke-width="0.9"/><circle cx="473.5" cy="292.2" r="3.2" fill="none" stroke="#000" stroke-width="0.9"/><circle cx="482.4" cy="232.2" r="3.2" fill="none" stroke="#000" stroke-width="0.9"/><circle cx="491.3" cy="273.3" r="3.2" fill="none" stroke="#000" stroke-width="0.9"/><circle cx="500.6" cy="232.2" r="3.2" fill="none" stroke="#000" stroke-width="0.9"/><circle cx="509.5" cy="253.5" r="3.2" fill="none" stroke="#000" stroke-width="0.9"/><circle cx="518.4" cy="248.3" r="3.2" fill="none" stroke="#000" stroke-width="0.9"/><circle cx="527.3" cy="219.5" r="3.2" fill="none" stroke="#000" stroke-width="0.9"/><circle cx="535.6" cy="261.3" r="3.2" fill="none" stroke="#000" stroke-width="0.9"/><circle cx="544.1" cy="298.4" r="3.2" fill="none" stroke="#000" stroke-width="0.9"/><circle cx="553.4" cy="270.3" r="3.2" fill="none" stroke="#000" stroke-width="0.9"/><circle cx="562.3" cy="218.5" r="3.2" fill="none" stroke="#000" stroke-width="0.9"/><circle cx="571.2" cy="260.3" r="3.2" fill="none" stroke="#000" stroke-width="0.9"/><circle cx="580.2" cy="190.4" r="3.2" fill="none" stroke="#000" stroke-width="0.9"/><circle cx="589.4" cy="234.3" r="3.2" fill="none" stroke="#000" stroke-width="0.9"/><circle cx="598.3" cy="249.3" r="3.2" fill="none" stroke="#000" stroke-width="0.9"/><circle cx="607.2" cy="317.6" r="3.2" fill="none" stroke="#000" stroke-width="0.9"/><circle cx="616.2" cy="165.3" r="3.2" fill="none" stroke="#000" stroke-width="0.9"/><circle cx="625.4" cy="268.2" r="3.2" fill="none" stroke="#000" stroke-width="0.9"/><circle cx="634.3" cy="295.3" r="3.2" fill="none" stroke="#000" stroke-width="0.9"/><circle cx="643.3" cy="286.4" r="3.2" fill="none" stroke="#000" stroke-width="0.9"/><circle cx="652.2" cy="268.2" r="3.2" fill="none" stroke="#000" stroke-width="0.9"/><circle cx="661.4" cy="234.3" r="3.2" fill="none" stroke="#000" stroke-width="0.9"/><circle cx="670.3" cy="267.5" r="3.2" fill="none" stroke="#000" stroke-width="0.9"/><circle cx="678.6" cy="237.3" r="3.2" fill="none" stroke="#000" stroke-width="0.9"/><circle cx="687.5" cy="224.3" r="3.2" fill="none" stroke="#000" stroke-width="0.9"/><circle cx="696.4" cy="253.1" r="3.2" fill="none" stroke="#000" stroke-width="0.9"/><circle cx="705.3" cy="253.1" r="3.2" fill="none" stroke="#000" stroke-width="0.9"/><circle cx="714.2" cy="254.1" r="3.2" fill="none" stroke="#000" stroke-width="0.9"/><circle cx="723.5" cy="275.4" r="3.2" fill="none" stroke="#000" stroke-width="0.9"/><circle cx="732.4" cy="247.3" r="3.2" fill="none" stroke="#000" stroke-width="0.9"/><circle cx="741.3" cy="283.3" r="3.2" fill="none" stroke="#000" stroke-width="0.9"/><circle cx="750.6" cy="266.5" r="3.2" fill="none" stroke="#000" stroke-width="0.9"/></svg>
<span style="left:455px;top:141.69px;font-size:11px;color:#000;transform:scaleX(0.9831);">Heure de début : 11/03/2018 20:59:47</span>
<span style="left:655.5px;top:141.69px;font-size:11px;color:#000;transform:scaleX(0.8913);">FWHM</span>
<span style="left:426px;top:164.69px;font-size:11px;color:#000;transform:scaleX(0.9152);">2.3</span>
<span style="left:426px;top:220.19px;font-size:11px;color:#000;transform:scaleX(0.9152);">2.2</span>
<span style="left:426px;top:275.69px;font-size:11px;color:#000;transform:scaleX(0.9152);">2.1</span>
<span style="left:453.4px;top:332.19px;font-size:11px;color:#000;transform:scaleX(0.9796);">0</span>
<span style="left:480.65px;top:332.19px;font-size:11px;color:#000;transform:scaleX(1.0204);">10</span>
<span style="left:511.15px;top:332.19px;font-size:11px;color:#000;transform:scaleX(1.0204);">20</span>
<span style="left:541.65px;top:332.19px;font-size:11px;color:#000;transform:scaleX(1.0204);">30</span>
<span style="left:572.15px;top:332.19px;font-size:11px;color:#000;transform:scaleX(1.0204);">40</span>
<span style="left:602.65px;top:332.19px;font-size:11px;color:#000;transform:scaleX(1.0204);">50</span>
<span style="left:633.15px;top:332.19px;font-size:11px;color:#000;transform:scaleX(1.0204);">60</span>
<span style="left:663.65px;top:332.19px;font-size:11px;color:#000;transform:scaleX(1.0204);">70</span>
<span style="left:694.15px;top:332.19px;font-size:11px;color:#000;transform:scaleX(1.0204);">80</span>
<span style="left:724.65px;top:332.19px;font-size:11px;color:#000;transform:scaleX(1.0204);">90</span>
<span style="left:578px;top:348.69px;font-size:11px;color:#000;transform:scaleX(1.0013);">Secondes</span>
<span style="left:765px;top:213.09px;font-size:11px;color:#000;transform:scaleX(0.9532);">P</span>
<span style="left:765px;top:222.94px;font-size:11px;color:#000;transform:scaleX(0.8968);">i</span>
<span style="left:765px;top:232.79px;font-size:11px;color:#000;transform:scaleX(1.0000);">x</span>
<span style="left:765px;top:242.64px;font-size:11px;color:#000;transform:scaleX(0.9796);">e</span>
<span style="left:765px;top:252.49px;font-size:11px;color:#000;transform:scaleX(0.8968);">l</span>
<span style="left:765px;top:262.34px;font-size:11px;color:#000;transform:scaleX(1.0000);">s</span>
<div style="left:404px;top:372px;width:73px;height:22px;box-sizing:border-box;border:1px solid #cf9079;border-radius:5px;background:linear-gradient(#fba27c,#f8946a 50%,#f38a5e);box-shadow:0 0 0 1px #f0e0dc;"></div>
<span style="left:418px;top:377.42px;font-size:12.5px;color:#000;transform:scaleX(0.8518);">Réglages</span>
<div style="left:403px;top:394px;width:400px;height:19px;background:linear-gradient(#f4f5fa,#e2e4ee 55%,#e6e8f1);"></div>
<span style="left:404px;top:399.42px;font-size:12.5px;color:#000;transform:scaleX(0.8443);">395x252</span>
<div style="left:553px;top:397px;width:1px;height:15px;background:#c3c6dc;"></div>
<div style="left:554px;top:397px;width:1px;height:15px;background:#f9f9fc;"></div>
<svg style="left:789px;top:400px;" width="10" height="10.5" viewBox="0 0 10 10.5"><path d="M9.4 1.2 L9.4 10 L0.8 10Z" fill="#4e5488"/></svg>
<div style="left:4px;top:664px;width:160px;height:27px;background:linear-gradient(#454c7c 0,#363c6c 35%,#2b305c 55%,#282c56);border-radius:6px 0 0 0;"></div>
<svg style="left:9.5px;top:670.6px;" width="16" height="14" viewBox="0 0 16 14"><defs><linearGradient id="pg10170" x1="0" y1="0" x2="0" y2="1"><stop offset="0" stop-color="#a00000"/><stop offset="0.14" stop-color="#ff6000"/><stop offset="0.3" stop-color="#f0e800"/><stop offset="0.5" stop-color="#10d020"/><stop offset="0.66" stop-color="#00b8e8"/><stop offset="0.78" stop-color="#1030a0"/><stop offset="0.88" stop-color="#08083c"/><stop offset="1" stop-color="#04042c"/></linearGradient></defs><path d="M6.3 1 L9.9 1 L15 10.6 L13.6 12.8 L2.6 12.8 L1.2 10.6 Z" fill="none" stroke="url(#pg10170)" stroke-width="1.7" stroke-linejoin="round"/></svg>
<span style="left:30.3px;top:672.69px;font-size:11px;color:#5a5e88;font-weight:700;transform:scaleX(1.0044);">Le ciel</span>
<span style="left:68px;top:672.69px;font-size:11px;color:#5a5e88;font-weight:700;transform:scaleX(1.0795);">EQ.2000-1-1,</span>
<span style="left:143.4px;top:672.69px;font-size:11px;color:#5a5e88;font-weight:700;transform:scaleX(1.2443);">Zoo</span>
<div style="left:164px;top:664px;width:6px;height:27px;background:#e8ebf1;"></div>
<div style="left:336px;top:423px;width:499px;height:277px;background:#292d56;border-radius:2px 2px 0 0;"></div>
<div style="left:341px;top:443px;width:489px;height:252px;background:#e8ebf1;"></div>
<span style="left:345.6px;top:427.69px;font-size:11px;color:#5a5e88;font-weight:700;transform:scaleX(1.0121);">ARTEMIS</span>
<span style="left:399.7px;top:427.69px;font-size:11px;color:#5a5e88;font-weight:700;transform:scaleX(0.8556);">CCD</span>
<span style="left:424.1px;top:427.69px;font-size:11px;color:#5a5e88;font-weight:700;transform:scaleX(1.1284);">ATIK-460ex</span>
<svg style="left:815.5px;top:428px;" width="10" height="10" viewBox="0 0 10 10"><path d="M1 1 L9 9 M9 1 L1 9" stroke="#bcc0dc" stroke-width="2.3" stroke-linecap="butt"/></svg>
<div style="left:357px;top:443px;width:455px;height:133px;background:#000;"></div>
<svg style="left:357px;top:443px;shape-rendering:crispEdges;" width="455" height="133" viewBox="357 443 455 133"><path d="M510 530.0V576h1V530.0zM511 557.0V576h1V557.0zM513 513.0V576h1V513.0zM514 530.0V576h1V530.0zM515 504.0V576h1V504.0zM516 494.0V576h1V494.0zM517 497.0V576h1V497.0zM518 481.0V576h1V481.0zM519 482.0V576h1V482.0zM520 463.0V576h1V463.0zM521 479.0V576h1V479.0zM522 466.0V576h1V466.0zM523 462.0V576h1V462.0zM524 461.0V576h1V461.0zM525 467.0V576h1V467.0zM526 450.0V576h1V450.0zM527 463.0V576h1V463.0zM528 451.0V576h1V451.0zM529 452.0V576h1V452.0zM530 447.0V576h1V447.0zM531 448.0V576h1V448.0zM532 456.0V576h1V456.0zM533 455.0V576h1V455.0zM534 445.0V576h1V445.0zM535 452.0V576h1V452.0zM536 453.0V576h1V453.0zM537 454.0V576h1V454.0zM538 459.0V576h1V459.0zM539 461.0V576h1V461.0zM540 463.0V576h1V463.0zM541 466.0V576h1V466.0zM542 465.0V576h1V465.0zM543 471.0V576h1V471.0zM544 463.0V576h1V463.0zM545 470.0V576h1V470.0zM546 472.0V576h1V472.0zM547 470.0V576h1V470.0zM548 470.0V576h1V470.0zM549 473.0V576h1V473.0zM550 485.0V576h1V485.0zM551 465.0V576h1V465.0zM552 475.0V576h1V475.0zM553 485.0V576h1V485.0zM554 485.0V576h1V485.0zM555 480.0V576h1V480.0zM556 485.0V576h1V485.0zM557 488.0V576h1V488.0zM558 495.0V576h1V495.0zM559 487.0V576h1V487.0zM560 487.0V576h1V487.0zM561 504.0V576h1V504.0zM562 486.0V576h1V486.0zM563 500.0V576h1V500.0zM564 497.0V576h1V497.0zM565 503.0V576h1V503.0zM566 499.0V576h1V499.0zM567 525.0V576h1V525.0zM568 509.0V576h1V509.0zM569 525.0V576h1V525.0zM570 507.0V576h1V507.0zM571 525.0V576h1V525.0zM572 525.0V576h1V525.0zM573 545.0V576h1V545.0zM574 520.0V576h1V520.0zM575 557.0V576h1V557.0zM576 537.0V576h1V537.0zM577 525.0V576h1V525.0zM578 557.0V576h1V557.0zM580 557.0V576h1V557.0zM581 557.0V576h1V557.0zM582 557.0V576h1V557.0zM583 509.0V576h1V509.0zM585 537.0V576h1V537.0zM586 545.0V576h1V545.0zM587 537.0V576h1V537.0zM588 537.0V576h1V537.0zM589 530.0V576h1V530.0zM590 545.0V576h1V545.0zM591 525.0V576h1V525.0zM592 537.0V576h1V537.0zM593 537.0V576h1V537.0zM594 516.0V576h1V516.0zM595 525.0V576h1V525.0zM596 516.0V576h1V516.0zM597 545.0V576h1V545.0zM598 513.0V576h1V513.0zM599 520.0V576h1V520.0zM600 513.0V576h1V513.0zM601 513.0V576h1V513.0zM602 504.0V576h1V504.0zM603 545.0V576h1V545.0zM604 525.0V576h1V525.0zM605 530.0V576h1V530.0zM606 513.0V576h1V513.0zM607 525.0V576h1V525.0zM608 497.0V576h1V497.0zM609 525.0V576h1V525.0zM610 530.0V576h1V530.0zM611 520.0V576h1V520.0zM612 513.0V576h1V513.0zM613 516.0V576h1V516.0zM614 520.0V576h1V520.0zM615 507.0V576h1V507.0zM616 557.0V576h1V557.0zM617 516.0V576h1V516.0zM618 530.0V576h1V530.0zM619 530.0V576h1V530.0zM620 525.0V576h1V525.0zM621 525.0V576h1V525.0zM622 557.0V576h1V557.0zM623 530.0V576h1V530.0zM624 530.0V576h1V530.0zM625 530.0V576h1V530.0zM626 545.0V576h1V545.0zM627 557.0V576h1V557.0zM628 530.0V576h1V530.0zM629 557.0V576h1V557.0zM630 537.0V576h1V537.0zM631 557.0V576h1V557.0zM632 545.0V576h1V545.0zM633 537.0V576h1V537.0zM634 557.0V576h1V557.0zM637 557.0V576h1V557.0z" fill="#fff"/><path d="M509.5 443V576M660.5 443V576" stroke="#fff" stroke-width="1" stroke-dasharray="3 2"/></svg>
<div style="left:341px;top:576px;width:489px;height:50px;background:#f0f0f0;"></div>
<div style="left:352px;top:597px;width:466px;height:7px;box-sizing:border-box;background:#e4e8e8;border:1px solid #b4b6b6;border-bottom-color:#f8f8f8;border-right-color:#f8f8f8;"></div>
<div style="left:508px;top:597px;width:154px;height:8px;box-sizing:border-box;background:linear-gradient(#fff 0,#f6f6f6 30%,#dadada);border:1px solid #6c6c6c;border-top-color:#fcfcfc;"></div>
<svg style="left:502px;top:607px;" width="11" height="18" viewBox="0 0 11 18"><path d="M0.5 5 L5.5 0.5 L10.5 5 V16 Q10.5 17.5 9 17.5 H2 Q0.5 17.5 0.5 16Z" fill="#ececec" stroke="#8a8a8a"/><path d="M1.5 10 H9.5 V16.5 H1.5Z" fill="#d4d4d4"/></svg>
<svg style="left:658px;top:607px;" width="11" height="18" viewBox="0 0 11 18"><path d="M0.5 5 L5.5 0.5 L10.5 5 V16 Q10.5 17.5 9 17.5 H2 Q0.5 17.5 0.5 16Z" fill="#ececec" stroke="#8a8a8a"/><path d="M1.5 10 H9.5 V16.5 H1.5Z" fill="#d4d4d4"/></svg>
<div style="left:341px;top:643px;width:489px;height:1px;background:#f8f9fc;"></div>
<div style="left:341px;top:644px;width:489px;height:52px;background:#e6e9f0;"></div>
<div style="left:341px;top:644px;width:1px;height:52px;background:#fbfbfd;"></div>
<div style="left:341px;top:695px;width:489px;height:1px;background:#c4c7d6;"></div>
<span style="left:343px;top:651.42px;font-size:12.5px;color:#454a7a;transform:scaleX(0.8321);">Seuil Haut</span>
<span style="left:349px;top:673.92px;font-size:12.5px;color:#454a7a;transform:scaleX(0.7953);">Seuil Bas</span>
<div style="left:398px;top:649px;width:63px;height:19px;box-sizing:border-box;background:#fff;border:1px solid #b3b7d4;border-radius:2px;"></div>
<span style="left:401px;top:653.27px;font-size:11.5px;color:#000;transform:scaleX(0.8791);">1098</span>
<div style="left:398px;top:671px;width:63px;height:19px;box-sizing:border-box;background:#fff;border:1px solid #b3b7d4;border-radius:2px;"></div>
<span style="left:401px;top:675.27px;font-size:11.5px;color:#000;transform:scaleX(0.8860);">375</span>
<div style="left:465px;top:658px;width:49px;height:23px;background:linear-gradient(#e6e8f2,#d9dcea 42%,#d0d3e5 58%,#c6c9df);border:1px solid #8c92bc;box-shadow:inset 0 1px 0 #f4f5fa;box-sizing:border-box;border-radius:4px;"></div>
<span style="left:476.6px;top:664.54px;font-size:12px;color:#000;transform:scaleX(0.8485);">MAJ.</span>
<svg style="left:523px;top:663px;" width="16" height="15" viewBox="0 0 16 15"><rect width="16" height="15" fill="#fff"/><path d="M0 0 L16 15 H0Z" fill="#000"/></svg>
<div style="left:550px;top:653.5px;width:153px;height:35.2px;box-sizing:border-box;border:1px solid #b3b7d4;border-radius:4px;"></div>
<div style="left:558px;top:650px;width:43px;height:8px;background:#e6e9f0;"></div>
<span style="left:560px;top:647.04px;font-size:12px;color:#3c4190;transform:scaleX(0.9110);">Palettes</span>
<div style="left:552px;top:660px;width:22px;height:22px;box-sizing:border-box;background:linear-gradient(#d5d8ea,#c4c8e0);border:1px solid #8c92bc;border-radius:4px;"></div>
<div style="left:556px;top:663px;width:16px;height:15px;background:linear-gradient(#000,#333 30%,#aaa 75%,#eee);"></div>
<div style="left:578px;top:664px;width:15px;height:15px;background:linear-gradient(#100008,#50001c 30%,#703070 55%,#6080f0 78%,#d8a0b0);"></div>
<div style="left:600px;top:664px;width:15px;height:15px;background:linear-gradient(#300080,#2020e0 25%,#10c040 48%,#e8e800 68%,#ff8000 84%,#f00000);"></div>
<div style="left:622px;top:664px;width:15px;height:15px;background:linear-gradient(#000,#0040c0 22%,#10c0a0 38%,#a0e000 52%,#ffc000 66%,#f03020 84%,#f8c0c0);"></div>
<div style="left:644px;top:662px;width:51px;height:19px;background:linear-gradient(#e6e8f2,#d9dcea 42%,#d0d3e5 58%,#c6c9df);border:1px solid #8c92bc;box-shadow:inset 0 1px 0 #f4f5fa;box-sizing:border-box;border-radius:4px;"></div>
<span style="left:656.5px;top:666.42px;font-size:12.5px;color:#000;transform:scaleX(0.8268);">Editer</span>
<div style="left:707px;top:658px;width:30px;height:27px;background:linear-gradient(#e6e8f2,#d9dcea 42%,#d0d3e5 58%,#c6c9df);border:1px solid #8c92bc;box-shadow:inset 0 1px 0 #f4f5fa;box-sizing:border-box;border-radius:4px;"></div>
<svg style="left:707px;top:658px;" width="30" height="27" viewBox="0 0 30 27"><path d="M6.6 20 L12 14" stroke="#c46008" stroke-width="3" stroke-linecap="round"/><path d="M6.6 20 L12 14" stroke="#f08a20" stroke-width="1.8" stroke-linecap="round"/><circle cx="16" cy="10.1" r="5.1" fill="#e4f0fc" stroke="#8fb0d4" stroke-width="1.2"/><circle cx="14.8" cy="8.8" r="2" fill="#fff" opacity="0.8"/><rect x="12.6" y="9" width="6.8" height="2.2" fill="#e83018"/></svg>
<div style="left:740px;top:658px;width:29px;height:27px;background:linear-gradient(#e6e8f2,#d9dcea 42%,#d0d3e5 58%,#c6c9df);border:1px solid #8c92bc;box-shadow:inset 0 1px 0 #f4f5fa;box-sizing:border-box;border-radius:4px;"></div>
<svg style="left:740px;top:658px;" width="30" height="27" viewBox="0 0 30 27"><path d="M6.6 20 L12 14" stroke="#c46008" stroke-width="3" stroke-linecap="round"/><path d="M6.6 20 L12 14" stroke="#f08a20" stroke-width="1.8" stroke-linecap="round"/><circle cx="16" cy="10.1" r="5.1" fill="#e4f0fc" stroke="#8fb0d4" stroke-width="1.2"/><circle cx="14.8" cy="8.8" r="2" fill="#fff" opacity="0.8"/><rect x="12.6" y="9" width="6.8" height="2.2" fill="#e83018"/><rect x="14.9" y="6.7" width="2.2" height="6.8" fill="#e83018"/></svg>
<div style="left:776px;top:650px;width:53px;height:41px;background:linear-gradient(#e6e8f2,#d9dcea 42%,#d0d3e5 58%,#c6c9df);border:1px solid #8c92bc;box-shadow:inset 0 1px 0 #f4f5fa;box-sizing:border-box;border-radius:5px;"></div>
<span style="left:792.8px;top:665.42px;font-size:12.5px;color:#000;transform:scaleX(0.7892);">Plus</span>
<div style="left:839px;top:85px;width:260px;height:460px;background:#292d56;border-radius:2px 2px 0 0;"></div>
<div style="left:844px;top:105px;width:250px;height:435px;background:#e8ebf1;"></div>
<span style="left:848px;top:89.69px;font-size:11px;color:#5a5e88;font-weight:700;transform:scaleX(1.0121);">ARTEMIS</span>
<span style="left:902.1px;top:89.69px;font-size:11px;color:#5a5e88;font-weight:700;transform:scaleX(0.8556);">CCD</span>
<span style="left:926.5px;top:89.69px;font-size:11px;color:#5a5e88;font-weight:700;transform:scaleX(1.1284);">ATIK-460ex</span>
<span style="left:1003px;top:89.69px;font-size:11px;color:#5a5e88;font-weight:700;transform:scaleX(1.2879);">-&gt;</span>
<span style="left:1023.5px;top:89.69px;font-size:11px;color:#5a5e88;font-weight:700;transform:scaleX(1.0810);">18.3°C</span>
<span style="left:1066px;top:89.69px;font-size:11px;color:#5a5e88;font-weight:700;transform:scaleX(0.9813);">...</span>
<svg style="left:1079.5px;top:90px;" width="10" height="10" viewBox="0 0 10 10"><path d="M1 1 L9 9 M9 1 L1 9" stroke="#bcc0dc" stroke-width="2.3" stroke-linecap="butt"/></svg>
<div style="left:844px;top:125px;width:249px;height:381px;box-sizing:border-box;border:1px solid #a9aecf;background:#e8ebf1;"></div>
<div style="left:846px;top:106px;width:144px;height:20px;box-sizing:border-box;background:linear-gradient(#fbfbfd,#e8ebf1 80%);border:1px solid #a9aecf;border-bottom:none;border-radius:4px 4px 0 0;"></div>
<span style="left:852px;top:109.42px;font-size:12.5px;color:#000;transform:scaleX(0.8585);">ARTEMIS CCD ATIK-460ex</span>
<div style="left:849px;top:130px;width:119px;height:38px;background:linear-gradient(#e6e8f2,#d9dcea 42%,#d0d3e5 58%,#c6c9df);border:1px solid #8c92bc;box-shadow:inset 0 1px 0 #f4f5fa;box-sizing:border-box;border-radius:4px;"></div>
<span style="left:878.5px;top:144.42px;font-size:12.5px;color:#000;transform:scaleX(0.8596);">DEMARRER</span>
<div style="left:971px;top:130px;width:119px;height:38px;background:linear-gradient(#eceef6,#e2e4f0 50%,#dee0ed);border:1px solid #bcc0da;box-sizing:border-box;border-radius:4px;"></div>
<span style="left:996px;top:144.42px;font-size:12.5px;color:#9c9ca4;transform:scaleX(0.7708);">ABANDONNER</span>
<span style="left:853px;top:174.42px;font-size:12.5px;color:#3c416e;transform:scaleX(0.8313);">Temps:</span>
<div style="left:856px;top:199px;width:226px;height:1px;background:#a9aecf;"></div>
<div style="left:856px;top:200px;width:226px;height:1px;background:#fafbfd;"></div>
<span style="left:853px;top:208.42px;font-size:12.5px;color:#3c416e;transform:scaleX(0.8144);">Exp.(sec)</span>
<div style="left:901px;top:205px;width:63px;height:19px;box-sizing:border-box;background:#fff;border:1px solid #a9aecf;border-radius:2px;"></div>
<div style="left:948px;top:206px;width:15px;height:17px;background:linear-gradient(#eceef6,#d4d7e8);border-radius:0 2px 2px 0;"></div>
<svg style="left:948px;top:205px;" width="15" height="19" viewBox="0 0 15 19"><path d="M4 7.7 L7.5 4.1 L11 7.7Z M4 11.3 L7.5 14.9 L11 11.3Z" fill="#7a86b6"/></svg>
<span style="left:903.8px;top:208.92px;font-size:12.5px;color:#000;transform:scaleX(0.5753);">1</span>
<span style="left:971px;top:205.42px;font-size:12.5px;color:#000;transform:scaleX(0.8633);">Bouclage</span>
<div style="left:1047px;top:203px;width:14px;height:14px;box-sizing:border-box;background:#fff;border:1px solid #b3b7d4;border-radius:3px;"></div>
<div style="left:1069px;top:204px;width:18px;height:17px;box-sizing:border-box;background:linear-gradient(#eceef6,#d6d9ea);border:1px solid #a9aecf;border-radius:3px;"></div>
<svg style="left:1069px;top:204px;" width="18" height="17" viewBox="0 0 18 17"><path d="M5 4.5 L13 12.5 M13 4.5 L5 12.5" stroke="#9ca0b8" stroke-width="1"/></svg>
<span style="left:971px;top:223.92px;font-size:12.5px;color:#000;transform:scaleX(0.8486);">Bouclage infini</span>
<div style="left:1047px;top:222px;width:14px;height:14px;box-sizing:border-box;background:#fff;border:1px solid #b3b7d4;border-radius:3px;"></div>
<span style="left:853px;top:245.42px;font-size:12.5px;color:#3c416e;transform:scaleX(0.8459);">Nbre de boucles</span>
<div style="left:933px;top:242px;width:53px;height:19px;box-sizing:border-box;background:#fff;border:1px solid #a9aecf;border-radius:2px;"></div>
<div style="left:970px;top:243px;width:15px;height:17px;background:linear-gradient(#eceef6,#d4d7e8);border-radius:0 2px 2px 0;"></div>
<svg style="left:970px;top:242px;" width="15" height="19" viewBox="0 0 15 19"><path d="M2.8 7.5 L7.5 2.9000000000000004 L12.2 7.5Z M2.8 11.5 L7.5 16.1 L12.2 11.5Z" fill="#000"/></svg>
<span style="left:936px;top:245.42px;font-size:12.5px;color:#000;transform:scaleX(0.8629);">10</span>
<span style="left:991px;top:245.42px;font-size:12.5px;color:#3c416e;transform:scaleX(0.8164);">Délai (s)</span>
<div style="left:1039px;top:242px;width:38px;height:19px;box-sizing:border-box;background:#fff;border:1px solid #a9aecf;border-radius:2px;"></div>
<div style="left:1061px;top:243px;width:15px;height:17px;background:linear-gradient(#eceef6,#d4d7e8);border-radius:0 2px 2px 0;"></div>
<svg style="left:1061px;top:242px;" width="15" height="19" viewBox="0 0 15 19"><path d="M2.8 7.5 L7.5 2.9000000000000004 L12.2 7.5Z M2.8 11.5 L7.5 16.1 L12.2 11.5Z" fill="#000"/></svg>
<span style="left:1042px;top:245.42px;font-size:12.5px;color:#000;transform:scaleX(0.8629);">0</span>
<div style="left:856px;top:268px;width:226px;height:1px;background:#a9aecf;"></div>
<div style="left:856px;top:269px;width:226px;height:1px;background:#fafbfd;"></div>
<span style="left:853px;top:277.92px;font-size:12.5px;color:#3c416e;transform:scaleX(0.7695);">BinX:</span>
<div style="left:883px;top:275px;width:38px;height:19px;box-sizing:border-box;background:#fff;border:1px solid #a9aecf;border-radius:2px;"></div>
<div style="left:905px;top:276px;width:15px;height:17px;background:linear-gradient(#eceef6,#d4d7e8);border-radius:0 2px 2px 0;"></div>
<svg style="left:905px;top:275px;" width="15" height="19" viewBox="0 0 15 19"><path d="M2.8 7.5 L7.5 2.9000000000000004 L12.2 7.5Z M2.8 11.5 L7.5 16.1 L12.2 11.5Z" fill="#000"/></svg>
<span style="left:886px;top:278.42px;font-size:12.5px;color:#000;transform:scaleX(0.8629);">2</span>
<span style="left:933px;top:277.92px;font-size:12.5px;color:#3c416e;transform:scaleX(0.7880);">BinY:</span>
<div style="left:968px;top:275px;width:38px;height:19px;box-sizing:border-box;background:#fff;border:1px solid #a9aecf;border-radius:2px;"></div>
<div style="left:990px;top:276px;width:15px;height:17px;background:linear-gradient(#eceef6,#d4d7e8);border-radius:0 2px 2px 0;"></div>
<svg style="left:990px;top:275px;" width="15" height="19" viewBox="0 0 15 19"><path d="M2.8 7.5 L7.5 2.9000000000000004 L12.2 7.5Z M2.8 11.5 L7.5 16.1 L12.2 11.5Z" fill="#000"/></svg>
<span style="left:971px;top:278.42px;font-size:12.5px;color:#000;transform:scaleX(0.8629);">2</span>
<div style="left:1024px;top:277px;width:14px;height:14px;box-sizing:border-box;background:linear-gradient(#f58a5c,#ec7440);border:1px solid #c8683c;border-radius:3px;"></div>
<svg style="left:1024px;top:277px;" width="14" height="14" viewBox="0 0 14 14"><path d="M3.2 7.2 L5.8 10.2 L11 3.6" fill="none" stroke="#5a2408" stroke-width="2"/></svg>
<span style="left:1042.5px;top:279.42px;font-size:12.5px;color:#000;transform:scaleX(0.7916);">Lier</span>
<div style="left:854px;top:302px;width:73px;height:23px;background:linear-gradient(#e6e8f2,#d9dcea 42%,#d0d3e5 58%,#c6c9df);border:1px solid #8c92bc;box-shadow:inset 0 1px 0 #f4f5fa;box-sizing:border-box;border-radius:4px;"></div>
<span style="left:862px;top:308.42px;font-size:12.5px;color:#000;transform:scaleX(0.8541);">Exp Longue</span>
<div style="left:934px;top:302px;width:73px;height:23px;background:linear-gradient(#e6e8f2,#d9dcea 42%,#d0d3e5 58%,#c6c9df);border:1px solid #8c92bc;box-shadow:inset 0 1px 0 #f4f5fa;box-sizing:border-box;border-radius:4px;"></div>
<span style="left:944px;top:308.42px;font-size:12.5px;color:#000;transform:scaleX(0.8540);">Exp. courte</span>
<div style="left:1014px;top:302px;width:73px;height:23px;background:linear-gradient(#e6e8f2,#d9dcea 42%,#d0d3e5 58%,#c6c9df);border:1px solid #8c92bc;box-shadow:inset 0 1px 0 #f4f5fa;box-sizing:border-box;border-radius:4px;"></div>
<span style="left:1026px;top:308.42px;font-size:12.5px;color:#000;transform:scaleX(0.8701);">Sequence</span>
<div style="left:864px;top:328px;width:209px;height:15px;background:#ffff00;border-radius:2px;"></div>
<span style="left:929px;top:329.92px;font-size:12.5px;color:#3c416e;transform:scaleX(0.8079);">Caméra n°1</span>
<div style="left:848px;top:365px;width:241px;height:139px;box-sizing:border-box;border:1px solid #a9aecf;background:#e8ebf1;"></div>
<div style="left:850px;top:348px;width:44px;height:17px;box-sizing:border-box;background:linear-gradient(#dadded,#c9cde3);border:1px solid #989ec6;border-bottom:none;border-radius:4px 4px 0 0;"></div>
<span style="left:856px;top:349.92px;font-size:12.5px;color:#3c416e;transform:scaleX(0.8263);">Fichier</span>
<div style="left:953px;top:348px;width:48px;height:17px;box-sizing:border-box;background:linear-gradient(#dadded,#c9cde3);border:1px solid #989ec6;border-bottom:none;border-radius:4px 4px 0 0;"></div>
<span style="left:959px;top:349.92px;font-size:12.5px;color:#3c416e;transform:scaleX(0.8096);">Caméra</span>
<div style="left:1001px;top:348px;width:67px;height:17px;box-sizing:border-box;background:linear-gradient(#dadded,#c9cde3);border:1px solid #989ec6;border-bottom:none;border-radius:4px 4px 0 0;"></div>
<span style="left:1007.5px;top:349.92px;font-size:12.5px;color:#3c416e;transform:scaleX(0.8383);clip-path:inset(-3px 1px -3px 0);">Temp. CCI</span>
<div style="left:893px;top:345px;width:60px;height:21px;box-sizing:border-box;background:linear-gradient(#fbfbfd,#e8ebf1 80%);border:1px solid #a9aecf;border-bottom:none;border-radius:4px 4px 0 0;"></div>
<span style="left:899px;top:348.92px;font-size:12.5px;color:#000;transform:scaleX(0.8423);">Fenêtrage</span>
<div style="left:1056px;top:345px;width:34px;height:19px;background:#e8ebf1;"></div>
<div style="left:1057px;top:346px;width:16px;height:16px;box-sizing:border-box;background:linear-gradient(#f8f8fc,#e2e4f0);border:1px solid #b3b7d4;border-radius:3px;"></div>
<svg style="left:1057px;top:346px;" width="16" height="16" viewBox="0 0 16 16"><path d="M9.5 4.5 L5.5 8 L9.5 11.5Z" fill="#3c416e"/></svg>
<div style="left:1073px;top:346px;width:16px;height:16px;box-sizing:border-box;background:linear-gradient(#f8f8fc,#e2e4f0);border:1px solid #b3b7d4;border-radius:3px;"></div>
<svg style="left:1073px;top:346px;" width="16" height="16" viewBox="0 0 16 16"><path d="M6.5 4.5 L10.5 8 L6.5 11.5Z" fill="#3c416e"/></svg>
<div style="left:853px;top:370px;width:232px;height:44px;box-sizing:border-box;background:#fff;border:1px solid #a9aecf;"></div>
<div style="left:854px;top:371px;width:51px;height:19px;box-sizing:border-box;background:linear-gradient(#e8eaf3,#d6d9e9);border-right:1px solid #c2c5dc;border-bottom:1px solid #c6c9de;box-shadow:inset 1px 0 0 #eef0f7;"></div>
<span style="left:859.8px;top:373.62px;font-size:12.5px;color:#000;transform:scaleX(0.7649);">X1</span>
<div style="left:854px;top:390px;width:50px;height:18px;box-sizing:border-box;background:linear-gradient(#f58a58,#ea7038);border:1px solid #c8683c;"></div>
<span style="left:860.9px;top:393.42px;font-size:12.5px;color:#fff;transform:scaleX(0.7838);">1461</span>
<div style="left:905px;top:371px;width:51px;height:19px;box-sizing:border-box;background:linear-gradient(#e8eaf3,#d6d9e9);border-right:1px solid #c2c5dc;border-bottom:1px solid #c6c9de;box-shadow:inset 1px 0 0 #eef0f7;"></div>
<span style="left:910.8px;top:373.62px;font-size:12.5px;color:#000;transform:scaleX(0.8172);">Y1</span>
<div style="left:905px;top:390px;width:51px;height:19px;box-sizing:border-box;border-right:1px solid #e0e2ee;border-bottom:1px solid #e0e2ee;"></div>
<span style="left:911.9px;top:393.42px;font-size:12.5px;color:#000;transform:scaleX(0.8198);">935</span>
<div style="left:956px;top:371px;width:51px;height:19px;box-sizing:border-box;background:linear-gradient(#e8eaf3,#d6d9e9);border-right:1px solid #c2c5dc;border-bottom:1px solid #c6c9de;box-shadow:inset 1px 0 0 #eef0f7;"></div>
<span style="left:961.5px;top:373.62px;font-size:12.5px;color:#000;transform:scaleX(0.8956);">X2</span>
<div style="left:956px;top:390px;width:51px;height:19px;box-sizing:border-box;border-right:1px solid #e0e2ee;border-bottom:1px solid #e0e2ee;"></div>
<span style="left:962.1px;top:393.42px;font-size:12.5px;color:#000;transform:scaleX(0.8593);">1597</span>
<div style="left:1007px;top:371px;width:51px;height:19px;box-sizing:border-box;background:linear-gradient(#e8eaf3,#d6d9e9);border-right:1px solid #c2c5dc;border-bottom:1px solid #c6c9de;box-shadow:inset 1px 0 0 #eef0f7;"></div>
<span style="left:1012.4px;top:373.62px;font-size:12.5px;color:#000;transform:scaleX(0.9152);">Y2</span>
<div style="left:1007px;top:390px;width:51px;height:19px;box-sizing:border-box;border-right:1px solid #e0e2ee;border-bottom:1px solid #e0e2ee;"></div>
<span style="left:1013.3px;top:393.42px;font-size:12.5px;color:#000;transform:scaleX(0.8629);">1259</span>
<div style="left:855px;top:420px;width:68px;height:23px;background:linear-gradient(#e6e8f2,#d9dcea 42%,#d0d3e5 58%,#c6c9df);border:1px solid #8c92bc;box-shadow:inset 0 1px 0 #f4f5fa;box-sizing:border-box;border-radius:4px;"></div>
<span style="left:861px;top:426.42px;font-size:12.5px;color:#000;transform:scaleX(0.8572);">Def. fenêtre</span>
<div style="left:929px;top:420px;width:68px;height:23px;background:linear-gradient(#e6e8f2,#d9dcea 42%,#d0d3e5 58%,#c6c9df);border:1px solid #8c92bc;box-shadow:inset 0 1px 0 #f4f5fa;box-sizing:border-box;border-radius:4px;"></div>
<span style="left:950px;top:426.42px;font-size:12.5px;color:#000;transform:scaleX(0.8268);">Entier</span>
<div style="left:855px;top:449px;width:68px;height:23px;background:linear-gradient(#e6e8f2,#d9dcea 42%,#d0d3e5 58%,#c6c9df);border:1px solid #8c92bc;box-shadow:inset 0 1px 0 #f4f5fa;box-sizing:border-box;border-radius:4px;"></div>
<span style="left:866px;top:455.42px;font-size:12.5px;color:#000;transform:scaleX(0.8710);">1/2 trame</span>
<div style="left:929px;top:449px;width:68px;height:23px;background:linear-gradient(#e6e8f2,#d9dcea 42%,#d0d3e5 58%,#c6c9df);border:1px solid #8c92bc;box-shadow:inset 0 1px 0 #f4f5fa;box-sizing:border-box;border-radius:4px;"></div>
<span style="left:940px;top:455.42px;font-size:12.5px;color:#000;transform:scaleX(0.8710);">3/4 trame</span>
<div style="left:1003px;top:449px;width:68px;height:23px;background:linear-gradient(#e6e8f2,#d9dcea 42%,#d0d3e5 58%,#c6c9df);border:1px solid #8c92bc;box-shadow:inset 0 1px 0 #f4f5fa;box-sizing:border-box;border-radius:4px;"></div>
<span style="left:1012px;top:455.42px;font-size:12.5px;color:#000;transform:scaleX(0.8884);">1/4 Trame</span>
<div style="left:855px;top:478px;width:68px;height:23px;background:linear-gradient(#e6e8f2,#d9dcea 42%,#d0d3e5 58%,#c6c9df);border:1px solid #8c92bc;box-shadow:inset 0 1px 0 #f4f5fa;box-sizing:border-box;border-radius:4px;"></div>
<span style="left:872px;top:484.42px;font-size:12.5px;color:#000;transform:scaleX(0.8584);">Sauver</span>
<div style="left:929px;top:481px;width:148px;height:18px;box-sizing:border-box;background:#fff;border:1px solid #a9aecf;border-radius:2px;"></div>
<div style="left:1060px;top:482px;width:16px;height:16px;background:linear-gradient(#eceef6,#d4d7e8);border-left:1px solid #c6c9de;box-sizing:border-box;"></div>
<svg style="left:1060px;top:482px;" width="16" height="16" viewBox="0 0 16 16"><path d="M5 6.5 L8.5 3 L12 6.5Z M5 9.5 L8.5 13 L12 9.5Z" fill="#6a74a8"/></svg>
<span style="left:931px;top:484.42px;font-size:12.5px;color:#000;transform:scaleX(0.8531);">Pas de pos. sauvées</span>
<div style="left:845px;top:510px;width:248px;height:29px;background:linear-gradient(#e6e8f2,#d9dcea 42%,#d0d3e5 58%,#c6c9df);border:1px solid #8c92bc;box-shadow:inset 0 1px 0 #f4f5fa;box-sizing:border-box;border-radius:4px;"></div>
<svg style="left:938px;top:517px;" width="16" height="16" viewBox="0 0 16 16"><path d="M6 1 H10 V6 H13.5 L8 11.5 L2.5 6 H6Z" fill="#e81010"/><rect x="1" y="12.5" width="14" height="2" fill="#e81010"/></svg>
<span style="left:958.5px;top:519.42px;font-size:12.5px;color:#000;transform:scaleX(0.7946);">Minimiser</span>
</body></html>
